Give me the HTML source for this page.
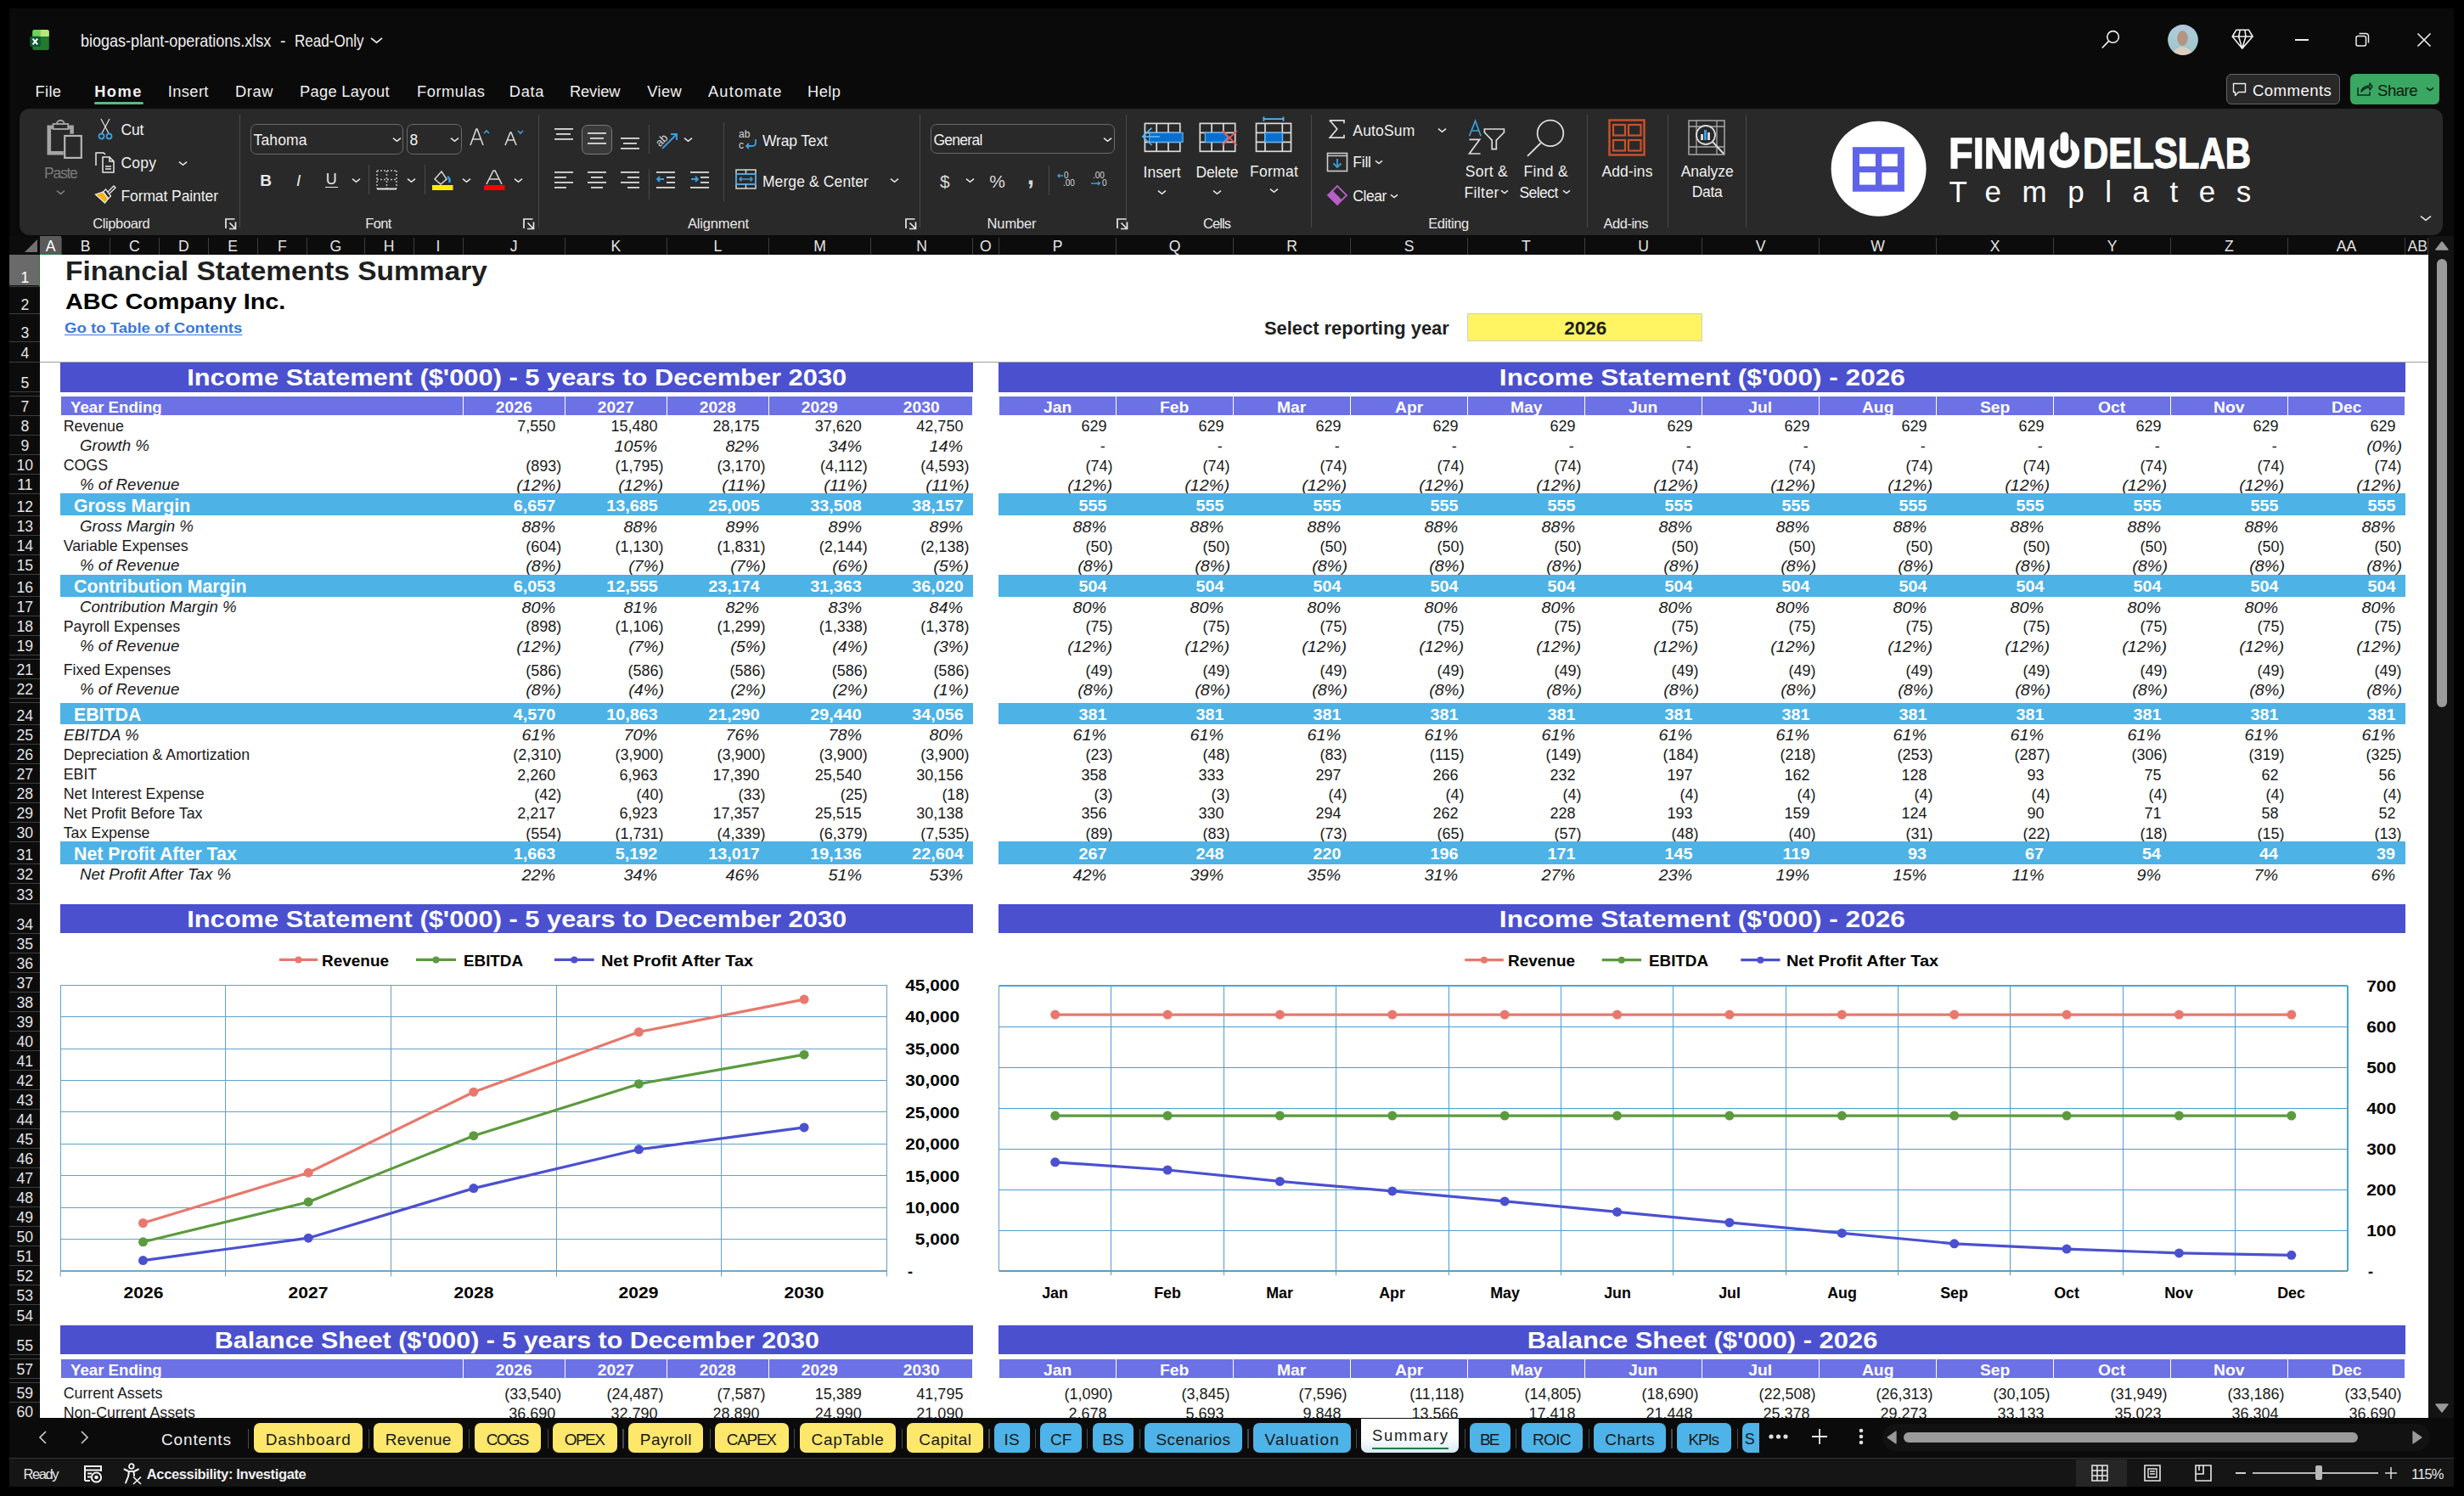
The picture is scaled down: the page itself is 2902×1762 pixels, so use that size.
<!DOCTYPE html><html><head><meta charset="utf-8"><style>html,body{margin:0;padding:0;background:#000;width:2902px;height:1762px;overflow:hidden}body{position:relative;font-family:"Liberation Sans",sans-serif}div,span,svg{position:absolute}.t{white-space:pre}</style></head><body>
<div style="left:11.00px;top:10.00px;width:2879.00px;height:1741.00px;background:#0a0a0a;"></div>
<svg style="position:absolute;left:34px;top:34px;overflow:visible" width="25" height="25" viewBox="0 0 25 25"><defs><clipPath id="xl"><rect x="4.25" y="0.9" width="19.55" height="24" rx="2.5"/></clipPath></defs><g clip-path="url(#xl)"><rect x="0" y="0" width="25" height="25" fill="#237a2e"/><rect x="0" y="0" width="13.3" height="9" fill="#6ed35a"/><rect x="13.3" y="0" width="12" height="9" fill="#b8e878"/></g><rect x="1.2" y="8.8" width="12.7" height="12.3" rx="2.2" fill="#0c5a30"/><path d="M4.6 11.6l5.6 6.8M10.2 11.6l-5.6 6.8" stroke="#fff" stroke-width="2.1"/></svg>
<span class="t" style="left:95.40px;top:39.04px;font-size:19.8px;line-height:19.8px;color:#f0f0f0;transform:scaleX(0.9110);transform-origin:left center;">biogas-plant-operations.xlsx</span>
<span class="t" style="left:330.00px;top:39.29px;font-size:19.5px;line-height:19.5px;color:#f0f0f0;">-</span>
<span class="t" style="left:347.40px;top:39.04px;font-size:19.8px;line-height:19.8px;color:#f0f0f0;transform:scaleX(0.8622);transform-origin:left center;">Read-Only</span>
<svg style="position:absolute;left:435.2px;top:38.5px;overflow:visible" width="17.0" height="17.0" viewBox="0 0 17.0 17.0"><polyline points="2,5.9 8.5,11.1 15.0,5.9" fill="none" stroke="#f0f0f0" stroke-width="1.8"/></svg>
<svg style="position:absolute;left:2473px;top:34px;overflow:visible" width="24" height="24" viewBox="0 0 24 24"><circle cx="15.6" cy="9.4" r="6.8" fill="none" stroke="#eee" stroke-width="1.6"/><path d="M10.6 14.4L2.8 22.5" stroke="#eee" stroke-width="1.7"/></svg>
<svg style="position:absolute;left:2553px;top:29px;overflow:visible" width="36" height="36" viewBox="0 0 36 36"><defs><clipPath id="av"><circle cx="18" cy="18" r="17.9"/></clipPath><linearGradient id="avg" x1="0" y1="0" x2="0" y2="1"><stop offset="0" stop-color="#b5c6e0"/><stop offset="0.3" stop-color="#a9cbd6"/><stop offset="1" stop-color="#9cc5c8"/></linearGradient></defs><g clip-path="url(#av)"><rect width="36" height="36" fill="url(#avg)"/><ellipse cx="17.5" cy="16" rx="6.3" ry="9" fill="#b39584"/><path d="M5 37 Q9 26 17 26 Q26 26 31 37Z" fill="#d9cfc3"/></g></svg>
<svg style="position:absolute;left:2628px;top:34px;overflow:visible" width="27" height="25" viewBox="0 0 27 25"><path d="M5.9 1.2h14.5l4.7 7.8L12.7 23.1 1.2 9z M1.2 9h23.9 M10.3 1.2L8.6 9l4.1 14.1 M15.9 1.2L17 9l-4.3 14.1" fill="none" stroke="#f0f0f0" stroke-width="1.6" stroke-linejoin="round"/></svg>
<div style="left:2702.70px;top:46.00px;width:16.30px;height:1.60px;background:#eee;"></div>
<svg style="position:absolute;left:2774px;top:38px;overflow:visible" width="18" height="18" viewBox="0 0 18 18"><rect x="1" y="4.5" width="11.5" height="11.5" rx="2" fill="none" stroke="#eee" stroke-width="1.5"/><path d="M4.5 1.5h8a3 3 0 0 1 3 3v8" fill="none" stroke="#eee" stroke-width="1.5"/></svg>
<svg style="position:absolute;left:2846px;top:38px;overflow:visible" width="18" height="18" viewBox="0 0 18 18"><path d="M1.5 1.5l15 15M16.5 1.5l-15 15" stroke="#eee" stroke-width="1.6"/></svg>
<div style="left:2621.60px;top:87.00px;width:134.00px;height:36.00px;background:#292929;border:1.3px solid #666;border-radius:6px;box-sizing:border-box;"></div>
<svg style="position:absolute;left:2629px;top:97px;overflow:visible" width="17" height="17" viewBox="0 0 17 17"><path d="M1.5 1.5h14v10h-8l-4 4v-4h-2z" fill="none" stroke="#eee" stroke-width="1.4" stroke-linejoin="round"/></svg>
<span class="t" style="left:2653.00px;top:97.96px;font-size:18.6px;line-height:18.6px;color:#f8f8f8;letter-spacing:0.425px;">Comments</span>
<div style="left:2768.00px;top:87.00px;width:104.70px;height:36.00px;background:#3aa862;border-radius:6px;"></div>
<svg style="position:absolute;left:2775px;top:95px;overflow:visible" width="20" height="19" viewBox="0 0 20 19"><path d="M2 8v9h14v-4" fill="none" stroke="#102a18" stroke-width="1.5"/><path d="M6 13c1-5 5-7 10-7V3l3 4-3 4V8c-4 0-7 1-10 5z" fill="none" stroke="#102a18" stroke-width="1.4" stroke-linejoin="round"/></svg>
<span class="t" style="left:2800.00px;top:97.96px;font-size:18.6px;line-height:18.6px;color:#0a1a0e;letter-spacing:-0.508px;">Share</span>
<svg style="position:absolute;left:2856px;top:99px;overflow:visible" width="12" height="12" viewBox="0 0 12 12"><polyline points="2,4.4 6,7.6 10,4.4" fill="none" stroke="#0d1f12" stroke-width="1.6"/></svg>
<span class="t" style="left:41.60px;top:99.11px;font-size:18.3px;line-height:18.3px;color:#f0f0f0;letter-spacing:0.304px;">File</span>
<span class="t" style="left:111.20px;top:99.11px;font-size:18.3px;line-height:18.3px;color:#f0f0f0;font-weight:700;letter-spacing:1.452px;">Home</span>
<span class="t" style="left:197.80px;top:99.11px;font-size:18.3px;line-height:18.3px;color:#f0f0f0;letter-spacing:0.386px;">Insert</span>
<span class="t" style="left:277.00px;top:99.11px;font-size:18.3px;line-height:18.3px;color:#f0f0f0;letter-spacing:0.632px;">Draw</span>
<span class="t" style="left:353.00px;top:99.11px;font-size:18.3px;line-height:18.3px;color:#f0f0f0;letter-spacing:0.283px;">Page Layout</span>
<span class="t" style="left:491.00px;top:99.11px;font-size:18.3px;line-height:18.3px;color:#f0f0f0;letter-spacing:0.533px;">Formulas</span>
<span class="t" style="left:599.80px;top:99.11px;font-size:18.3px;line-height:18.3px;color:#f0f0f0;letter-spacing:0.648px;">Data</span>
<span class="t" style="left:670.90px;top:99.11px;font-size:18.3px;line-height:18.3px;color:#f0f0f0;letter-spacing:-0.081px;">Review</span>
<span class="t" style="left:762.20px;top:99.11px;font-size:18.3px;line-height:18.3px;color:#f0f0f0;letter-spacing:0.422px;">View</span>
<span class="t" style="left:834.00px;top:99.11px;font-size:18.3px;line-height:18.3px;color:#f0f0f0;letter-spacing:1.167px;">Automate</span>
<span class="t" style="left:951.00px;top:99.11px;font-size:18.3px;line-height:18.3px;color:#f0f0f0;letter-spacing:0.454px;">Help</span>
<div style="left:111.00px;top:119.70px;width:57.80px;height:3.10px;background:#5eb87a;border-radius:2px;"></div>
<div style="left:23.00px;top:128.00px;width:2854.00px;height:149.00px;background:#292929;border-radius:12px;"></div>
<div style="left:282.20px;top:135.00px;width:1.00px;height:133.00px;background:#4a4a4a;"></div>
<div style="left:633.60px;top:135.00px;width:1.00px;height:133.00px;background:#4a4a4a;"></div>
<div style="left:1083.20px;top:135.00px;width:1.00px;height:133.00px;background:#4a4a4a;"></div>
<div style="left:1326.00px;top:135.00px;width:1.00px;height:133.00px;background:#4a4a4a;"></div>
<div style="left:1543.80px;top:135.00px;width:1.00px;height:133.00px;background:#4a4a4a;"></div>
<div style="left:1868.50px;top:135.00px;width:1.00px;height:133.00px;background:#4a4a4a;"></div>
<div style="left:1963.50px;top:135.00px;width:1.00px;height:133.00px;background:#4a4a4a;"></div>
<div style="left:2056.30px;top:135.00px;width:1.00px;height:133.00px;background:#4a4a4a;"></div>
<svg style="position:absolute;left:50px;top:138px;overflow:visible" width="50" height="50" viewBox="0 0 50 50"><path d="M12 11.7H7.8V42.3H24.8" fill="none" stroke="#a4a4a4" stroke-width="4.6"/><path d="M30.5 11.7H34.6V19.8" fill="none" stroke="#a4a4a4" stroke-width="4.6"/><rect x="12.6" y="8" width="17.6" height="6" fill="none" stroke="#a4a4a4" stroke-width="1.9"/><path d="M17 8a4.2 4.2 0 0 1 8.6 0" fill="none" stroke="#a4a4a4" stroke-width="1.9"/><rect x="26.2" y="22" width="19.6" height="25.9" fill="none" stroke="#b4b4b4" stroke-width="2.2"/></svg>
<span class="t" style="left:52.00px;top:195.99px;font-size:17.5px;line-height:17.5px;color:#7a7a7a;letter-spacing:-1.237px;">Paste</span>
<svg style="position:absolute;left:65.0px;top:219.5px;overflow:visible" width="13.0" height="13.0" viewBox="0 0 13.0 13.0"><polyline points="2,4.7 6.5,8.3 11.0,4.7" fill="none" stroke="#7a7a7a" stroke-width="1.7"/></svg>
<svg style="position:absolute;left:114px;top:139px;overflow:visible" width="20" height="26" viewBox="0 0 20 26"><path d="M5 1l9 17M15 1L6 18" stroke="#e8e8e8" stroke-width="1.2"/><circle cx="5.5" cy="21.5" r="3" fill="none" stroke="#3c9ee0" stroke-width="1.8"/><circle cx="14.5" cy="21.5" r="3" fill="none" stroke="#3c9ee0" stroke-width="1.8"/></svg>
<span class="t" style="left:142.40px;top:144.79px;font-size:17.5px;line-height:17.5px;color:#f0f0f0;letter-spacing:-0.116px;">Cut</span>
<svg style="position:absolute;left:111px;top:178px;overflow:visible" width="26" height="26" viewBox="0 0 26 26"><path d="M2 17V2h9l2 2M14 6l0 0" fill="none" stroke="#e8e8e8" stroke-width="1.5"/><path d="M10 7h8l5 5v13H10z M18 7v5h5 M13 18h7M13 21h7" fill="none" stroke="#e8e8e8" stroke-width="1.5"/></svg>
<span class="t" style="left:142.40px;top:183.99px;font-size:17.5px;line-height:17.5px;color:#f0f0f0;letter-spacing:0.216px;">Copy</span>
<svg style="position:absolute;left:208.5px;top:185.5px;overflow:visible" width="13.0" height="13.0" viewBox="0 0 13.0 13.0"><polyline points="2,4.7 6.5,8.3 11.0,4.7" fill="none" stroke="#e8e8e8" stroke-width="1.6"/></svg>
<svg style="position:absolute;left:111px;top:217px;overflow:visible" width="26" height="26" viewBox="0 0 26 26"><path d="M1.5 12l11 10 4-5-6-8z" fill="#f4b400" stroke="#e8e8e8" stroke-width="1.3"/><path d="M10.5 9l6 8 3-3-6-8z" fill="none" stroke="#e8e8e8" stroke-width="1.3"/><path d="M16 9l7-7 2 2-7 7" fill="none" stroke="#e8e8e8" stroke-width="1.4"/></svg>
<span class="t" style="left:142.40px;top:222.69px;font-size:17.5px;line-height:17.5px;color:#f0f0f0;letter-spacing:-0.087px;">Format Painter</span>
<span class="t" style="left:109.20px;top:255.03px;font-size:16.5px;line-height:16.5px;color:#e8e8e8;letter-spacing:-0.378px;">Clipboard</span>
<svg style="position:absolute;left:264.5px;top:257px;overflow:visible" width="14" height="14" viewBox="0 0 14 14"><path d="M1 12V1h10.5M12.5 4.5V12.5H5M5.5 5.5l6 6" fill="none" stroke="#e8e8e8" stroke-width="1.7"/></svg>
<div style="left:295.30px;top:146.20px;width:180.20px;height:35.50px;background:#292929;border:1.3px solid #6a6a6a;border-radius:7px;box-sizing:border-box;"></div>
<span class="t" style="left:298.50px;top:157.19px;font-size:17.5px;line-height:17.5px;color:#f0f0f0;letter-spacing:0.148px;">Tahoma</span>
<svg style="position:absolute;left:460.5px;top:157.5px;overflow:visible" width="13.0" height="13.0" viewBox="0 0 13.0 13.0"><polyline points="2,4.7 6.5,8.3 11.0,4.7" fill="none" stroke="#e8e8e8" stroke-width="1.6"/></svg>
<div style="left:479.40px;top:146.20px;width:64.30px;height:35.50px;background:#292929;border:1.3px solid #6a6a6a;border-radius:7px;box-sizing:border-box;"></div>
<span class="t" style="left:482.40px;top:157.19px;font-size:17.5px;line-height:17.5px;color:#f0f0f0;">8</span>
<svg style="position:absolute;left:528.5px;top:157.5px;overflow:visible" width="13.0" height="13.0" viewBox="0 0 13.0 13.0"><polyline points="2,4.7 6.5,8.3 11.0,4.7" fill="none" stroke="#e8e8e8" stroke-width="1.6"/></svg>
<svg style="position:absolute;left:553px;top:150px;overflow:visible" width="26" height="22" viewBox="0 0 26 22"><path d="M1 21L8 2h1l7 19M4 14h10" fill="none" stroke="#d8d8d8" stroke-width="1.6"/><path d="M17 7l3-3 3 3" fill="none" stroke="#3c9ee0" stroke-width="1.6"/></svg>
<svg style="position:absolute;left:594px;top:152px;overflow:visible" width="24" height="20" viewBox="0 0 24 20"><path d="M1 19L7 4h1l6 15M3.5 13h8" fill="none" stroke="#d8d8d8" stroke-width="1.6"/><path d="M16 2l3 3 3-3" fill="none" stroke="#3c9ee0" stroke-width="1.6"/></svg>
<span class="t" style="left:306.14px;top:202.92px;font-size:19px;line-height:19px;color:#e8e8e8;font-weight:700;">B</span>
<span class="t" style="left:348.96px;top:202.92px;font-size:19px;line-height:19px;color:#e8e8e8;font-style:italic;font-family:"Liberation Serif";">I</span>
<span class="t" style="left:383.80px;top:201.76px;font-size:18px;line-height:18px;color:#e8e8e8;">U</span>
<div style="left:383.00px;top:219.50px;width:14.50px;height:1.50px;background:#e8e8e8;"></div>
<svg style="position:absolute;left:413.0px;top:205.5px;overflow:visible" width="13.0" height="13.0" viewBox="0 0 13.0 13.0"><polyline points="2,4.7 6.5,8.3 11.0,4.7" fill="none" stroke="#e8e8e8" stroke-width="1.6"/></svg>
<div style="left:434.40px;top:193.70px;width:1.00px;height:35.80px;background:#4a4a4a;"></div>
<svg style="position:absolute;left:443px;top:200px;overflow:visible" width="25" height="24" viewBox="0 0 25 24"><path d="M1 1h23M1 1v21M24 1v21M12.5 1v21M1 11.5h23" fill="none" stroke="#bdbdbd" stroke-width="1.5" stroke-dasharray="2 2"/><path d="M1 22.5h23" stroke="#e8e8e8" stroke-width="2"/></svg>
<svg style="position:absolute;left:478.1px;top:205.5px;overflow:visible" width="13.0" height="13.0" viewBox="0 0 13.0 13.0"><polyline points="2,4.7 6.5,8.3 11.0,4.7" fill="none" stroke="#e8e8e8" stroke-width="1.6"/></svg>
<div style="left:499.60px;top:193.70px;width:1.00px;height:35.80px;background:#4a4a4a;"></div>
<svg style="position:absolute;left:508px;top:199px;overflow:visible" width="27" height="27" viewBox="0 0 27 27"><path d="M4 12l8-9 6 9-7 6z" fill="none" stroke="#d8d8d8" stroke-width="1.5"/><path d="M19 9q4 3 2 7" fill="none" stroke="#3c9ee0" stroke-width="2.5"/><rect x="1" y="19" width="24.5" height="6" fill="#ffec00"/></svg>
<svg style="position:absolute;left:543.1px;top:205.5px;overflow:visible" width="13.0" height="13.0" viewBox="0 0 13.0 13.0"><polyline points="2,4.7 6.5,8.3 11.0,4.7" fill="none" stroke="#e8e8e8" stroke-width="1.6"/></svg>
<svg style="position:absolute;left:570px;top:199px;overflow:visible" width="25" height="27" viewBox="0 0 25 27"><path d="M3 18L11 2h2l8 16M6 12h12" fill="none" stroke="#d8d8d8" stroke-width="1.6"/><rect x="0" y="19" width="24.5" height="6" fill="#ff0000"/></svg>
<svg style="position:absolute;left:603.5px;top:205.5px;overflow:visible" width="13.0" height="13.0" viewBox="0 0 13.0 13.0"><polyline points="2,4.7 6.5,8.3 11.0,4.7" fill="none" stroke="#e8e8e8" stroke-width="1.6"/></svg>
<span class="t" style="left:430.30px;top:255.03px;font-size:16.5px;line-height:16.5px;color:#e8e8e8;letter-spacing:-0.672px;">Font</span>
<svg style="position:absolute;left:616px;top:257px;overflow:visible" width="14" height="14" viewBox="0 0 14 14"><path d="M1 12V1h10.5M12.5 4.5V12.5H5M5.5 5.5l6 6" fill="none" stroke="#e8e8e8" stroke-width="1.7"/></svg>
<svg style="position:absolute;left:653px;top:150px;overflow:visible" width="24" height="24" viewBox="0 0 24 24"><rect x="0" y="1" width="22" height="1.8" fill="#dadada"/><rect x="2" y="7" width="17" height="1.8" fill="#dadada"/><rect x="0" y="13" width="22" height="1.8" fill="#dadada"/></svg>
<div style="left:685.40px;top:146.50px;width:35.60px;height:35.10px;background:#3a3a3a;border:1.3px solid #7a7a7a;border-radius:7px;box-sizing:border-box;"></div>
<svg style="position:absolute;left:692px;top:155px;overflow:visible" width="24" height="24" viewBox="0 0 24 24"><rect x="0" y="1" width="22" height="1.8" fill="#dadada"/><rect x="3" y="7" width="16" height="1.8" fill="#dadada"/><rect x="0" y="13" width="22" height="1.8" fill="#dadada"/></svg>
<svg style="position:absolute;left:731px;top:161px;overflow:visible" width="24" height="24" viewBox="0 0 24 24"><rect x="0" y="1" width="22" height="1.8" fill="#dadada"/><rect x="3" y="7" width="16" height="1.8" fill="#dadada"/><rect x="0" y="13" width="22" height="1.8" fill="#dadada"/></svg>
<div style="left:763.50px;top:146.50px;width:1.00px;height:34.50px;background:#4a4a4a;"></div>
<svg style="position:absolute;left:772px;top:151px;overflow:visible" width="28" height="28" viewBox="0 0 28 28"><text x="0" y="18" font-family="Liberation Sans" font-size="13" fill="#d8d8d8" transform="rotate(-45 8 14)">ab</text><path d="M8 24L25 7M18 7h7v7" fill="none" stroke="#3c9ee0" stroke-width="1.8"/></svg>
<svg style="position:absolute;left:803.5px;top:157.5px;overflow:visible" width="13.0" height="13.0" viewBox="0 0 13.0 13.0"><polyline points="2,4.7 6.5,8.3 11.0,4.7" fill="none" stroke="#e8e8e8" stroke-width="1.6"/></svg>
<svg style="position:absolute;left:653px;top:201px;overflow:visible" width="24" height="24" viewBox="0 0 24 24"><rect x="0" y="1" width="22" height="1.8" fill="#dadada"/><rect x="0" y="7" width="14" height="1.8" fill="#dadada"/><rect x="0" y="13" width="22" height="1.8" fill="#dadada"/><rect x="0" y="19" width="14" height="1.8" fill="#dadada"/></svg>
<svg style="position:absolute;left:692px;top:201px;overflow:visible" width="24" height="24" viewBox="0 0 24 24"><rect x="0" y="1" width="22" height="1.8" fill="#dadada"/><rect x="4" y="7" width="14" height="1.8" fill="#dadada"/><rect x="0" y="13" width="22" height="1.8" fill="#dadada"/><rect x="4" y="19" width="14" height="1.8" fill="#dadada"/></svg>
<svg style="position:absolute;left:731px;top:201px;overflow:visible" width="24" height="24" viewBox="0 0 24 24"><rect x="0" y="1" width="22" height="1.8" fill="#dadada"/><rect x="8" y="7" width="14" height="1.8" fill="#dadada"/><rect x="0" y="13" width="22" height="1.8" fill="#dadada"/><rect x="8" y="19" width="14" height="1.8" fill="#dadada"/></svg>
<div style="left:763.50px;top:199.00px;width:1.00px;height:36.00px;background:#4a4a4a;"></div>
<svg style="position:absolute;left:773px;top:201px;overflow:visible" width="24" height="24" viewBox="0 0 24 24"><rect x="0" y="1" width="22" height="1.8" fill="#dadada"/><rect x="12" y="7" width="10" height="1.8" fill="#dadada"/><rect x="12" y="13" width="10" height="1.8" fill="#dadada"/><rect x="0" y="19" width="22" height="1.8" fill="#dadada"/><path d="M9 10H1M4 7l-3 3 3 3" fill="none" stroke="#3c9ee0" stroke-width="1.8"/></svg>
<svg style="position:absolute;left:813px;top:201px;overflow:visible" width="24" height="24" viewBox="0 0 24 24"><rect x="0" y="1" width="22" height="1.8" fill="#dadada"/><rect x="12" y="7" width="10" height="1.8" fill="#dadada"/><rect x="12" y="13" width="10" height="1.8" fill="#dadada"/><rect x="0" y="19" width="22" height="1.8" fill="#dadada"/><path d="M1 10h8M6 7l3 3-3 3" fill="none" stroke="#3c9ee0" stroke-width="1.8"/></svg>
<div style="left:851.60px;top:143.70px;width:1.00px;height:93.30px;background:#4a4a4a;"></div>
<svg style="position:absolute;left:870px;top:151px;overflow:visible" width="24" height="26" viewBox="0 0 24 26"><text x="0" y="11" font-family="Liberation Sans" font-size="12" fill="#d8d8d8">ab</text><text x="0" y="24" font-family="Liberation Sans" font-size="12" fill="#d8d8d8">c</text><path d="M20 13v4q0 4-4 4H9M12 18l-3 3 3 3" fill="none" stroke="#3c9ee0" stroke-width="1.8"/></svg>
<span class="t" style="left:897.90px;top:158.19px;font-size:17.5px;line-height:17.5px;color:#f0f0f0;letter-spacing:-0.142px;">Wrap Text</span>
<svg style="position:absolute;left:866px;top:199px;overflow:visible" width="25" height="24" viewBox="0 0 25 24"><rect x="1" y="1" width="23" height="22" fill="none" stroke="#d8d8d8" stroke-width="1.5"/><path d="M1 6h23M1 18h23M12.5 1v5M12.5 18v5" stroke="#d8d8d8" stroke-width="1.5"/><rect x="1" y="6" width="23" height="12" fill="none" stroke="#3c9ee0" stroke-width="1.5"/><path d="M5 12h15M7.5 9.5L5 12l2.5 2.5M17.5 9.5L20 12l-2.5 2.5" fill="none" stroke="#3c9ee0" stroke-width="1.5"/></svg>
<span class="t" style="left:897.90px;top:206.19px;font-size:17.5px;line-height:17.5px;color:#f0f0f0;letter-spacing:0.113px;">Merge &amp; Center</span>
<svg style="position:absolute;left:1047.2px;top:205.5px;overflow:visible" width="13.0" height="13.0" viewBox="0 0 13.0 13.0"><polyline points="2,4.7 6.5,8.3 11.0,4.7" fill="none" stroke="#e8e8e8" stroke-width="1.6"/></svg>
<span class="t" style="left:810.00px;top:255.03px;font-size:16.5px;line-height:16.5px;color:#e8e8e8;letter-spacing:-0.172px;">Alignment</span>
<svg style="position:absolute;left:1066px;top:257px;overflow:visible" width="14" height="14" viewBox="0 0 14 14"><path d="M1 12V1h10.5M12.5 4.5V12.5H5M5.5 5.5l6 6" fill="none" stroke="#e8e8e8" stroke-width="1.7"/></svg>
<div style="left:1096.20px;top:146.00px;width:217.10px;height:35.40px;background:#292929;border:1.3px solid #6a6a6a;border-radius:7px;box-sizing:border-box;"></div>
<span class="t" style="left:1099.40px;top:157.19px;font-size:17.5px;line-height:17.5px;color:#f0f0f0;letter-spacing:-0.710px;">General</span>
<svg style="position:absolute;left:1297.9px;top:157.5px;overflow:visible" width="13.0" height="13.0" viewBox="0 0 13.0 13.0"><polyline points="2,4.7 6.5,8.3 11.0,4.7" fill="none" stroke="#e8e8e8" stroke-width="1.6"/></svg>
<span class="t" style="left:1106.96px;top:203.22px;font-size:21px;line-height:21px;color:#d8d8d8;">$</span>
<svg style="position:absolute;left:1135.5px;top:205.5px;overflow:visible" width="13.0" height="13.0" viewBox="0 0 13.0 13.0"><polyline points="2,4.7 6.5,8.3 11.0,4.7" fill="none" stroke="#e8e8e8" stroke-width="1.6"/></svg>
<span class="t" style="left:1165.16px;top:203.22px;font-size:21px;line-height:21px;color:#d8d8d8;">%</span>
<span class="t" style="left:1209.73px;top:191.60px;font-size:30px;line-height:30px;color:#d8d8d8;font-weight:700;">,</span>
<div style="left:1235.40px;top:195.00px;width:1.00px;height:35.00px;background:#4a4a4a;"></div>
<svg style="position:absolute;left:1245px;top:203px;overflow:visible" width="24" height="16" viewBox="0 0 24 16"><text x="8" y="7" font-family="Liberation Sans" font-size="10" fill="#d8d8d8">0</text><text x="7" y="16" font-family="Liberation Sans" font-size="10" fill="#d8d8d8">.00</text><path d="M1 4h6M3 2l-2 2 2 2" fill="none" stroke="#3c9ee0" stroke-width="1.4"/></svg>
<svg style="position:absolute;left:1284px;top:203px;overflow:visible" width="24" height="16" viewBox="0 0 24 16"><text x="3" y="7" font-family="Liberation Sans" font-size="10" fill="#d8d8d8">.00</text><text x="14" y="16" font-family="Liberation Sans" font-size="10" fill="#d8d8d8">0</text><path d="M1 13h11M9 11l2 2-2 2" fill="none" stroke="#3c9ee0" stroke-width="1.4"/></svg>
<span class="t" style="left:1162.60px;top:255.03px;font-size:16.5px;line-height:16.5px;color:#e8e8e8;letter-spacing:-0.137px;">Number</span>
<svg style="position:absolute;left:1314.5px;top:257px;overflow:visible" width="14" height="14" viewBox="0 0 14 14"><path d="M1 12V1h10.5M12.5 4.5V12.5H5M5.5 5.5l6 6" fill="none" stroke="#e8e8e8" stroke-width="1.7"/></svg>
<svg style="position:absolute;left:1345px;top:138px;overflow:visible" width="52" height="44" viewBox="0 0 52 44"><rect x="3.4" y="7.4" width="41.4" height="32.9" fill="none" stroke="#dcdcdc" stroke-width="1.7"/><path d="M17.2 7.4v33M31 7.4v33M3.4 18.4h41.4M3.4 29.3h41.4" fill="none" stroke="#dcdcdc" stroke-width="1.7"/><rect x="8.7" y="18.4" width="39.3" height="10.9" fill="#0a6ed1" stroke="#58b4f0" stroke-width="1.3"/><path d="M11.5 12.7L0.8 22.8 11.5 33M0.8 22.8h20" fill="none" stroke="#58b4f0" stroke-width="1.7"/></svg>
<span class="t" style="left:1346.50px;top:195.19px;font-size:17.5px;line-height:17.5px;color:#f0f0f0;letter-spacing:0.047px;">Insert</span>
<svg style="position:absolute;left:1362.0px;top:220.0px;overflow:visible" width="13.0" height="13.0" viewBox="0 0 13.0 13.0"><polyline points="2,4.7 6.5,8.3 11.0,4.7" fill="none" stroke="#e8e8e8" stroke-width="1.6"/></svg>
<svg style="position:absolute;left:1410px;top:138px;overflow:visible" width="52" height="44" viewBox="0 0 52 44"><rect x="3.3" y="7.4" width="41.4" height="32.9" fill="none" stroke="#dcdcdc" stroke-width="1.7"/><path d="M17.1 7.4v33M30.9 7.4v33M3.3 18.4h41.4M3.3 29.3h41.4" fill="none" stroke="#dcdcdc" stroke-width="1.7"/><path d="M9.4 18.4h22l5 5.45-5 5.45h-22z" fill="#0a6ed1" stroke="#58b4f0" stroke-width="1.3"/><path d="M29.7 16l17 17M46.7 16l-17 17" stroke="#e35a5a" stroke-width="1.8"/></svg>
<span class="t" style="left:1408.40px;top:195.19px;font-size:17.5px;line-height:17.5px;color:#f0f0f0;letter-spacing:-0.117px;">Delete</span>
<svg style="position:absolute;left:1426.9px;top:220.0px;overflow:visible" width="13.0" height="13.0" viewBox="0 0 13.0 13.0"><polyline points="2,4.7 6.5,8.3 11.0,4.7" fill="none" stroke="#e8e8e8" stroke-width="1.6"/></svg>
<svg style="position:absolute;left:1476px;top:136px;overflow:visible" width="52" height="46" viewBox="0 0 52 46"><g transform="translate(0,2)"><rect x="3.5" y="7.4" width="41" height="32.9" fill="none" stroke="#dcdcdc" stroke-width="1.7"/><path d="M14 7.4v33M34.3 7.4v33M3.5 18.4h41M3.5 29.3h41" fill="none" stroke="#dcdcdc" stroke-width="1.7"/><rect x="14" y="18.4" width="20.3" height="10.9" fill="#0a6ed1" stroke="#58b4f0" stroke-width="1.3"/><path d="M12.4 2.1h23.1M12.4 -0.6v5.4M35.5 -0.6v5.4" stroke="#58b4f0" stroke-width="1.8"/></g></svg>
<span class="t" style="left:1471.90px;top:194.19px;font-size:17.5px;line-height:17.5px;color:#f0f0f0;letter-spacing:0.315px;">Format</span>
<svg style="position:absolute;left:1493.9px;top:217.9px;overflow:visible" width="13.0" height="13.0" viewBox="0 0 13.0 13.0"><polyline points="2,4.7 6.5,8.3 11.0,4.7" fill="none" stroke="#e8e8e8" stroke-width="1.6"/></svg>
<span class="t" style="left:1416.90px;top:255.03px;font-size:16.5px;line-height:16.5px;color:#e8e8e8;letter-spacing:-0.919px;">Cells</span>
<svg style="position:absolute;left:1564px;top:140px;overflow:visible" width="22" height="24" viewBox="0 0 22 24"><path d="M2.5 3.5V1.8h16.5v3.5M2.2 1.8l8.6 10.2-8.6 10.2h16.8v-3.5" fill="none" stroke="#dcdcdc" stroke-width="1.7" stroke-linejoin="miter"/></svg>
<span class="t" style="left:1593.30px;top:145.69px;font-size:17.5px;line-height:17.5px;color:#f0f0f0;letter-spacing:0.170px;">AutoSum</span>
<svg style="position:absolute;left:1692.4px;top:146.5px;overflow:visible" width="13.0" height="13.0" viewBox="0 0 13.0 13.0"><polyline points="2,4.7 6.5,8.3 11.0,4.7" fill="none" stroke="#e8e8e8" stroke-width="1.6"/></svg>
<svg style="position:absolute;left:1562px;top:179px;overflow:visible" width="26" height="24" viewBox="0 0 26 24"><rect x="1.5" y="1.5" width="23" height="21" fill="none" stroke="#d0d0d0" stroke-width="1.6"/><path d="M1.5 4.5h23" stroke="#d0d0d0" stroke-width="1.4"/><path d="M13 8v10M8.5 13.5l4.5 4.5 4.5-4.5" fill="none" stroke="#3c9ee0" stroke-width="1.8"/></svg>
<span class="t" style="left:1593.30px;top:183.19px;font-size:17.5px;line-height:17.5px;color:#f0f0f0;letter-spacing:-0.218px;">Fill</span>
<svg style="position:absolute;left:1617.8px;top:184.7px;overflow:visible" width="12" height="12" viewBox="0 0 12 12"><polyline points="2,4.4 6,7.6 10,4.4" fill="none" stroke="#e8e8e8" stroke-width="1.6"/></svg>
<svg style="position:absolute;left:1562px;top:217px;overflow:visible" width="26" height="26" viewBox="0 0 26 26"><path d="M2 13l11-11 11 11-11 11z" fill="none" stroke="#b65fc6" stroke-width="1.8"/><path d="M2 13l5.5-5.5 11 11L13 24z" fill="#b65fc6"/></svg>
<span class="t" style="left:1593.30px;top:222.69px;font-size:17.5px;line-height:17.5px;color:#f0f0f0;letter-spacing:-0.455px;">Clear</span>
<svg style="position:absolute;left:1636px;top:224.5px;overflow:visible" width="12" height="12" viewBox="0 0 12 12"><polyline points="2,4.4 6,7.6 10,4.4" fill="none" stroke="#e8e8e8" stroke-width="1.6"/></svg>
<svg style="position:absolute;left:1726px;top:141px;overflow:visible" width="50" height="45" viewBox="0 0 50 45"><path d="M4.5 19.3L11.6 1.4 18.1 19.3M7.3 13h8.5" fill="none" stroke="#3c9ee0" stroke-width="1.7"/><path d="M4.5 23.3h12.2L4.5 40h13.1" fill="none" stroke="#dcdcdc" stroke-width="1.7"/><path d="M22.4 11h23v4l-9.1 9.1v10.5h-5.1V24.1L22.4 15z" fill="none" stroke="#dcdcdc" stroke-width="1.7" stroke-linejoin="miter"/></svg>
<span class="t" style="left:1725.80px;top:194.19px;font-size:17.5px;line-height:17.5px;color:#f0f0f0;letter-spacing:0.274px;">Sort &amp;</span>
<span class="t" style="left:1724.40px;top:218.69px;font-size:17.5px;line-height:17.5px;color:#f0f0f0;letter-spacing:0.422px;">Filter</span>
<svg style="position:absolute;left:1766px;top:220px;overflow:visible" width="12" height="12" viewBox="0 0 12 12"><polyline points="2,4.4 6,7.6 10,4.4" fill="none" stroke="#e8e8e8" stroke-width="1.6"/></svg>
<svg style="position:absolute;left:1797px;top:141px;overflow:visible" width="46" height="45" viewBox="0 0 46 45"><circle cx="29" cy="15.9" r="15.3" fill="none" stroke="#dcdcdc" stroke-width="1.8"/><path d="M17.6 27.5L2 42.9" stroke="#dcdcdc" stroke-width="1.9"/></svg>
<span class="t" style="left:1794.60px;top:194.19px;font-size:17.5px;line-height:17.5px;color:#f0f0f0;letter-spacing:0.284px;">Find &amp;</span>
<span class="t" style="left:1789.40px;top:218.69px;font-size:17.5px;line-height:17.5px;color:#f0f0f0;letter-spacing:-0.528px;">Select</span>
<svg style="position:absolute;left:1839px;top:220px;overflow:visible" width="12" height="12" viewBox="0 0 12 12"><polyline points="2,4.4 6,7.6 10,4.4" fill="none" stroke="#e8e8e8" stroke-width="1.6"/></svg>
<span class="t" style="left:1682.20px;top:255.03px;font-size:16.5px;line-height:16.5px;color:#e8e8e8;letter-spacing:-0.409px;">Editing</span>
<svg style="position:absolute;left:1894px;top:140px;overflow:visible" width="45" height="44" viewBox="0 0 45 44"><rect x="1.5" y="1.5" width="41" height="41" fill="none" stroke="#c9532b" stroke-width="2.4"/><rect x="6" y="7" width="14" height="12.5" fill="none" stroke="#c9532b" stroke-width="2.2"/><rect x="24" y="7" width="14.5" height="12.5" fill="none" stroke="#c9532b" stroke-width="2.2"/><rect x="6" y="25" width="14" height="12.5" fill="none" stroke="#c9532b" stroke-width="2.2"/><rect x="24" y="25" width="14.5" height="12.5" fill="none" stroke="#c9532b" stroke-width="2.2"/></svg>
<span class="t" style="left:1886.40px;top:194.19px;font-size:17.5px;line-height:17.5px;color:#f0f0f0;letter-spacing:0.111px;">Add-ins</span>
<span class="t" style="left:1888.50px;top:255.03px;font-size:16.5px;line-height:16.5px;color:#e8e8e8;letter-spacing:-0.491px;">Add-ins</span>
<svg style="position:absolute;left:1988px;top:141px;overflow:visible" width="44" height="42" viewBox="0 0 44 42"><rect x="1" y="1" width="42" height="40" fill="none" stroke="#a8a8a8" stroke-width="1.5"/><path d="M1 8h42M1 32h42M10 1v40M34 1v40" stroke="#a8a8a8" stroke-width="1.3"/><circle cx="21" cy="18" r="11" fill="#292929" stroke="#d8d8d8" stroke-width="1.8"/><path d="M29 26l13 14" stroke="#d8d8d8" stroke-width="2"/><rect x="15" y="17" width="3" height="7" fill="#d8d8d8"/><rect x="19" y="12" width="3" height="12" fill="#3c9ee0"/><rect x="23" y="15" width="3" height="9" fill="#d8d8d8"/></svg>
<span class="t" style="left:1979.70px;top:194.19px;font-size:17.5px;line-height:17.5px;color:#f0f0f0;letter-spacing:-0.043px;">Analyze</span>
<span class="t" style="left:1992.70px;top:218.19px;font-size:17.5px;line-height:17.5px;color:#f0f0f0;letter-spacing:-0.322px;">Data</span>
<svg style="position:absolute;left:2156px;top:142px;overflow:visible" width="114" height="114" viewBox="0 0 114 114"><circle cx="56.6" cy="56.7" r="56" fill="#fff"/><rect x="25.9" y="31.2" width="61" height="52.5" fill="#5f63ea"/><rect x="34" y="39.3" width="18.9" height="14.6" fill="#fff"/><rect x="60.3" y="39.3" width="18.5" height="14.6" fill="#fff"/><rect x="34" y="61.1" width="18.9" height="14.5" fill="#fff"/><rect x="60.3" y="61.1" width="18.5" height="14.5" fill="#fff"/></svg>
<span class="t" style="left:2295.00px;top:156.48px;font-size:50px;line-height:50px;color:#fff;font-weight:700;transform:scaleX(0.9403);transform-origin:left center;-webkit-text-stroke:1.3px #fff;">FINM</span>
<svg style="position:absolute;left:2410px;top:150px;overflow:visible" width="44" height="50" viewBox="0 0 44 50"><circle cx="21.4" cy="30.3" r="13.3" fill="none" stroke="#fff" stroke-width="8.8"/><rect x="14.5" y="0" width="14" height="32" rx="5" fill="#292929"/><rect x="16.5" y="5.6" width="9.8" height="25.1" rx="4.9" fill="#fff"/></svg>
<span class="t" style="left:2453.30px;top:156.48px;font-size:50px;line-height:50px;color:#fff;font-weight:700;transform:scaleX(0.8386);transform-origin:left center;-webkit-text-stroke:1.3px #fff;">DELSLAB</span>
<span class="t" style="left:2295.40px;top:208.47px;font-size:35px;line-height:35px;color:#fff;letter-spacing:24.548px;">Templates</span>
<svg style="position:absolute;left:2849px;top:249px;overflow:visible" width="16" height="16" viewBox="0 0 16 16"><polyline points="2,5.6 8,10.4 14,5.6" fill="none" stroke="#e0e0e0" stroke-width="1.6"/></svg>
<div style="left:11.00px;top:278.00px;width:2849.00px;height:22.00px;background:#0c0c0c;"></div>
<div style="left:47.40px;top:278.00px;width:24.60px;height:21.00px;background:#5a5a5a;"></div>
<div style="left:47.40px;top:299.00px;width:24.60px;height:2.00px;background:#1f7a48;"></div>
<svg style="position:absolute;left:28px;top:282px;overflow:visible" width="17" height="15" viewBox="0 0 17 15"><path d="M16 0V15H1z" fill="#707070"/></svg>
<div style="left:71.50px;top:280.00px;width:1.00px;height:20.00px;background:#3e3e3e;"></div>
<span class="t" style="left:53.63px;top:282.10px;font-size:17.6px;line-height:17.6px;color:#fff;">A</span>
<div style="left:128.50px;top:280.00px;width:1.00px;height:20.00px;background:#3e3e3e;"></div>
<span class="t" style="left:94.63px;top:282.10px;font-size:17.6px;line-height:17.6px;color:#e4e4e4;">B</span>
<div style="left:187.00px;top:280.00px;width:1.00px;height:20.00px;background:#3e3e3e;"></div>
<span class="t" style="left:151.89px;top:282.10px;font-size:17.6px;line-height:17.6px;color:#e4e4e4;">C</span>
<div style="left:244.50px;top:280.00px;width:1.00px;height:20.00px;background:#3e3e3e;"></div>
<span class="t" style="left:209.89px;top:282.10px;font-size:17.6px;line-height:17.6px;color:#e4e4e4;">D</span>
<div style="left:302.50px;top:280.00px;width:1.00px;height:20.00px;background:#3e3e3e;"></div>
<span class="t" style="left:268.13px;top:282.10px;font-size:17.6px;line-height:17.6px;color:#e4e4e4;">E</span>
<div style="left:361.10px;top:280.00px;width:1.00px;height:20.00px;background:#3e3e3e;"></div>
<span class="t" style="left:326.92px;top:282.10px;font-size:17.6px;line-height:17.6px;color:#e4e4e4;">F</span>
<div style="left:428.50px;top:280.00px;width:1.00px;height:20.00px;background:#3e3e3e;"></div>
<span class="t" style="left:388.46px;top:282.10px;font-size:17.6px;line-height:17.6px;color:#e4e4e4;">G</span>
<div style="left:486.50px;top:280.00px;width:1.00px;height:20.00px;background:#3e3e3e;"></div>
<span class="t" style="left:451.64px;top:282.10px;font-size:17.6px;line-height:17.6px;color:#e4e4e4;">H</span>
<div style="left:544.50px;top:280.00px;width:1.00px;height:20.00px;background:#3e3e3e;"></div>
<span class="t" style="left:513.56px;top:282.10px;font-size:17.6px;line-height:17.6px;color:#e4e4e4;">I</span>
<div style="left:664.80px;top:280.00px;width:1.00px;height:20.00px;background:#3e3e3e;"></div>
<span class="t" style="left:600.75px;top:282.10px;font-size:17.6px;line-height:17.6px;color:#e4e4e4;">J</span>
<div style="left:785.00px;top:280.00px;width:1.00px;height:20.00px;background:#3e3e3e;"></div>
<span class="t" style="left:719.53px;top:282.10px;font-size:17.6px;line-height:17.6px;color:#e4e4e4;">K</span>
<div style="left:905.00px;top:280.00px;width:1.00px;height:20.00px;background:#3e3e3e;"></div>
<span class="t" style="left:840.61px;top:282.10px;font-size:17.6px;line-height:17.6px;color:#e4e4e4;">L</span>
<div style="left:1025.20px;top:280.00px;width:1.00px;height:20.00px;background:#3e3e3e;"></div>
<span class="t" style="left:958.27px;top:282.10px;font-size:17.6px;line-height:17.6px;color:#e4e4e4;">M</span>
<div style="left:1144.90px;top:280.00px;width:1.00px;height:20.00px;background:#3e3e3e;"></div>
<span class="t" style="left:1079.19px;top:282.10px;font-size:17.6px;line-height:17.6px;color:#e4e4e4;">N</span>
<div style="left:1176.00px;top:280.00px;width:1.00px;height:20.00px;background:#3e3e3e;"></div>
<span class="t" style="left:1154.11px;top:282.10px;font-size:17.6px;line-height:17.6px;color:#e4e4e4;">O</span>
<div style="left:1314.00px;top:280.00px;width:1.00px;height:20.00px;background:#3e3e3e;"></div>
<span class="t" style="left:1239.63px;top:282.10px;font-size:17.6px;line-height:17.6px;color:#e4e4e4;">P</span>
<div style="left:1452.00px;top:280.00px;width:1.00px;height:20.00px;background:#3e3e3e;"></div>
<span class="t" style="left:1376.66px;top:282.10px;font-size:17.6px;line-height:17.6px;color:#e4e4e4;">Q</span>
<div style="left:1590.00px;top:280.00px;width:1.00px;height:20.00px;background:#3e3e3e;"></div>
<span class="t" style="left:1515.14px;top:282.10px;font-size:17.6px;line-height:17.6px;color:#e4e4e4;">R</span>
<div style="left:1728.00px;top:280.00px;width:1.00px;height:20.00px;background:#3e3e3e;"></div>
<span class="t" style="left:1653.63px;top:282.10px;font-size:17.6px;line-height:17.6px;color:#e4e4e4;">S</span>
<div style="left:1866.00px;top:280.00px;width:1.00px;height:20.00px;background:#3e3e3e;"></div>
<span class="t" style="left:1792.12px;top:282.10px;font-size:17.6px;line-height:17.6px;color:#e4e4e4;">T</span>
<div style="left:2004.00px;top:280.00px;width:1.00px;height:20.00px;background:#3e3e3e;"></div>
<span class="t" style="left:1929.14px;top:282.10px;font-size:17.6px;line-height:17.6px;color:#e4e4e4;">U</span>
<div style="left:2142.00px;top:280.00px;width:1.00px;height:20.00px;background:#3e3e3e;"></div>
<span class="t" style="left:2067.63px;top:282.10px;font-size:17.6px;line-height:17.6px;color:#e4e4e4;">V</span>
<div style="left:2280.00px;top:280.00px;width:1.00px;height:20.00px;background:#3e3e3e;"></div>
<span class="t" style="left:2203.19px;top:282.10px;font-size:17.6px;line-height:17.6px;color:#e4e4e4;">W</span>
<div style="left:2418.00px;top:280.00px;width:1.00px;height:20.00px;background:#3e3e3e;"></div>
<span class="t" style="left:2343.63px;top:282.10px;font-size:17.6px;line-height:17.6px;color:#e4e4e4;">X</span>
<div style="left:2556.00px;top:280.00px;width:1.00px;height:20.00px;background:#3e3e3e;"></div>
<span class="t" style="left:2481.63px;top:282.10px;font-size:17.6px;line-height:17.6px;color:#e4e4e4;">Y</span>
<div style="left:2694.00px;top:280.00px;width:1.00px;height:20.00px;background:#3e3e3e;"></div>
<span class="t" style="left:2620.12px;top:282.10px;font-size:17.6px;line-height:17.6px;color:#e4e4e4;">Z</span>
<div style="left:2832.00px;top:280.00px;width:1.00px;height:20.00px;background:#3e3e3e;"></div>
<span class="t" style="left:2751.76px;top:282.10px;font-size:17.6px;line-height:17.6px;color:#e4e4e4;">AA</span>
<div style="left:2859.00px;top:280.00px;width:1.00px;height:20.00px;background:#3e3e3e;"></div>
<span class="t" style="left:2835.50px;top:282.10px;font-size:17.6px;line-height:17.6px;color:#dcdcdc;clip-path:inset(0 0 0 0);">AB</span>
<div style="left:11.00px;top:300.00px;width:36.00px;height:1370.00px;background:#0c0c0c;"></div>
<div style="left:11.00px;top:300.00px;width:35.40px;height:36.30px;background:#6a6a6a;"></div>
<div style="left:46.40px;top:300.00px;width:1.60px;height:37.00px;background:#1f7a48;"></div>
<div style="left:11.00px;top:336.50px;width:36.00px;height:1.00px;background:#3e3e3e;"></div>
<span class="t" style="left:24.41px;top:318.60px;font-size:17.6px;line-height:17.6px;color:#fff;">1</span>
<div style="left:11.00px;top:369.10px;width:36.00px;height:1.00px;background:#3e3e3e;"></div>
<span class="t" style="left:24.41px;top:351.20px;font-size:17.6px;line-height:17.6px;color:#e4e4e4;">2</span>
<div style="left:11.00px;top:401.90px;width:36.00px;height:1.00px;background:#3e3e3e;"></div>
<span class="t" style="left:24.41px;top:384.00px;font-size:17.6px;line-height:17.6px;color:#e4e4e4;">3</span>
<div style="left:11.00px;top:425.80px;width:36.00px;height:1.00px;background:#3e3e3e;"></div>
<span class="t" style="left:24.41px;top:407.90px;font-size:17.6px;line-height:17.6px;color:#e4e4e4;">4</span>
<div style="left:11.00px;top:461.00px;width:36.00px;height:1.00px;background:#3e3e3e;"></div>
<span class="t" style="left:24.41px;top:443.10px;font-size:17.6px;line-height:17.6px;color:#e4e4e4;">5</span>
<div style="left:11.00px;top:465.50px;width:36.00px;height:1.00px;background:#3e3e3e;"></div>
<div style="left:11.00px;top:488.50px;width:36.00px;height:1.00px;background:#3e3e3e;"></div>
<span class="t" style="left:24.41px;top:470.60px;font-size:17.6px;line-height:17.6px;color:#e4e4e4;">7</span>
<div style="left:11.00px;top:511.50px;width:36.00px;height:1.00px;background:#3e3e3e;"></div>
<span class="t" style="left:24.41px;top:493.60px;font-size:17.6px;line-height:17.6px;color:#e4e4e4;">8</span>
<div style="left:11.00px;top:534.80px;width:36.00px;height:1.00px;background:#3e3e3e;"></div>
<span class="t" style="left:24.41px;top:516.90px;font-size:17.6px;line-height:17.6px;color:#e4e4e4;">9</span>
<div style="left:11.00px;top:557.90px;width:36.00px;height:1.00px;background:#3e3e3e;"></div>
<span class="t" style="left:19.51px;top:540.00px;font-size:17.6px;line-height:17.6px;color:#e4e4e4;">10</span>
<div style="left:11.00px;top:580.90px;width:36.00px;height:1.00px;background:#3e3e3e;"></div>
<span class="t" style="left:20.16px;top:563.00px;font-size:17.6px;line-height:17.6px;color:#e4e4e4;">11</span>
<div style="left:11.00px;top:607.00px;width:36.00px;height:1.00px;background:#3e3e3e;"></div>
<span class="t" style="left:19.51px;top:589.10px;font-size:17.6px;line-height:17.6px;color:#e4e4e4;">12</span>
<div style="left:11.00px;top:630.00px;width:36.00px;height:1.00px;background:#3e3e3e;"></div>
<span class="t" style="left:19.51px;top:612.10px;font-size:17.6px;line-height:17.6px;color:#e4e4e4;">13</span>
<div style="left:11.00px;top:653.10px;width:36.00px;height:1.00px;background:#3e3e3e;"></div>
<span class="t" style="left:19.51px;top:635.20px;font-size:17.6px;line-height:17.6px;color:#e4e4e4;">14</span>
<div style="left:11.00px;top:676.20px;width:36.00px;height:1.00px;background:#3e3e3e;"></div>
<span class="t" style="left:19.51px;top:658.30px;font-size:17.6px;line-height:17.6px;color:#e4e4e4;">15</span>
<div style="left:11.00px;top:702.20px;width:36.00px;height:1.00px;background:#3e3e3e;"></div>
<span class="t" style="left:19.51px;top:684.30px;font-size:17.6px;line-height:17.6px;color:#e4e4e4;">16</span>
<div style="left:11.00px;top:724.80px;width:36.00px;height:1.00px;background:#3e3e3e;"></div>
<span class="t" style="left:19.51px;top:706.90px;font-size:17.6px;line-height:17.6px;color:#e4e4e4;">17</span>
<div style="left:11.00px;top:747.50px;width:36.00px;height:1.00px;background:#3e3e3e;"></div>
<span class="t" style="left:19.51px;top:729.60px;font-size:17.6px;line-height:17.6px;color:#e4e4e4;">18</span>
<div style="left:11.00px;top:770.90px;width:36.00px;height:1.00px;background:#3e3e3e;"></div>
<span class="t" style="left:19.51px;top:753.00px;font-size:17.6px;line-height:17.6px;color:#e4e4e4;">19</span>
<div style="left:11.00px;top:775.50px;width:36.00px;height:1.00px;background:#3e3e3e;"></div>
<div style="left:11.00px;top:799.00px;width:36.00px;height:1.00px;background:#3e3e3e;"></div>
<span class="t" style="left:19.51px;top:781.10px;font-size:17.6px;line-height:17.6px;color:#e4e4e4;">21</span>
<div style="left:11.00px;top:821.70px;width:36.00px;height:1.00px;background:#3e3e3e;"></div>
<span class="t" style="left:19.51px;top:803.80px;font-size:17.6px;line-height:17.6px;color:#e4e4e4;">22</span>
<div style="left:11.00px;top:827.00px;width:36.00px;height:1.00px;background:#3e3e3e;"></div>
<div style="left:11.00px;top:852.80px;width:36.00px;height:1.00px;background:#3e3e3e;"></div>
<span class="t" style="left:19.51px;top:834.90px;font-size:17.6px;line-height:17.6px;color:#e4e4e4;">24</span>
<div style="left:11.00px;top:875.50px;width:36.00px;height:1.00px;background:#3e3e3e;"></div>
<span class="t" style="left:19.51px;top:857.60px;font-size:17.6px;line-height:17.6px;color:#e4e4e4;">25</span>
<div style="left:11.00px;top:898.50px;width:36.00px;height:1.00px;background:#3e3e3e;"></div>
<span class="t" style="left:19.51px;top:880.60px;font-size:17.6px;line-height:17.6px;color:#e4e4e4;">26</span>
<div style="left:11.00px;top:921.80px;width:36.00px;height:1.00px;background:#3e3e3e;"></div>
<span class="t" style="left:19.51px;top:903.90px;font-size:17.6px;line-height:17.6px;color:#e4e4e4;">27</span>
<div style="left:11.00px;top:944.80px;width:36.00px;height:1.00px;background:#3e3e3e;"></div>
<span class="t" style="left:19.51px;top:926.90px;font-size:17.6px;line-height:17.6px;color:#e4e4e4;">28</span>
<div style="left:11.00px;top:967.50px;width:36.00px;height:1.00px;background:#3e3e3e;"></div>
<span class="t" style="left:19.51px;top:949.60px;font-size:17.6px;line-height:17.6px;color:#e4e4e4;">29</span>
<div style="left:11.00px;top:990.90px;width:36.00px;height:1.00px;background:#3e3e3e;"></div>
<span class="t" style="left:19.51px;top:973.00px;font-size:17.6px;line-height:17.6px;color:#e4e4e4;">30</span>
<div style="left:11.00px;top:1017.10px;width:36.00px;height:1.00px;background:#3e3e3e;"></div>
<span class="t" style="left:19.51px;top:999.20px;font-size:17.6px;line-height:17.6px;color:#e4e4e4;">31</span>
<div style="left:11.00px;top:1040.00px;width:36.00px;height:1.00px;background:#3e3e3e;"></div>
<span class="t" style="left:19.51px;top:1022.10px;font-size:17.6px;line-height:17.6px;color:#e4e4e4;">32</span>
<div style="left:11.00px;top:1063.90px;width:36.00px;height:1.00px;background:#3e3e3e;"></div>
<span class="t" style="left:19.51px;top:1046.00px;font-size:17.6px;line-height:17.6px;color:#e4e4e4;">33</span>
<div style="left:11.00px;top:1099.00px;width:36.00px;height:1.00px;background:#3e3e3e;"></div>
<span class="t" style="left:19.51px;top:1081.10px;font-size:17.6px;line-height:17.6px;color:#e4e4e4;">34</span>
<div style="left:11.00px;top:1121.50px;width:36.00px;height:1.00px;background:#3e3e3e;"></div>
<span class="t" style="left:19.51px;top:1103.60px;font-size:17.6px;line-height:17.6px;color:#e4e4e4;">35</span>
<div style="left:11.00px;top:1144.90px;width:36.00px;height:1.00px;background:#3e3e3e;"></div>
<span class="t" style="left:19.51px;top:1127.00px;font-size:17.6px;line-height:17.6px;color:#e4e4e4;">36</span>
<div style="left:11.00px;top:1167.50px;width:36.00px;height:1.00px;background:#3e3e3e;"></div>
<span class="t" style="left:19.51px;top:1149.60px;font-size:17.6px;line-height:17.6px;color:#e4e4e4;">37</span>
<div style="left:11.00px;top:1191.00px;width:36.00px;height:1.00px;background:#3e3e3e;"></div>
<span class="t" style="left:19.51px;top:1173.10px;font-size:17.6px;line-height:17.6px;color:#e4e4e4;">38</span>
<div style="left:11.00px;top:1213.50px;width:36.00px;height:1.00px;background:#3e3e3e;"></div>
<span class="t" style="left:19.51px;top:1195.60px;font-size:17.6px;line-height:17.6px;color:#e4e4e4;">39</span>
<div style="left:11.00px;top:1236.50px;width:36.00px;height:1.00px;background:#3e3e3e;"></div>
<span class="t" style="left:19.51px;top:1218.60px;font-size:17.6px;line-height:17.6px;color:#e4e4e4;">40</span>
<div style="left:11.00px;top:1259.50px;width:36.00px;height:1.00px;background:#3e3e3e;"></div>
<span class="t" style="left:19.51px;top:1241.60px;font-size:17.6px;line-height:17.6px;color:#e4e4e4;">41</span>
<div style="left:11.00px;top:1282.70px;width:36.00px;height:1.00px;background:#3e3e3e;"></div>
<span class="t" style="left:19.51px;top:1264.80px;font-size:17.6px;line-height:17.6px;color:#e4e4e4;">42</span>
<div style="left:11.00px;top:1305.70px;width:36.00px;height:1.00px;background:#3e3e3e;"></div>
<span class="t" style="left:19.51px;top:1287.80px;font-size:17.6px;line-height:17.6px;color:#e4e4e4;">43</span>
<div style="left:11.00px;top:1328.50px;width:36.00px;height:1.00px;background:#3e3e3e;"></div>
<span class="t" style="left:19.51px;top:1310.60px;font-size:17.6px;line-height:17.6px;color:#e4e4e4;">44</span>
<div style="left:11.00px;top:1351.80px;width:36.00px;height:1.00px;background:#3e3e3e;"></div>
<span class="t" style="left:19.51px;top:1333.90px;font-size:17.6px;line-height:17.6px;color:#e4e4e4;">45</span>
<div style="left:11.00px;top:1374.70px;width:36.00px;height:1.00px;background:#3e3e3e;"></div>
<span class="t" style="left:19.51px;top:1356.80px;font-size:17.6px;line-height:17.6px;color:#e4e4e4;">46</span>
<div style="left:11.00px;top:1397.60px;width:36.00px;height:1.00px;background:#3e3e3e;"></div>
<span class="t" style="left:19.51px;top:1379.70px;font-size:17.6px;line-height:17.6px;color:#e4e4e4;">47</span>
<div style="left:11.00px;top:1420.80px;width:36.00px;height:1.00px;background:#3e3e3e;"></div>
<span class="t" style="left:19.51px;top:1402.90px;font-size:17.6px;line-height:17.6px;color:#e4e4e4;">48</span>
<div style="left:11.00px;top:1443.80px;width:36.00px;height:1.00px;background:#3e3e3e;"></div>
<span class="t" style="left:19.51px;top:1425.90px;font-size:17.6px;line-height:17.6px;color:#e4e4e4;">49</span>
<div style="left:11.00px;top:1466.70px;width:36.00px;height:1.00px;background:#3e3e3e;"></div>
<span class="t" style="left:19.51px;top:1448.80px;font-size:17.6px;line-height:17.6px;color:#e4e4e4;">50</span>
<div style="left:11.00px;top:1489.90px;width:36.00px;height:1.00px;background:#3e3e3e;"></div>
<span class="t" style="left:19.51px;top:1472.00px;font-size:17.6px;line-height:17.6px;color:#e4e4e4;">51</span>
<div style="left:11.00px;top:1512.80px;width:36.00px;height:1.00px;background:#3e3e3e;"></div>
<span class="t" style="left:19.51px;top:1494.90px;font-size:17.6px;line-height:17.6px;color:#e4e4e4;">52</span>
<div style="left:11.00px;top:1536.20px;width:36.00px;height:1.00px;background:#3e3e3e;"></div>
<span class="t" style="left:19.51px;top:1518.30px;font-size:17.6px;line-height:17.6px;color:#e4e4e4;">53</span>
<div style="left:11.00px;top:1560.10px;width:36.00px;height:1.00px;background:#3e3e3e;"></div>
<span class="t" style="left:19.51px;top:1542.20px;font-size:17.6px;line-height:17.6px;color:#e4e4e4;">54</span>
<div style="left:11.00px;top:1594.70px;width:36.00px;height:1.00px;background:#3e3e3e;"></div>
<span class="t" style="left:19.51px;top:1576.80px;font-size:17.6px;line-height:17.6px;color:#e4e4e4;">55</span>
<div style="left:11.00px;top:1599.50px;width:36.00px;height:1.00px;background:#3e3e3e;"></div>
<div style="left:11.00px;top:1622.80px;width:36.00px;height:1.00px;background:#3e3e3e;"></div>
<span class="t" style="left:19.51px;top:1604.90px;font-size:17.6px;line-height:17.6px;color:#e4e4e4;">57</span>
<div style="left:11.00px;top:1627.90px;width:36.00px;height:1.00px;background:#3e3e3e;"></div>
<div style="left:11.00px;top:1650.90px;width:36.00px;height:1.00px;background:#3e3e3e;"></div>
<span class="t" style="left:19.51px;top:1633.00px;font-size:17.6px;line-height:17.6px;color:#e4e4e4;">59</span>
<div style="left:11.00px;top:1674.00px;width:36.00px;height:1.00px;background:#3e3e3e;"></div>
<span class="t" style="left:19.51px;top:1655.10px;font-size:17.6px;line-height:17.6px;color:#e4e4e4;">60</span>
<div style="left:11.00px;top:1670.00px;width:36.00px;height:2.00px;background:#0a0a0a;"></div>
<div style="left:2860.00px;top:278.00px;width:30.00px;height:1392.00px;background:#131313;"></div>
<svg style="position:absolute;left:2868px;top:283px;overflow:visible" width="16" height="12" viewBox="0 0 16 12"><path d="M1 11L8 2l7 9z" fill="#9a9a9a" stroke="#9a9a9a" stroke-width="1.5" stroke-linejoin="round"/></svg>
<div style="left:2870.00px;top:305.00px;width:12.00px;height:528.00px;background:#9b9b9b;border-radius:6px;"></div>
<svg style="position:absolute;left:2868px;top:1653px;overflow:visible" width="16" height="12" viewBox="0 0 16 12"><path d="M1 1L8 10l7-9z" fill="#9a9a9a" stroke="#9a9a9a" stroke-width="1.5" stroke-linejoin="round"/></svg>
<div style="left:11.00px;top:1670.00px;width:2879.00px;height:47.50px;background:#0b0b0b;"></div>
<svg style="position:absolute;left:45px;top:1685px;overflow:visible" width="12" height="16" viewBox="0 0 12 16"><polyline points="9,1 2,8 9,15" fill="none" stroke="#cfcfcf" stroke-width="1.6"/></svg>
<svg style="position:absolute;left:94px;top:1685px;overflow:visible" width="12" height="16" viewBox="0 0 12 16"><polyline points="2,1 9,8 2,15" fill="none" stroke="#cfcfcf" stroke-width="1.6"/></svg>
<span class="t" style="left:190.00px;top:1686.42px;font-size:19px;line-height:19px;color:#f0f0f0;letter-spacing:0.850px;">Contents</span>
<div style="left:292.00px;top:1683.00px;width:1.30px;height:23.00px;background:#4a4a4a;"></div>
<div style="left:433.50px;top:1683.00px;width:1.30px;height:23.00px;background:#4a4a4a;"></div>
<div style="left:552.00px;top:1683.00px;width:1.30px;height:23.00px;background:#4a4a4a;"></div>
<div style="left:644.60px;top:1683.00px;width:1.30px;height:23.00px;background:#4a4a4a;"></div>
<div style="left:733.40px;top:1683.00px;width:1.30px;height:23.00px;background:#4a4a4a;"></div>
<div style="left:835.60px;top:1683.00px;width:1.30px;height:23.00px;background:#4a4a4a;"></div>
<div style="left:935.00px;top:1683.00px;width:1.30px;height:23.00px;background:#4a4a4a;"></div>
<div style="left:1061.80px;top:1683.00px;width:1.30px;height:23.00px;background:#4a4a4a;"></div>
<div style="left:1164.40px;top:1683.00px;width:1.30px;height:23.00px;background:#4a4a4a;"></div>
<div style="left:1219.00px;top:1683.00px;width:1.30px;height:23.00px;background:#4a4a4a;"></div>
<div style="left:1280.00px;top:1683.00px;width:1.30px;height:23.00px;background:#4a4a4a;"></div>
<div style="left:1341.50px;top:1683.00px;width:1.30px;height:23.00px;background:#4a4a4a;"></div>
<div style="left:1469.40px;top:1683.00px;width:1.30px;height:23.00px;background:#4a4a4a;"></div>
<div style="left:1597.00px;top:1683.00px;width:1.30px;height:23.00px;background:#4a4a4a;"></div>
<div style="left:1724.80px;top:1683.00px;width:1.30px;height:23.00px;background:#4a4a4a;"></div>
<div style="left:1785.00px;top:1683.00px;width:1.30px;height:23.00px;background:#4a4a4a;"></div>
<div style="left:1870.60px;top:1683.00px;width:1.30px;height:23.00px;background:#4a4a4a;"></div>
<div style="left:1968.40px;top:1683.00px;width:1.30px;height:23.00px;background:#4a4a4a;"></div>
<div style="left:2045.50px;top:1683.00px;width:1.30px;height:23.00px;background:#4a4a4a;"></div>
<div style="left:298.80px;top:1676.40px;width:127.80px;height:34.60px;background:#fde86c;border-radius:7px;"></div>
<span class="t" style="left:312.65px;top:1686.42px;font-size:19px;line-height:19px;color:#1a1a1a;letter-spacing:0.894px;">Dashboard</span>
<div style="left:440.00px;top:1676.40px;width:105.30px;height:34.60px;background:#fde86c;border-radius:7px;"></div>
<span class="t" style="left:453.85px;top:1686.42px;font-size:19px;line-height:19px;color:#1a1a1a;letter-spacing:0.257px;">Revenue</span>
<div style="left:558.80px;top:1676.40px;width:78.50px;height:34.60px;background:#fde86c;border-radius:7px;"></div>
<span class="t" style="left:572.65px;top:1686.42px;font-size:19px;line-height:19px;color:#1a1a1a;letter-spacing:-1.717px;">COGS</span>
<div style="left:650.80px;top:1676.40px;width:76.00px;height:34.60px;background:#fde86c;border-radius:7px;"></div>
<span class="t" style="left:664.65px;top:1686.42px;font-size:19px;line-height:19px;color:#1a1a1a;letter-spacing:-1.499px;">OPEX</span>
<div style="left:740.00px;top:1676.40px;width:88.30px;height:34.60px;background:#fde86c;border-radius:7px;"></div>
<span class="t" style="left:753.85px;top:1686.42px;font-size:19px;line-height:19px;color:#1a1a1a;letter-spacing:0.421px;">Payroll</span>
<div style="left:842.00px;top:1676.40px;width:86.80px;height:34.60px;background:#fde86c;border-radius:7px;"></div>
<span class="t" style="left:855.85px;top:1686.42px;font-size:19px;line-height:19px;color:#1a1a1a;letter-spacing:-1.328px;">CAPEX</span>
<div style="left:941.60px;top:1676.40px;width:113.20px;height:34.60px;background:#fde86c;border-radius:7px;"></div>
<span class="t" style="left:955.45px;top:1686.42px;font-size:19px;line-height:19px;color:#1a1a1a;letter-spacing:0.746px;">CapTable</span>
<div style="left:1068.40px;top:1676.40px;width:89.40px;height:34.60px;background:#fde86c;border-radius:7px;"></div>
<span class="t" style="left:1082.25px;top:1686.42px;font-size:19px;line-height:19px;color:#1a1a1a;letter-spacing:0.426px;">Capital</span>
<div style="left:1170.60px;top:1676.40px;width:42.00px;height:34.60px;background:#4db3e8;border-radius:7px;"></div>
<span class="t" style="left:1182.62px;top:1686.42px;font-size:19px;line-height:19px;color:#1a1a1a;">IS</span>
<div style="left:1225.40px;top:1676.40px;width:48.60px;height:34.60px;background:#4db3e8;border-radius:7px;"></div>
<span class="t" style="left:1237.04px;top:1686.42px;font-size:19px;line-height:19px;color:#1a1a1a;">CF</span>
<div style="left:1286.80px;top:1676.40px;width:48.20px;height:34.60px;background:#4db3e8;border-radius:7px;"></div>
<span class="t" style="left:1298.23px;top:1686.42px;font-size:19px;line-height:19px;color:#1a1a1a;">BS</span>
<div style="left:1347.70px;top:1676.40px;width:115.10px;height:34.60px;background:#4db3e8;border-radius:7px;"></div>
<span class="t" style="left:1361.55px;top:1686.42px;font-size:19px;line-height:19px;color:#1a1a1a;letter-spacing:0.364px;">Scenarios</span>
<div style="left:1475.60px;top:1676.40px;width:115.00px;height:34.60px;background:#4db3e8;border-radius:7px;"></div>
<span class="t" style="left:1489.45px;top:1686.42px;font-size:19px;line-height:19px;color:#1a1a1a;letter-spacing:1.185px;">Valuation</span>
<div style="left:1603.4px;top:1671px;width:115px;height:40px;background:linear-gradient(#ffffff 55%,#d7eaf6);border-radius:0 0 7px 7px;"></div>
<span class="t" style="left:1616.00px;top:1682.34px;font-size:18.5px;line-height:18.5px;color:#1a1a1a;letter-spacing:1.642px;">Summary</span>
<div style="left:1616.00px;top:1704.50px;width:89.70px;height:2.50px;background:#1f7a48;"></div>
<div style="left:1731.00px;top:1676.40px;width:47.50px;height:34.60px;background:#4db3e8;border-radius:7px;"></div>
<span class="t" style="left:1743.00px;top:1686.42px;font-size:19px;line-height:19px;color:#1a1a1a;letter-spacing:-1.846px;">BE</span>
<div style="left:1792.00px;top:1676.40px;width:71.60px;height:34.60px;background:#4db3e8;border-radius:7px;"></div>
<span class="t" style="left:1805.00px;top:1686.42px;font-size:19px;line-height:19px;color:#1a1a1a;letter-spacing:-0.633px;">ROIC</span>
<div style="left:1877.00px;top:1676.40px;width:84.90px;height:34.60px;background:#4db3e8;border-radius:7px;"></div>
<span class="t" style="left:1890.25px;top:1686.42px;font-size:19px;line-height:19px;color:#1a1a1a;letter-spacing:0.488px;">Charts</span>
<div style="left:1974.60px;top:1676.40px;width:64.40px;height:34.60px;background:#4db3e8;border-radius:7px;"></div>
<span class="t" style="left:1988.55px;top:1686.42px;font-size:19px;line-height:19px;color:#1a1a1a;letter-spacing:-1.208px;">KPIs</span>
<div style="left:2051.7px;top:1676.4px;width:20.1px;height:34.6px;background:#4db3e8;border-radius:7px 0 0 7px;overflow:hidden"><span class="t" style="left:3px;top:1.5px;font-size:18px;line-height:34px;color:#1a1a1a">S</span></div>
<svg style="position:absolute;left:2082px;top:1688px;overflow:visible" width="26" height="8" viewBox="0 0 26 8"><circle cx="4" cy="4" r="2.6" fill="#e0e0e0"/><circle cx="12.5" cy="4" r="2.6" fill="#e0e0e0"/><circle cx="21" cy="4" r="2.6" fill="#e0e0e0"/></svg>
<svg style="position:absolute;left:2133px;top:1682px;overflow:visible" width="20" height="20" viewBox="0 0 20 20"><path d="M10 1v18M1 10h18" stroke="#e8e8e8" stroke-width="1.8"/></svg>
<svg style="position:absolute;left:2188px;top:1681px;overflow:visible" width="8" height="22" viewBox="0 0 8 22"><circle cx="4" cy="4" r="2.3" fill="#e0e0e0"/><circle cx="4" cy="11" r="2.3" fill="#e0e0e0"/><circle cx="4" cy="18" r="2.3" fill="#e0e0e0"/></svg>
<div style="left:2216.80px;top:1677.00px;width:645.20px;height:32.00px;background:#121212;border-radius:16px;"></div>
<svg style="position:absolute;left:2221px;top:1685px;overflow:visible" width="14" height="16" viewBox="0 0 14 16"><path d="M12 1L2 8l10 7z" fill="#9a9a9a" stroke="#9a9a9a" stroke-width="1.3" stroke-linejoin="round"/></svg>
<div style="left:2242.00px;top:1687.30px;width:534.60px;height:11.40px;background:#9b9b9b;border-radius:6px;"></div>
<svg style="position:absolute;left:2840px;top:1685px;overflow:visible" width="14" height="16" viewBox="0 0 14 16"><path d="M2 1l10 7-10 7z" fill="#9a9a9a" stroke="#9a9a9a" stroke-width="1.3" stroke-linejoin="round"/></svg>
<div style="left:11.00px;top:1717.50px;width:2879.00px;height:33.50px;background:#151515;"></div>
<div style="left:11.00px;top:1717.00px;width:2879.00px;height:1.30px;background:#343434;"></div>
<span class="t" style="left:27.40px;top:1727.83px;font-size:16.5px;line-height:16.5px;color:#e8e8e8;letter-spacing:-1.424px;">Ready</span>
<svg style="position:absolute;left:98px;top:1725px;overflow:visible" width="24" height="22" viewBox="0 0 24 22"><path d="M2 19V2h19v6" fill="none" stroke="#f4f4f4" stroke-width="2"/><path d="M2 19h6M1 6.5h20M5 10.5h5M5 14.5h4" stroke="#f4f4f4" stroke-width="2"/><circle cx="15.5" cy="15" r="5.6" fill="#151515" stroke="#f4f4f4" stroke-width="2"/><circle cx="15.5" cy="15" r="2.3" fill="#f4f4f4"/></svg>
<svg style="position:absolute;left:145px;top:1723px;overflow:visible" width="24" height="26" viewBox="0 0 24 26"><circle cx="9.8" cy="4" r="2.8" fill="none" stroke="#f4f4f4" stroke-width="1.8"/><path d="M1.5 7.5l5 2.5h6.5l5-2.5M7 10l-1 6-3 7.5M12.5 10l0.5 5" fill="none" stroke="#f4f4f4" stroke-width="2" stroke-linecap="round" stroke-linejoin="round"/><path d="M12 16.5l9 8.5M21 16.5l-9 8.5" stroke="#f4f4f4" stroke-width="1.7"/></svg>
<span class="t" style="left:172.80px;top:1727.83px;font-size:16.5px;line-height:16.5px;color:#f0f0f0;font-weight:700;letter-spacing:-0.367px;">Accessibility: Investigate</span>
<div style="left:2445.00px;top:1719.00px;width:60.00px;height:32.00px;background:#262626;"></div>
<svg style="position:absolute;left:2462px;top:1724px;overflow:visible" width="22" height="22" viewBox="0 0 22 22"><path d="M2 2h18v18H2zM2 8h18M2 14h18M8 2v18M14 2v18" fill="none" stroke="#e8e8e8" stroke-width="1.5"/></svg>
<svg style="position:absolute;left:2524px;top:1724px;overflow:visible" width="22" height="22" viewBox="0 0 22 22"><path d="M2 2h18v18H2z" fill="none" stroke="#e8e8e8" stroke-width="1.6"/><path d="M6 6h10v10H6zM8 9h6M8 12h6" fill="none" stroke="#e8e8e8" stroke-width="1.4"/></svg>
<svg style="position:absolute;left:2584px;top:1724px;overflow:visible" width="22" height="22" viewBox="0 0 22 22"><path d="M2 2h18v18H2zM2 12h9V2M6 2v6" fill="none" stroke="#e8e8e8" stroke-width="1.6"/></svg>
<div style="left:2633.00px;top:1734.00px;width:12.00px;height:1.50px;background:#cfcfcf;"></div>
<div style="left:2653.00px;top:1734.00px;width:148.00px;height:1.50px;background:#b8b8b8;"></div>
<div style="left:2727.00px;top:1726.00px;width:8.00px;height:17.00px;background:#b8b8b8;border-radius:2px;"></div>
<svg style="position:absolute;left:2808px;top:1727px;overflow:visible" width="16" height="16" viewBox="0 0 16 16"><path d="M8 1v14M1 8h14" stroke="#dcdcdc" stroke-width="1.5"/></svg>
<span class="t" style="left:2840.00px;top:1727.83px;font-size:16.5px;line-height:16.5px;color:#e8e8e8;letter-spacing:-0.825px;">115%</span>
<div style="left:0;top:0;width:2860px;height:1670px;overflow:hidden">
<div style="left:47.00px;top:300.00px;width:2813.00px;height:1370.00px;background:#fff;"></div>
<span class="t" style="left:77.40px;top:305.41px;font-size:30.7px;line-height:30.7px;color:#1f1f1f;font-weight:700;transform:scaleX(1.0910);transform-origin:left center;">Financial Statements Summary</span>
<span class="t" style="left:77.40px;top:342.91px;font-size:25.5px;line-height:25.5px;color:#000;font-weight:700;transform:scaleX(1.1297);transform-origin:left center;">ABC Company Inc.</span>
<span class="t" style="left:75.50px;top:378.11px;font-size:17px;line-height:17px;color:#3a78d8;font-weight:700;transform:scaleX(1.0941);transform-origin:left center;text-decoration:underline;text-underline-offset:2px;">Go to Table of Contents</span>
<span class="t" style="left:1489.00px;top:375.55px;font-size:21.8px;line-height:21.8px;color:#1f1f1f;font-weight:700;transform:scaleX(1.0043);transform-origin:left center;">Select reporting year</span>
<div style="left:1728.00px;top:369.30px;width:276.50px;height:33.20px;background:#fff462;border:1px solid #cfcfcf;box-sizing:border-box;"></div>
<span class="t" style="left:1842.75px;top:375.55px;font-size:21.8px;line-height:21.8px;color:#1f1f1f;font-weight:700;transform:scaleX(1.0310);transform-origin:center center;">2026</span>
<div style="left:47.00px;top:426.00px;width:2813.00px;height:1.00px;background:#a0a0a0;"></div>
<div style="left:71.00px;top:427.00px;width:1075.00px;height:34.50px;background:#4b50cf;"></div>
<div style="left:1176.00px;top:427.00px;width:1657.00px;height:34.50px;background:#4b50cf;"></div>
<span class="t" style="left:256.28px;top:430.90px;font-size:28px;line-height:28px;color:#fff;font-weight:700;transform:scaleX(1.1015);transform-origin:center center;">Income Statement ($'000) - 5 years to December 2030</span>
<span class="t" style="left:1792.74px;top:430.90px;font-size:28px;line-height:28px;color:#fff;font-weight:700;transform:scaleX(1.1281);transform-origin:center center;">Income Statement ($'000) - 2026</span>
<div style="left:72.00px;top:467.00px;width:473.00px;height:22.00px;background:#6c71e5;"></div>
<span class="t" style="left:83.40px;top:470.59px;font-size:18.2px;line-height:18.2px;color:#fff;font-weight:700;transform:scaleX(1.0249);transform-origin:left center;">Year Ending</span>
<div style="left:545.60px;top:467.00px;width:119.70px;height:22.00px;background:#6c71e5;"></div>
<span class="t" style="left:584.91px;top:470.59px;font-size:18.2px;line-height:18.2px;color:#fff;font-weight:700;transform:scaleX(1.0571);transform-origin:center center;">2026</span>
<div style="left:665.90px;top:467.00px;width:119.60px;height:22.00px;background:#6c71e5;"></div>
<span class="t" style="left:705.16px;top:470.59px;font-size:18.2px;line-height:18.2px;color:#fff;font-weight:700;transform:scaleX(1.0571);transform-origin:center center;">2027</span>
<div style="left:786.10px;top:467.00px;width:119.40px;height:22.00px;background:#6c71e5;"></div>
<span class="t" style="left:825.26px;top:470.59px;font-size:18.2px;line-height:18.2px;color:#fff;font-weight:700;transform:scaleX(1.0571);transform-origin:center center;">2028</span>
<div style="left:906.10px;top:467.00px;width:119.60px;height:22.00px;background:#6c71e5;"></div>
<span class="t" style="left:945.36px;top:470.59px;font-size:18.2px;line-height:18.2px;color:#fff;font-weight:700;transform:scaleX(1.0571);transform-origin:center center;">2029</span>
<div style="left:1026.30px;top:467.00px;width:119.10px;height:22.00px;background:#6c71e5;"></div>
<span class="t" style="left:1065.31px;top:470.59px;font-size:18.2px;line-height:18.2px;color:#fff;font-weight:700;transform:scaleX(1.0571);transform-origin:center center;">2030</span>
<div style="left:1177.10px;top:467.00px;width:137.40px;height:22.00px;background:#6c71e5;"></div>
<span class="t" style="left:1229.82px;top:470.59px;font-size:18.2px;line-height:18.2px;color:#fff;font-weight:700;transform:scaleX(1.0600);transform-origin:center center;">Jan</span>
<div style="left:1315.10px;top:467.00px;width:137.40px;height:22.00px;background:#6c71e5;"></div>
<span class="t" style="left:1367.32px;top:470.59px;font-size:18.2px;line-height:18.2px;color:#fff;font-weight:700;transform:scaleX(1.0600);transform-origin:center center;">Feb</span>
<div style="left:1453.10px;top:467.00px;width:137.40px;height:22.00px;background:#6c71e5;"></div>
<span class="t" style="left:1505.32px;top:470.59px;font-size:18.2px;line-height:18.2px;color:#fff;font-weight:700;transform:scaleX(1.0600);transform-origin:center center;">Mar</span>
<div style="left:1591.10px;top:467.00px;width:137.40px;height:22.00px;background:#6c71e5;"></div>
<span class="t" style="left:1643.83px;top:470.59px;font-size:18.2px;line-height:18.2px;color:#fff;font-weight:700;transform:scaleX(1.0600);transform-origin:center center;">Apr</span>
<div style="left:1729.10px;top:467.00px;width:137.40px;height:22.00px;background:#6c71e5;"></div>
<span class="t" style="left:1779.80px;top:470.59px;font-size:18.2px;line-height:18.2px;color:#fff;font-weight:700;transform:scaleX(1.0600);transform-origin:center center;">May</span>
<div style="left:1867.10px;top:467.00px;width:137.40px;height:22.00px;background:#6c71e5;"></div>
<span class="t" style="left:1919.32px;top:470.59px;font-size:18.2px;line-height:18.2px;color:#fff;font-weight:700;transform:scaleX(1.0600);transform-origin:center center;">Jun</span>
<div style="left:2005.10px;top:467.00px;width:137.40px;height:22.00px;background:#6c71e5;"></div>
<span class="t" style="left:2060.35px;top:470.59px;font-size:18.2px;line-height:18.2px;color:#fff;font-weight:700;transform:scaleX(1.0600);transform-origin:center center;">Jul</span>
<div style="left:2143.10px;top:467.00px;width:137.40px;height:22.00px;background:#6c71e5;"></div>
<span class="t" style="left:2193.81px;top:470.59px;font-size:18.2px;line-height:18.2px;color:#fff;font-weight:700;transform:scaleX(1.0600);transform-origin:center center;">Aug</span>
<div style="left:2281.10px;top:467.00px;width:137.40px;height:22.00px;background:#6c71e5;"></div>
<span class="t" style="left:2332.81px;top:470.59px;font-size:18.2px;line-height:18.2px;color:#fff;font-weight:700;transform:scaleX(1.0600);transform-origin:center center;">Sep</span>
<div style="left:2419.10px;top:467.00px;width:137.40px;height:22.00px;background:#6c71e5;"></div>
<span class="t" style="left:2472.33px;top:470.59px;font-size:18.2px;line-height:18.2px;color:#fff;font-weight:700;transform:scaleX(1.0600);transform-origin:center center;">Oct</span>
<div style="left:2557.10px;top:467.00px;width:137.40px;height:22.00px;background:#6c71e5;"></div>
<span class="t" style="left:2608.31px;top:470.59px;font-size:18.2px;line-height:18.2px;color:#fff;font-weight:700;transform:scaleX(1.0600);transform-origin:center center;">Nov</span>
<div style="left:2695.10px;top:467.00px;width:137.40px;height:22.00px;background:#6c71e5;"></div>
<span class="t" style="left:2746.81px;top:470.59px;font-size:18.2px;line-height:18.2px;color:#fff;font-weight:700;transform:scaleX(1.0600);transform-origin:center center;">Dec</span>
<span class="t" style="left:74.70px;top:493.63px;font-size:17.8px;line-height:17.8px;color:#1a1a1a;">Revenue</span>
<span class="t" style="left:609.26px;top:493.46px;font-size:18px;line-height:18px;color:#1a1a1a;">7,550</span>
<span class="t" style="left:719.45px;top:493.46px;font-size:18px;line-height:18px;color:#1a1a1a;">15,480</span>
<span class="t" style="left:839.45px;top:493.46px;font-size:18px;line-height:18px;color:#1a1a1a;">28,175</span>
<span class="t" style="left:959.65px;top:493.46px;font-size:18px;line-height:18px;color:#1a1a1a;">37,620</span>
<span class="t" style="left:1079.35px;top:493.46px;font-size:18px;line-height:18px;color:#1a1a1a;">42,750</span>
<span class="t" style="left:1273.47px;top:493.46px;font-size:18px;line-height:18px;color:#1a1a1a;">629</span>
<span class="t" style="left:1411.47px;top:493.46px;font-size:18px;line-height:18px;color:#1a1a1a;">629</span>
<span class="t" style="left:1549.47px;top:493.46px;font-size:18px;line-height:18px;color:#1a1a1a;">629</span>
<span class="t" style="left:1687.47px;top:493.46px;font-size:18px;line-height:18px;color:#1a1a1a;">629</span>
<span class="t" style="left:1825.47px;top:493.46px;font-size:18px;line-height:18px;color:#1a1a1a;">629</span>
<span class="t" style="left:1963.47px;top:493.46px;font-size:18px;line-height:18px;color:#1a1a1a;">629</span>
<span class="t" style="left:2101.47px;top:493.46px;font-size:18px;line-height:18px;color:#1a1a1a;">629</span>
<span class="t" style="left:2239.47px;top:493.46px;font-size:18px;line-height:18px;color:#1a1a1a;">629</span>
<span class="t" style="left:2377.47px;top:493.46px;font-size:18px;line-height:18px;color:#1a1a1a;">629</span>
<span class="t" style="left:2515.47px;top:493.46px;font-size:18px;line-height:18px;color:#1a1a1a;">629</span>
<span class="t" style="left:2653.47px;top:493.46px;font-size:18px;line-height:18px;color:#1a1a1a;">629</span>
<span class="t" style="left:2791.47px;top:493.46px;font-size:18px;line-height:18px;color:#1a1a1a;">629</span>
<span class="t" style="left:93.50px;top:516.93px;font-size:17.8px;line-height:17.8px;color:#1a1a1a;font-style:italic;transform:scaleX(1.0500);transform-origin:left center;">Growth %</span>
<span class="t" style="left:728.46px;top:516.76px;font-size:18px;line-height:18px;color:#1a1a1a;font-style:italic;width:46.04px;transform:scaleX(1.1000);transform-origin:right center;">105%</span>
<span class="t" style="left:858.47px;top:516.76px;font-size:18px;line-height:18px;color:#1a1a1a;font-style:italic;width:36.03px;transform:scaleX(1.1000);transform-origin:right center;">82%</span>
<span class="t" style="left:978.67px;top:516.76px;font-size:18px;line-height:18px;color:#1a1a1a;font-style:italic;width:36.03px;transform:scaleX(1.1000);transform-origin:right center;">34%</span>
<span class="t" style="left:1098.37px;top:516.76px;font-size:18px;line-height:18px;color:#1a1a1a;font-style:italic;width:36.03px;transform:scaleX(1.1000);transform-origin:right center;">14%</span>
<span class="t" style="left:1295.51px;top:516.76px;font-size:18px;line-height:18px;color:#1a1a1a;font-style:italic;">-</span>
<span class="t" style="left:1433.51px;top:516.76px;font-size:18px;line-height:18px;color:#1a1a1a;font-style:italic;">-</span>
<span class="t" style="left:1571.51px;top:516.76px;font-size:18px;line-height:18px;color:#1a1a1a;font-style:italic;">-</span>
<span class="t" style="left:1709.51px;top:516.76px;font-size:18px;line-height:18px;color:#1a1a1a;font-style:italic;">-</span>
<span class="t" style="left:1847.51px;top:516.76px;font-size:18px;line-height:18px;color:#1a1a1a;font-style:italic;">-</span>
<span class="t" style="left:1985.51px;top:516.76px;font-size:18px;line-height:18px;color:#1a1a1a;font-style:italic;">-</span>
<span class="t" style="left:2123.51px;top:516.76px;font-size:18px;line-height:18px;color:#1a1a1a;font-style:italic;">-</span>
<span class="t" style="left:2261.51px;top:516.76px;font-size:18px;line-height:18px;color:#1a1a1a;font-style:italic;">-</span>
<span class="t" style="left:2399.51px;top:516.76px;font-size:18px;line-height:18px;color:#1a1a1a;font-style:italic;">-</span>
<span class="t" style="left:2537.51px;top:516.76px;font-size:18px;line-height:18px;color:#1a1a1a;font-style:italic;">-</span>
<span class="t" style="left:2675.51px;top:516.76px;font-size:18px;line-height:18px;color:#1a1a1a;font-style:italic;">-</span>
<span class="t" style="left:2790.50px;top:516.76px;font-size:18px;line-height:18px;color:#1a1a1a;font-style:italic;width:38.00px;transform:scaleX(1.1000);transform-origin:right center;">(0%)</span>
<span class="t" style="left:74.70px;top:540.03px;font-size:17.8px;line-height:17.8px;color:#1a1a1a;">COGS</span>
<span class="t" style="left:619.28px;top:539.86px;font-size:18px;line-height:18px;color:#1a1a1a;">(893)</span>
<span class="t" style="left:724.47px;top:539.86px;font-size:18px;line-height:18px;color:#1a1a1a;">(1,795)</span>
<span class="t" style="left:844.47px;top:539.86px;font-size:18px;line-height:18px;color:#1a1a1a;">(3,170)</span>
<span class="t" style="left:966.00px;top:539.86px;font-size:18px;line-height:18px;color:#1a1a1a;">(4,112)</span>
<span class="t" style="left:1084.37px;top:539.86px;font-size:18px;line-height:18px;color:#1a1a1a;">(4,593)</span>
<span class="t" style="left:1278.49px;top:539.86px;font-size:18px;line-height:18px;color:#1a1a1a;">(74)</span>
<span class="t" style="left:1416.49px;top:539.86px;font-size:18px;line-height:18px;color:#1a1a1a;">(74)</span>
<span class="t" style="left:1554.49px;top:539.86px;font-size:18px;line-height:18px;color:#1a1a1a;">(74)</span>
<span class="t" style="left:1692.49px;top:539.86px;font-size:18px;line-height:18px;color:#1a1a1a;">(74)</span>
<span class="t" style="left:1830.49px;top:539.86px;font-size:18px;line-height:18px;color:#1a1a1a;">(74)</span>
<span class="t" style="left:1968.49px;top:539.86px;font-size:18px;line-height:18px;color:#1a1a1a;">(74)</span>
<span class="t" style="left:2106.49px;top:539.86px;font-size:18px;line-height:18px;color:#1a1a1a;">(74)</span>
<span class="t" style="left:2244.49px;top:539.86px;font-size:18px;line-height:18px;color:#1a1a1a;">(74)</span>
<span class="t" style="left:2382.49px;top:539.86px;font-size:18px;line-height:18px;color:#1a1a1a;">(74)</span>
<span class="t" style="left:2520.49px;top:539.86px;font-size:18px;line-height:18px;color:#1a1a1a;">(74)</span>
<span class="t" style="left:2658.49px;top:539.86px;font-size:18px;line-height:18px;color:#1a1a1a;">(74)</span>
<span class="t" style="left:2796.49px;top:539.86px;font-size:18px;line-height:18px;color:#1a1a1a;">(74)</span>
<span class="t" style="left:93.50px;top:563.03px;font-size:17.8px;line-height:17.8px;color:#1a1a1a;font-style:italic;transform:scaleX(1.0500);transform-origin:left center;">% of Revenue</span>
<span class="t" style="left:613.28px;top:562.86px;font-size:18px;line-height:18px;color:#1a1a1a;font-style:italic;width:48.02px;transform:scaleX(1.1000);transform-origin:right center;">(12%)</span>
<span class="t" style="left:733.49px;top:562.86px;font-size:18px;line-height:18px;color:#1a1a1a;font-style:italic;width:48.02px;transform:scaleX(1.1000);transform-origin:right center;">(12%)</span>
<span class="t" style="left:854.82px;top:562.86px;font-size:18px;line-height:18px;color:#1a1a1a;font-style:italic;width:46.68px;transform:scaleX(1.1000);transform-origin:right center;">(11%)</span>
<span class="t" style="left:975.02px;top:562.86px;font-size:18px;line-height:18px;color:#1a1a1a;font-style:italic;width:46.68px;transform:scaleX(1.1000);transform-origin:right center;">(11%)</span>
<span class="t" style="left:1094.72px;top:562.86px;font-size:18px;line-height:18px;color:#1a1a1a;font-style:italic;width:46.68px;transform:scaleX(1.1000);transform-origin:right center;">(11%)</span>
<span class="t" style="left:1262.48px;top:562.86px;font-size:18px;line-height:18px;color:#1a1a1a;font-style:italic;width:48.02px;transform:scaleX(1.1000);transform-origin:right center;">(12%)</span>
<span class="t" style="left:1400.48px;top:562.86px;font-size:18px;line-height:18px;color:#1a1a1a;font-style:italic;width:48.02px;transform:scaleX(1.1000);transform-origin:right center;">(12%)</span>
<span class="t" style="left:1538.48px;top:562.86px;font-size:18px;line-height:18px;color:#1a1a1a;font-style:italic;width:48.02px;transform:scaleX(1.1000);transform-origin:right center;">(12%)</span>
<span class="t" style="left:1676.48px;top:562.86px;font-size:18px;line-height:18px;color:#1a1a1a;font-style:italic;width:48.02px;transform:scaleX(1.1000);transform-origin:right center;">(12%)</span>
<span class="t" style="left:1814.48px;top:562.86px;font-size:18px;line-height:18px;color:#1a1a1a;font-style:italic;width:48.02px;transform:scaleX(1.1000);transform-origin:right center;">(12%)</span>
<span class="t" style="left:1952.48px;top:562.86px;font-size:18px;line-height:18px;color:#1a1a1a;font-style:italic;width:48.02px;transform:scaleX(1.1000);transform-origin:right center;">(12%)</span>
<span class="t" style="left:2090.49px;top:562.86px;font-size:18px;line-height:18px;color:#1a1a1a;font-style:italic;width:48.02px;transform:scaleX(1.1000);transform-origin:right center;">(12%)</span>
<span class="t" style="left:2228.49px;top:562.86px;font-size:18px;line-height:18px;color:#1a1a1a;font-style:italic;width:48.02px;transform:scaleX(1.1000);transform-origin:right center;">(12%)</span>
<span class="t" style="left:2366.49px;top:562.86px;font-size:18px;line-height:18px;color:#1a1a1a;font-style:italic;width:48.02px;transform:scaleX(1.1000);transform-origin:right center;">(12%)</span>
<span class="t" style="left:2504.49px;top:562.86px;font-size:18px;line-height:18px;color:#1a1a1a;font-style:italic;width:48.02px;transform:scaleX(1.1000);transform-origin:right center;">(12%)</span>
<span class="t" style="left:2642.49px;top:562.86px;font-size:18px;line-height:18px;color:#1a1a1a;font-style:italic;width:48.02px;transform:scaleX(1.1000);transform-origin:right center;">(12%)</span>
<span class="t" style="left:2780.49px;top:562.86px;font-size:18px;line-height:18px;color:#1a1a1a;font-style:italic;width:48.02px;transform:scaleX(1.1000);transform-origin:right center;">(12%)</span>
<div style="left:71.00px;top:581.40px;width:1075.00px;height:26.10px;background:#4db2e6;"></div>
<div style="left:1176.00px;top:581.40px;width:1657.00px;height:26.10px;background:#4db2e6;"></div>
<span class="t" style="left:86.80px;top:585.18px;font-size:22px;line-height:22px;color:#fff;font-weight:700;transform:scaleX(0.9682);transform-origin:left center;">Gross Margin</span>
<span class="t" style="left:607.00px;top:586.80px;font-size:18.9px;line-height:18.9px;color:#fff;font-weight:700;width:47.30px;transform:scaleX(1.0466);transform-origin:right center;">6,657</span>
<span class="t" style="left:716.69px;top:586.80px;font-size:18.9px;line-height:18.9px;color:#fff;font-weight:700;width:57.81px;transform:scaleX(1.0466);transform-origin:right center;">13,685</span>
<span class="t" style="left:836.69px;top:586.80px;font-size:18.9px;line-height:18.9px;color:#fff;font-weight:700;width:57.81px;transform:scaleX(1.0466);transform-origin:right center;">25,005</span>
<span class="t" style="left:956.89px;top:586.80px;font-size:18.9px;line-height:18.9px;color:#fff;font-weight:700;width:57.81px;transform:scaleX(1.0466);transform-origin:right center;">33,508</span>
<span class="t" style="left:1076.59px;top:586.80px;font-size:18.9px;line-height:18.9px;color:#fff;font-weight:700;width:57.81px;transform:scaleX(1.0466);transform-origin:right center;">38,157</span>
<span class="t" style="left:1271.97px;top:586.80px;font-size:18.9px;line-height:18.9px;color:#fff;font-weight:700;width:31.53px;transform:scaleX(1.0466);transform-origin:right center;">555</span>
<span class="t" style="left:1409.97px;top:586.80px;font-size:18.9px;line-height:18.9px;color:#fff;font-weight:700;width:31.53px;transform:scaleX(1.0466);transform-origin:right center;">555</span>
<span class="t" style="left:1547.97px;top:586.80px;font-size:18.9px;line-height:18.9px;color:#fff;font-weight:700;width:31.53px;transform:scaleX(1.0466);transform-origin:right center;">555</span>
<span class="t" style="left:1685.97px;top:586.80px;font-size:18.9px;line-height:18.9px;color:#fff;font-weight:700;width:31.53px;transform:scaleX(1.0466);transform-origin:right center;">555</span>
<span class="t" style="left:1823.97px;top:586.80px;font-size:18.9px;line-height:18.9px;color:#fff;font-weight:700;width:31.53px;transform:scaleX(1.0466);transform-origin:right center;">555</span>
<span class="t" style="left:1961.97px;top:586.80px;font-size:18.9px;line-height:18.9px;color:#fff;font-weight:700;width:31.53px;transform:scaleX(1.0466);transform-origin:right center;">555</span>
<span class="t" style="left:2099.97px;top:586.80px;font-size:18.9px;line-height:18.9px;color:#fff;font-weight:700;width:31.53px;transform:scaleX(1.0466);transform-origin:right center;">555</span>
<span class="t" style="left:2237.97px;top:586.80px;font-size:18.9px;line-height:18.9px;color:#fff;font-weight:700;width:31.53px;transform:scaleX(1.0466);transform-origin:right center;">555</span>
<span class="t" style="left:2375.97px;top:586.80px;font-size:18.9px;line-height:18.9px;color:#fff;font-weight:700;width:31.53px;transform:scaleX(1.0466);transform-origin:right center;">555</span>
<span class="t" style="left:2513.97px;top:586.80px;font-size:18.9px;line-height:18.9px;color:#fff;font-weight:700;width:31.53px;transform:scaleX(1.0466);transform-origin:right center;">555</span>
<span class="t" style="left:2651.97px;top:586.80px;font-size:18.9px;line-height:18.9px;color:#fff;font-weight:700;width:31.53px;transform:scaleX(1.0466);transform-origin:right center;">555</span>
<span class="t" style="left:2789.97px;top:586.80px;font-size:18.9px;line-height:18.9px;color:#fff;font-weight:700;width:31.53px;transform:scaleX(1.0466);transform-origin:right center;">555</span>
<span class="t" style="left:93.50px;top:612.13px;font-size:17.8px;line-height:17.8px;color:#1a1a1a;font-style:italic;transform:scaleX(1.0500);transform-origin:left center;">Gross Margin %</span>
<span class="t" style="left:618.27px;top:611.96px;font-size:18px;line-height:18px;color:#1a1a1a;font-style:italic;width:36.03px;transform:scaleX(1.1000);transform-origin:right center;">88%</span>
<span class="t" style="left:738.47px;top:611.96px;font-size:18px;line-height:18px;color:#1a1a1a;font-style:italic;width:36.03px;transform:scaleX(1.1000);transform-origin:right center;">88%</span>
<span class="t" style="left:858.47px;top:611.96px;font-size:18px;line-height:18px;color:#1a1a1a;font-style:italic;width:36.03px;transform:scaleX(1.1000);transform-origin:right center;">89%</span>
<span class="t" style="left:978.67px;top:611.96px;font-size:18px;line-height:18px;color:#1a1a1a;font-style:italic;width:36.03px;transform:scaleX(1.1000);transform-origin:right center;">89%</span>
<span class="t" style="left:1098.37px;top:611.96px;font-size:18px;line-height:18px;color:#1a1a1a;font-style:italic;width:36.03px;transform:scaleX(1.1000);transform-origin:right center;">89%</span>
<span class="t" style="left:1267.47px;top:611.96px;font-size:18px;line-height:18px;color:#1a1a1a;font-style:italic;width:36.03px;transform:scaleX(1.1000);transform-origin:right center;">88%</span>
<span class="t" style="left:1405.47px;top:611.96px;font-size:18px;line-height:18px;color:#1a1a1a;font-style:italic;width:36.03px;transform:scaleX(1.1000);transform-origin:right center;">88%</span>
<span class="t" style="left:1543.47px;top:611.96px;font-size:18px;line-height:18px;color:#1a1a1a;font-style:italic;width:36.03px;transform:scaleX(1.1000);transform-origin:right center;">88%</span>
<span class="t" style="left:1681.47px;top:611.96px;font-size:18px;line-height:18px;color:#1a1a1a;font-style:italic;width:36.03px;transform:scaleX(1.1000);transform-origin:right center;">88%</span>
<span class="t" style="left:1819.47px;top:611.96px;font-size:18px;line-height:18px;color:#1a1a1a;font-style:italic;width:36.03px;transform:scaleX(1.1000);transform-origin:right center;">88%</span>
<span class="t" style="left:1957.47px;top:611.96px;font-size:18px;line-height:18px;color:#1a1a1a;font-style:italic;width:36.03px;transform:scaleX(1.1000);transform-origin:right center;">88%</span>
<span class="t" style="left:2095.47px;top:611.96px;font-size:18px;line-height:18px;color:#1a1a1a;font-style:italic;width:36.03px;transform:scaleX(1.1000);transform-origin:right center;">88%</span>
<span class="t" style="left:2233.47px;top:611.96px;font-size:18px;line-height:18px;color:#1a1a1a;font-style:italic;width:36.03px;transform:scaleX(1.1000);transform-origin:right center;">88%</span>
<span class="t" style="left:2371.47px;top:611.96px;font-size:18px;line-height:18px;color:#1a1a1a;font-style:italic;width:36.03px;transform:scaleX(1.1000);transform-origin:right center;">88%</span>
<span class="t" style="left:2509.47px;top:611.96px;font-size:18px;line-height:18px;color:#1a1a1a;font-style:italic;width:36.03px;transform:scaleX(1.1000);transform-origin:right center;">88%</span>
<span class="t" style="left:2647.47px;top:611.96px;font-size:18px;line-height:18px;color:#1a1a1a;font-style:italic;width:36.03px;transform:scaleX(1.1000);transform-origin:right center;">88%</span>
<span class="t" style="left:2785.47px;top:611.96px;font-size:18px;line-height:18px;color:#1a1a1a;font-style:italic;width:36.03px;transform:scaleX(1.1000);transform-origin:right center;">88%</span>
<span class="t" style="left:74.70px;top:635.23px;font-size:17.8px;line-height:17.8px;color:#1a1a1a;">Variable Expenses</span>
<span class="t" style="left:619.28px;top:635.06px;font-size:18px;line-height:18px;color:#1a1a1a;">(604)</span>
<span class="t" style="left:724.47px;top:635.06px;font-size:18px;line-height:18px;color:#1a1a1a;">(1,130)</span>
<span class="t" style="left:844.47px;top:635.06px;font-size:18px;line-height:18px;color:#1a1a1a;">(1,831)</span>
<span class="t" style="left:964.67px;top:635.06px;font-size:18px;line-height:18px;color:#1a1a1a;">(2,144)</span>
<span class="t" style="left:1084.37px;top:635.06px;font-size:18px;line-height:18px;color:#1a1a1a;">(2,138)</span>
<span class="t" style="left:1278.49px;top:635.06px;font-size:18px;line-height:18px;color:#1a1a1a;">(50)</span>
<span class="t" style="left:1416.49px;top:635.06px;font-size:18px;line-height:18px;color:#1a1a1a;">(50)</span>
<span class="t" style="left:1554.49px;top:635.06px;font-size:18px;line-height:18px;color:#1a1a1a;">(50)</span>
<span class="t" style="left:1692.49px;top:635.06px;font-size:18px;line-height:18px;color:#1a1a1a;">(50)</span>
<span class="t" style="left:1830.49px;top:635.06px;font-size:18px;line-height:18px;color:#1a1a1a;">(50)</span>
<span class="t" style="left:1968.49px;top:635.06px;font-size:18px;line-height:18px;color:#1a1a1a;">(50)</span>
<span class="t" style="left:2106.49px;top:635.06px;font-size:18px;line-height:18px;color:#1a1a1a;">(50)</span>
<span class="t" style="left:2244.49px;top:635.06px;font-size:18px;line-height:18px;color:#1a1a1a;">(50)</span>
<span class="t" style="left:2382.49px;top:635.06px;font-size:18px;line-height:18px;color:#1a1a1a;">(50)</span>
<span class="t" style="left:2520.49px;top:635.06px;font-size:18px;line-height:18px;color:#1a1a1a;">(50)</span>
<span class="t" style="left:2658.49px;top:635.06px;font-size:18px;line-height:18px;color:#1a1a1a;">(50)</span>
<span class="t" style="left:2796.49px;top:635.06px;font-size:18px;line-height:18px;color:#1a1a1a;">(50)</span>
<span class="t" style="left:93.50px;top:658.33px;font-size:17.8px;line-height:17.8px;color:#1a1a1a;font-style:italic;transform:scaleX(1.0500);transform-origin:left center;">% of Revenue</span>
<span class="t" style="left:623.30px;top:658.16px;font-size:18px;line-height:18px;color:#1a1a1a;font-style:italic;width:38.00px;transform:scaleX(1.1000);transform-origin:right center;">(8%)</span>
<span class="t" style="left:743.50px;top:658.16px;font-size:18px;line-height:18px;color:#1a1a1a;font-style:italic;width:38.00px;transform:scaleX(1.1000);transform-origin:right center;">(7%)</span>
<span class="t" style="left:863.50px;top:658.16px;font-size:18px;line-height:18px;color:#1a1a1a;font-style:italic;width:38.00px;transform:scaleX(1.1000);transform-origin:right center;">(7%)</span>
<span class="t" style="left:983.70px;top:658.16px;font-size:18px;line-height:18px;color:#1a1a1a;font-style:italic;width:38.00px;transform:scaleX(1.1000);transform-origin:right center;">(6%)</span>
<span class="t" style="left:1103.40px;top:658.16px;font-size:18px;line-height:18px;color:#1a1a1a;font-style:italic;width:38.00px;transform:scaleX(1.1000);transform-origin:right center;">(5%)</span>
<span class="t" style="left:1272.50px;top:658.16px;font-size:18px;line-height:18px;color:#1a1a1a;font-style:italic;width:38.00px;transform:scaleX(1.1000);transform-origin:right center;">(8%)</span>
<span class="t" style="left:1410.50px;top:658.16px;font-size:18px;line-height:18px;color:#1a1a1a;font-style:italic;width:38.00px;transform:scaleX(1.1000);transform-origin:right center;">(8%)</span>
<span class="t" style="left:1548.50px;top:658.16px;font-size:18px;line-height:18px;color:#1a1a1a;font-style:italic;width:38.00px;transform:scaleX(1.1000);transform-origin:right center;">(8%)</span>
<span class="t" style="left:1686.50px;top:658.16px;font-size:18px;line-height:18px;color:#1a1a1a;font-style:italic;width:38.00px;transform:scaleX(1.1000);transform-origin:right center;">(8%)</span>
<span class="t" style="left:1824.50px;top:658.16px;font-size:18px;line-height:18px;color:#1a1a1a;font-style:italic;width:38.00px;transform:scaleX(1.1000);transform-origin:right center;">(8%)</span>
<span class="t" style="left:1962.50px;top:658.16px;font-size:18px;line-height:18px;color:#1a1a1a;font-style:italic;width:38.00px;transform:scaleX(1.1000);transform-origin:right center;">(8%)</span>
<span class="t" style="left:2100.50px;top:658.16px;font-size:18px;line-height:18px;color:#1a1a1a;font-style:italic;width:38.00px;transform:scaleX(1.1000);transform-origin:right center;">(8%)</span>
<span class="t" style="left:2238.50px;top:658.16px;font-size:18px;line-height:18px;color:#1a1a1a;font-style:italic;width:38.00px;transform:scaleX(1.1000);transform-origin:right center;">(8%)</span>
<span class="t" style="left:2376.50px;top:658.16px;font-size:18px;line-height:18px;color:#1a1a1a;font-style:italic;width:38.00px;transform:scaleX(1.1000);transform-origin:right center;">(8%)</span>
<span class="t" style="left:2514.50px;top:658.16px;font-size:18px;line-height:18px;color:#1a1a1a;font-style:italic;width:38.00px;transform:scaleX(1.1000);transform-origin:right center;">(8%)</span>
<span class="t" style="left:2652.50px;top:658.16px;font-size:18px;line-height:18px;color:#1a1a1a;font-style:italic;width:38.00px;transform:scaleX(1.1000);transform-origin:right center;">(8%)</span>
<span class="t" style="left:2790.50px;top:658.16px;font-size:18px;line-height:18px;color:#1a1a1a;font-style:italic;width:38.00px;transform:scaleX(1.1000);transform-origin:right center;">(8%)</span>
<div style="left:71.00px;top:676.70px;width:1075.00px;height:26.00px;background:#4db2e6;"></div>
<div style="left:1176.00px;top:676.70px;width:1657.00px;height:26.00px;background:#4db2e6;"></div>
<span class="t" style="left:86.80px;top:680.38px;font-size:22px;line-height:22px;color:#fff;font-weight:700;transform:scaleX(0.9682);transform-origin:left center;">Contribution Margin</span>
<span class="t" style="left:607.00px;top:682.00px;font-size:18.9px;line-height:18.9px;color:#fff;font-weight:700;width:47.30px;transform:scaleX(1.0466);transform-origin:right center;">6,053</span>
<span class="t" style="left:716.69px;top:682.00px;font-size:18.9px;line-height:18.9px;color:#fff;font-weight:700;width:57.81px;transform:scaleX(1.0466);transform-origin:right center;">12,555</span>
<span class="t" style="left:836.69px;top:682.00px;font-size:18.9px;line-height:18.9px;color:#fff;font-weight:700;width:57.81px;transform:scaleX(1.0466);transform-origin:right center;">23,174</span>
<span class="t" style="left:956.89px;top:682.00px;font-size:18.9px;line-height:18.9px;color:#fff;font-weight:700;width:57.81px;transform:scaleX(1.0466);transform-origin:right center;">31,363</span>
<span class="t" style="left:1076.59px;top:682.00px;font-size:18.9px;line-height:18.9px;color:#fff;font-weight:700;width:57.81px;transform:scaleX(1.0466);transform-origin:right center;">36,020</span>
<span class="t" style="left:1271.97px;top:682.00px;font-size:18.9px;line-height:18.9px;color:#fff;font-weight:700;width:31.53px;transform:scaleX(1.0466);transform-origin:right center;">504</span>
<span class="t" style="left:1409.97px;top:682.00px;font-size:18.9px;line-height:18.9px;color:#fff;font-weight:700;width:31.53px;transform:scaleX(1.0466);transform-origin:right center;">504</span>
<span class="t" style="left:1547.97px;top:682.00px;font-size:18.9px;line-height:18.9px;color:#fff;font-weight:700;width:31.53px;transform:scaleX(1.0466);transform-origin:right center;">504</span>
<span class="t" style="left:1685.97px;top:682.00px;font-size:18.9px;line-height:18.9px;color:#fff;font-weight:700;width:31.53px;transform:scaleX(1.0466);transform-origin:right center;">504</span>
<span class="t" style="left:1823.97px;top:682.00px;font-size:18.9px;line-height:18.9px;color:#fff;font-weight:700;width:31.53px;transform:scaleX(1.0466);transform-origin:right center;">504</span>
<span class="t" style="left:1961.97px;top:682.00px;font-size:18.9px;line-height:18.9px;color:#fff;font-weight:700;width:31.53px;transform:scaleX(1.0466);transform-origin:right center;">504</span>
<span class="t" style="left:2099.97px;top:682.00px;font-size:18.9px;line-height:18.9px;color:#fff;font-weight:700;width:31.53px;transform:scaleX(1.0466);transform-origin:right center;">504</span>
<span class="t" style="left:2237.97px;top:682.00px;font-size:18.9px;line-height:18.9px;color:#fff;font-weight:700;width:31.53px;transform:scaleX(1.0466);transform-origin:right center;">504</span>
<span class="t" style="left:2375.97px;top:682.00px;font-size:18.9px;line-height:18.9px;color:#fff;font-weight:700;width:31.53px;transform:scaleX(1.0466);transform-origin:right center;">504</span>
<span class="t" style="left:2513.97px;top:682.00px;font-size:18.9px;line-height:18.9px;color:#fff;font-weight:700;width:31.53px;transform:scaleX(1.0466);transform-origin:right center;">504</span>
<span class="t" style="left:2651.97px;top:682.00px;font-size:18.9px;line-height:18.9px;color:#fff;font-weight:700;width:31.53px;transform:scaleX(1.0466);transform-origin:right center;">504</span>
<span class="t" style="left:2789.97px;top:682.00px;font-size:18.9px;line-height:18.9px;color:#fff;font-weight:700;width:31.53px;transform:scaleX(1.0466);transform-origin:right center;">504</span>
<span class="t" style="left:93.50px;top:706.93px;font-size:17.8px;line-height:17.8px;color:#1a1a1a;font-style:italic;transform:scaleX(1.0500);transform-origin:left center;">Contribution Margin %</span>
<span class="t" style="left:618.27px;top:706.76px;font-size:18px;line-height:18px;color:#1a1a1a;font-style:italic;width:36.03px;transform:scaleX(1.1000);transform-origin:right center;">80%</span>
<span class="t" style="left:738.47px;top:706.76px;font-size:18px;line-height:18px;color:#1a1a1a;font-style:italic;width:36.03px;transform:scaleX(1.1000);transform-origin:right center;">81%</span>
<span class="t" style="left:858.47px;top:706.76px;font-size:18px;line-height:18px;color:#1a1a1a;font-style:italic;width:36.03px;transform:scaleX(1.1000);transform-origin:right center;">82%</span>
<span class="t" style="left:978.67px;top:706.76px;font-size:18px;line-height:18px;color:#1a1a1a;font-style:italic;width:36.03px;transform:scaleX(1.1000);transform-origin:right center;">83%</span>
<span class="t" style="left:1098.37px;top:706.76px;font-size:18px;line-height:18px;color:#1a1a1a;font-style:italic;width:36.03px;transform:scaleX(1.1000);transform-origin:right center;">84%</span>
<span class="t" style="left:1267.47px;top:706.76px;font-size:18px;line-height:18px;color:#1a1a1a;font-style:italic;width:36.03px;transform:scaleX(1.1000);transform-origin:right center;">80%</span>
<span class="t" style="left:1405.47px;top:706.76px;font-size:18px;line-height:18px;color:#1a1a1a;font-style:italic;width:36.03px;transform:scaleX(1.1000);transform-origin:right center;">80%</span>
<span class="t" style="left:1543.47px;top:706.76px;font-size:18px;line-height:18px;color:#1a1a1a;font-style:italic;width:36.03px;transform:scaleX(1.1000);transform-origin:right center;">80%</span>
<span class="t" style="left:1681.47px;top:706.76px;font-size:18px;line-height:18px;color:#1a1a1a;font-style:italic;width:36.03px;transform:scaleX(1.1000);transform-origin:right center;">80%</span>
<span class="t" style="left:1819.47px;top:706.76px;font-size:18px;line-height:18px;color:#1a1a1a;font-style:italic;width:36.03px;transform:scaleX(1.1000);transform-origin:right center;">80%</span>
<span class="t" style="left:1957.47px;top:706.76px;font-size:18px;line-height:18px;color:#1a1a1a;font-style:italic;width:36.03px;transform:scaleX(1.1000);transform-origin:right center;">80%</span>
<span class="t" style="left:2095.47px;top:706.76px;font-size:18px;line-height:18px;color:#1a1a1a;font-style:italic;width:36.03px;transform:scaleX(1.1000);transform-origin:right center;">80%</span>
<span class="t" style="left:2233.47px;top:706.76px;font-size:18px;line-height:18px;color:#1a1a1a;font-style:italic;width:36.03px;transform:scaleX(1.1000);transform-origin:right center;">80%</span>
<span class="t" style="left:2371.47px;top:706.76px;font-size:18px;line-height:18px;color:#1a1a1a;font-style:italic;width:36.03px;transform:scaleX(1.1000);transform-origin:right center;">80%</span>
<span class="t" style="left:2509.47px;top:706.76px;font-size:18px;line-height:18px;color:#1a1a1a;font-style:italic;width:36.03px;transform:scaleX(1.1000);transform-origin:right center;">80%</span>
<span class="t" style="left:2647.47px;top:706.76px;font-size:18px;line-height:18px;color:#1a1a1a;font-style:italic;width:36.03px;transform:scaleX(1.1000);transform-origin:right center;">80%</span>
<span class="t" style="left:2785.47px;top:706.76px;font-size:18px;line-height:18px;color:#1a1a1a;font-style:italic;width:36.03px;transform:scaleX(1.1000);transform-origin:right center;">80%</span>
<span class="t" style="left:74.70px;top:729.63px;font-size:17.8px;line-height:17.8px;color:#1a1a1a;">Payroll Expenses</span>
<span class="t" style="left:619.28px;top:729.46px;font-size:18px;line-height:18px;color:#1a1a1a;">(898)</span>
<span class="t" style="left:724.47px;top:729.46px;font-size:18px;line-height:18px;color:#1a1a1a;">(1,106)</span>
<span class="t" style="left:844.47px;top:729.46px;font-size:18px;line-height:18px;color:#1a1a1a;">(1,299)</span>
<span class="t" style="left:964.67px;top:729.46px;font-size:18px;line-height:18px;color:#1a1a1a;">(1,338)</span>
<span class="t" style="left:1084.37px;top:729.46px;font-size:18px;line-height:18px;color:#1a1a1a;">(1,378)</span>
<span class="t" style="left:1278.49px;top:729.46px;font-size:18px;line-height:18px;color:#1a1a1a;">(75)</span>
<span class="t" style="left:1416.49px;top:729.46px;font-size:18px;line-height:18px;color:#1a1a1a;">(75)</span>
<span class="t" style="left:1554.49px;top:729.46px;font-size:18px;line-height:18px;color:#1a1a1a;">(75)</span>
<span class="t" style="left:1692.49px;top:729.46px;font-size:18px;line-height:18px;color:#1a1a1a;">(75)</span>
<span class="t" style="left:1830.49px;top:729.46px;font-size:18px;line-height:18px;color:#1a1a1a;">(75)</span>
<span class="t" style="left:1968.49px;top:729.46px;font-size:18px;line-height:18px;color:#1a1a1a;">(75)</span>
<span class="t" style="left:2106.49px;top:729.46px;font-size:18px;line-height:18px;color:#1a1a1a;">(75)</span>
<span class="t" style="left:2244.49px;top:729.46px;font-size:18px;line-height:18px;color:#1a1a1a;">(75)</span>
<span class="t" style="left:2382.49px;top:729.46px;font-size:18px;line-height:18px;color:#1a1a1a;">(75)</span>
<span class="t" style="left:2520.49px;top:729.46px;font-size:18px;line-height:18px;color:#1a1a1a;">(75)</span>
<span class="t" style="left:2658.49px;top:729.46px;font-size:18px;line-height:18px;color:#1a1a1a;">(75)</span>
<span class="t" style="left:2796.49px;top:729.46px;font-size:18px;line-height:18px;color:#1a1a1a;">(75)</span>
<span class="t" style="left:93.50px;top:753.03px;font-size:17.8px;line-height:17.8px;color:#1a1a1a;font-style:italic;transform:scaleX(1.0500);transform-origin:left center;">% of Revenue</span>
<span class="t" style="left:613.28px;top:752.86px;font-size:18px;line-height:18px;color:#1a1a1a;font-style:italic;width:48.02px;transform:scaleX(1.1000);transform-origin:right center;">(12%)</span>
<span class="t" style="left:743.50px;top:752.86px;font-size:18px;line-height:18px;color:#1a1a1a;font-style:italic;width:38.00px;transform:scaleX(1.1000);transform-origin:right center;">(7%)</span>
<span class="t" style="left:863.50px;top:752.86px;font-size:18px;line-height:18px;color:#1a1a1a;font-style:italic;width:38.00px;transform:scaleX(1.1000);transform-origin:right center;">(5%)</span>
<span class="t" style="left:983.70px;top:752.86px;font-size:18px;line-height:18px;color:#1a1a1a;font-style:italic;width:38.00px;transform:scaleX(1.1000);transform-origin:right center;">(4%)</span>
<span class="t" style="left:1103.40px;top:752.86px;font-size:18px;line-height:18px;color:#1a1a1a;font-style:italic;width:38.00px;transform:scaleX(1.1000);transform-origin:right center;">(3%)</span>
<span class="t" style="left:1262.48px;top:752.86px;font-size:18px;line-height:18px;color:#1a1a1a;font-style:italic;width:48.02px;transform:scaleX(1.1000);transform-origin:right center;">(12%)</span>
<span class="t" style="left:1400.48px;top:752.86px;font-size:18px;line-height:18px;color:#1a1a1a;font-style:italic;width:48.02px;transform:scaleX(1.1000);transform-origin:right center;">(12%)</span>
<span class="t" style="left:1538.48px;top:752.86px;font-size:18px;line-height:18px;color:#1a1a1a;font-style:italic;width:48.02px;transform:scaleX(1.1000);transform-origin:right center;">(12%)</span>
<span class="t" style="left:1676.48px;top:752.86px;font-size:18px;line-height:18px;color:#1a1a1a;font-style:italic;width:48.02px;transform:scaleX(1.1000);transform-origin:right center;">(12%)</span>
<span class="t" style="left:1814.48px;top:752.86px;font-size:18px;line-height:18px;color:#1a1a1a;font-style:italic;width:48.02px;transform:scaleX(1.1000);transform-origin:right center;">(12%)</span>
<span class="t" style="left:1952.48px;top:752.86px;font-size:18px;line-height:18px;color:#1a1a1a;font-style:italic;width:48.02px;transform:scaleX(1.1000);transform-origin:right center;">(12%)</span>
<span class="t" style="left:2090.49px;top:752.86px;font-size:18px;line-height:18px;color:#1a1a1a;font-style:italic;width:48.02px;transform:scaleX(1.1000);transform-origin:right center;">(12%)</span>
<span class="t" style="left:2228.49px;top:752.86px;font-size:18px;line-height:18px;color:#1a1a1a;font-style:italic;width:48.02px;transform:scaleX(1.1000);transform-origin:right center;">(12%)</span>
<span class="t" style="left:2366.49px;top:752.86px;font-size:18px;line-height:18px;color:#1a1a1a;font-style:italic;width:48.02px;transform:scaleX(1.1000);transform-origin:right center;">(12%)</span>
<span class="t" style="left:2504.49px;top:752.86px;font-size:18px;line-height:18px;color:#1a1a1a;font-style:italic;width:48.02px;transform:scaleX(1.1000);transform-origin:right center;">(12%)</span>
<span class="t" style="left:2642.49px;top:752.86px;font-size:18px;line-height:18px;color:#1a1a1a;font-style:italic;width:48.02px;transform:scaleX(1.1000);transform-origin:right center;">(12%)</span>
<span class="t" style="left:2780.49px;top:752.86px;font-size:18px;line-height:18px;color:#1a1a1a;font-style:italic;width:48.02px;transform:scaleX(1.1000);transform-origin:right center;">(12%)</span>
<span class="t" style="left:74.70px;top:781.13px;font-size:17.8px;line-height:17.8px;color:#1a1a1a;">Fixed Expenses</span>
<span class="t" style="left:619.28px;top:780.96px;font-size:18px;line-height:18px;color:#1a1a1a;">(586)</span>
<span class="t" style="left:739.48px;top:780.96px;font-size:18px;line-height:18px;color:#1a1a1a;">(586)</span>
<span class="t" style="left:859.48px;top:780.96px;font-size:18px;line-height:18px;color:#1a1a1a;">(586)</span>
<span class="t" style="left:979.68px;top:780.96px;font-size:18px;line-height:18px;color:#1a1a1a;">(586)</span>
<span class="t" style="left:1099.38px;top:780.96px;font-size:18px;line-height:18px;color:#1a1a1a;">(586)</span>
<span class="t" style="left:1278.49px;top:780.96px;font-size:18px;line-height:18px;color:#1a1a1a;">(49)</span>
<span class="t" style="left:1416.49px;top:780.96px;font-size:18px;line-height:18px;color:#1a1a1a;">(49)</span>
<span class="t" style="left:1554.49px;top:780.96px;font-size:18px;line-height:18px;color:#1a1a1a;">(49)</span>
<span class="t" style="left:1692.49px;top:780.96px;font-size:18px;line-height:18px;color:#1a1a1a;">(49)</span>
<span class="t" style="left:1830.49px;top:780.96px;font-size:18px;line-height:18px;color:#1a1a1a;">(49)</span>
<span class="t" style="left:1968.49px;top:780.96px;font-size:18px;line-height:18px;color:#1a1a1a;">(49)</span>
<span class="t" style="left:2106.49px;top:780.96px;font-size:18px;line-height:18px;color:#1a1a1a;">(49)</span>
<span class="t" style="left:2244.49px;top:780.96px;font-size:18px;line-height:18px;color:#1a1a1a;">(49)</span>
<span class="t" style="left:2382.49px;top:780.96px;font-size:18px;line-height:18px;color:#1a1a1a;">(49)</span>
<span class="t" style="left:2520.49px;top:780.96px;font-size:18px;line-height:18px;color:#1a1a1a;">(49)</span>
<span class="t" style="left:2658.49px;top:780.96px;font-size:18px;line-height:18px;color:#1a1a1a;">(49)</span>
<span class="t" style="left:2796.49px;top:780.96px;font-size:18px;line-height:18px;color:#1a1a1a;">(49)</span>
<span class="t" style="left:93.50px;top:803.83px;font-size:17.8px;line-height:17.8px;color:#1a1a1a;font-style:italic;transform:scaleX(1.0500);transform-origin:left center;">% of Revenue</span>
<span class="t" style="left:623.30px;top:803.66px;font-size:18px;line-height:18px;color:#1a1a1a;font-style:italic;width:38.00px;transform:scaleX(1.1000);transform-origin:right center;">(8%)</span>
<span class="t" style="left:743.50px;top:803.66px;font-size:18px;line-height:18px;color:#1a1a1a;font-style:italic;width:38.00px;transform:scaleX(1.1000);transform-origin:right center;">(4%)</span>
<span class="t" style="left:863.50px;top:803.66px;font-size:18px;line-height:18px;color:#1a1a1a;font-style:italic;width:38.00px;transform:scaleX(1.1000);transform-origin:right center;">(2%)</span>
<span class="t" style="left:983.70px;top:803.66px;font-size:18px;line-height:18px;color:#1a1a1a;font-style:italic;width:38.00px;transform:scaleX(1.1000);transform-origin:right center;">(2%)</span>
<span class="t" style="left:1103.40px;top:803.66px;font-size:18px;line-height:18px;color:#1a1a1a;font-style:italic;width:38.00px;transform:scaleX(1.1000);transform-origin:right center;">(1%)</span>
<span class="t" style="left:1272.50px;top:803.66px;font-size:18px;line-height:18px;color:#1a1a1a;font-style:italic;width:38.00px;transform:scaleX(1.1000);transform-origin:right center;">(8%)</span>
<span class="t" style="left:1410.50px;top:803.66px;font-size:18px;line-height:18px;color:#1a1a1a;font-style:italic;width:38.00px;transform:scaleX(1.1000);transform-origin:right center;">(8%)</span>
<span class="t" style="left:1548.50px;top:803.66px;font-size:18px;line-height:18px;color:#1a1a1a;font-style:italic;width:38.00px;transform:scaleX(1.1000);transform-origin:right center;">(8%)</span>
<span class="t" style="left:1686.50px;top:803.66px;font-size:18px;line-height:18px;color:#1a1a1a;font-style:italic;width:38.00px;transform:scaleX(1.1000);transform-origin:right center;">(8%)</span>
<span class="t" style="left:1824.50px;top:803.66px;font-size:18px;line-height:18px;color:#1a1a1a;font-style:italic;width:38.00px;transform:scaleX(1.1000);transform-origin:right center;">(8%)</span>
<span class="t" style="left:1962.50px;top:803.66px;font-size:18px;line-height:18px;color:#1a1a1a;font-style:italic;width:38.00px;transform:scaleX(1.1000);transform-origin:right center;">(8%)</span>
<span class="t" style="left:2100.50px;top:803.66px;font-size:18px;line-height:18px;color:#1a1a1a;font-style:italic;width:38.00px;transform:scaleX(1.1000);transform-origin:right center;">(8%)</span>
<span class="t" style="left:2238.50px;top:803.66px;font-size:18px;line-height:18px;color:#1a1a1a;font-style:italic;width:38.00px;transform:scaleX(1.1000);transform-origin:right center;">(8%)</span>
<span class="t" style="left:2376.50px;top:803.66px;font-size:18px;line-height:18px;color:#1a1a1a;font-style:italic;width:38.00px;transform:scaleX(1.1000);transform-origin:right center;">(8%)</span>
<span class="t" style="left:2514.50px;top:803.66px;font-size:18px;line-height:18px;color:#1a1a1a;font-style:italic;width:38.00px;transform:scaleX(1.1000);transform-origin:right center;">(8%)</span>
<span class="t" style="left:2652.50px;top:803.66px;font-size:18px;line-height:18px;color:#1a1a1a;font-style:italic;width:38.00px;transform:scaleX(1.1000);transform-origin:right center;">(8%)</span>
<span class="t" style="left:2790.50px;top:803.66px;font-size:18px;line-height:18px;color:#1a1a1a;font-style:italic;width:38.00px;transform:scaleX(1.1000);transform-origin:right center;">(8%)</span>
<div style="left:71.00px;top:827.50px;width:1075.00px;height:25.80px;background:#4db2e6;"></div>
<div style="left:1176.00px;top:827.50px;width:1657.00px;height:25.80px;background:#4db2e6;"></div>
<span class="t" style="left:86.80px;top:830.98px;font-size:22px;line-height:22px;color:#fff;font-weight:700;transform:scaleX(0.9682);transform-origin:left center;">EBITDA</span>
<span class="t" style="left:607.00px;top:832.60px;font-size:18.9px;line-height:18.9px;color:#fff;font-weight:700;width:47.30px;transform:scaleX(1.0466);transform-origin:right center;">4,570</span>
<span class="t" style="left:716.69px;top:832.60px;font-size:18.9px;line-height:18.9px;color:#fff;font-weight:700;width:57.81px;transform:scaleX(1.0466);transform-origin:right center;">10,863</span>
<span class="t" style="left:836.69px;top:832.60px;font-size:18.9px;line-height:18.9px;color:#fff;font-weight:700;width:57.81px;transform:scaleX(1.0466);transform-origin:right center;">21,290</span>
<span class="t" style="left:956.89px;top:832.60px;font-size:18.9px;line-height:18.9px;color:#fff;font-weight:700;width:57.81px;transform:scaleX(1.0466);transform-origin:right center;">29,440</span>
<span class="t" style="left:1076.59px;top:832.60px;font-size:18.9px;line-height:18.9px;color:#fff;font-weight:700;width:57.81px;transform:scaleX(1.0466);transform-origin:right center;">34,056</span>
<span class="t" style="left:1271.97px;top:832.60px;font-size:18.9px;line-height:18.9px;color:#fff;font-weight:700;width:31.53px;transform:scaleX(1.0466);transform-origin:right center;">381</span>
<span class="t" style="left:1409.97px;top:832.60px;font-size:18.9px;line-height:18.9px;color:#fff;font-weight:700;width:31.53px;transform:scaleX(1.0466);transform-origin:right center;">381</span>
<span class="t" style="left:1547.97px;top:832.60px;font-size:18.9px;line-height:18.9px;color:#fff;font-weight:700;width:31.53px;transform:scaleX(1.0466);transform-origin:right center;">381</span>
<span class="t" style="left:1685.97px;top:832.60px;font-size:18.9px;line-height:18.9px;color:#fff;font-weight:700;width:31.53px;transform:scaleX(1.0466);transform-origin:right center;">381</span>
<span class="t" style="left:1823.97px;top:832.60px;font-size:18.9px;line-height:18.9px;color:#fff;font-weight:700;width:31.53px;transform:scaleX(1.0466);transform-origin:right center;">381</span>
<span class="t" style="left:1961.97px;top:832.60px;font-size:18.9px;line-height:18.9px;color:#fff;font-weight:700;width:31.53px;transform:scaleX(1.0466);transform-origin:right center;">381</span>
<span class="t" style="left:2099.97px;top:832.60px;font-size:18.9px;line-height:18.9px;color:#fff;font-weight:700;width:31.53px;transform:scaleX(1.0466);transform-origin:right center;">381</span>
<span class="t" style="left:2237.97px;top:832.60px;font-size:18.9px;line-height:18.9px;color:#fff;font-weight:700;width:31.53px;transform:scaleX(1.0466);transform-origin:right center;">381</span>
<span class="t" style="left:2375.97px;top:832.60px;font-size:18.9px;line-height:18.9px;color:#fff;font-weight:700;width:31.53px;transform:scaleX(1.0466);transform-origin:right center;">381</span>
<span class="t" style="left:2513.97px;top:832.60px;font-size:18.9px;line-height:18.9px;color:#fff;font-weight:700;width:31.53px;transform:scaleX(1.0466);transform-origin:right center;">381</span>
<span class="t" style="left:2651.97px;top:832.60px;font-size:18.9px;line-height:18.9px;color:#fff;font-weight:700;width:31.53px;transform:scaleX(1.0466);transform-origin:right center;">381</span>
<span class="t" style="left:2789.97px;top:832.60px;font-size:18.9px;line-height:18.9px;color:#fff;font-weight:700;width:31.53px;transform:scaleX(1.0466);transform-origin:right center;">381</span>
<span class="t" style="left:74.70px;top:857.63px;font-size:17.8px;line-height:17.8px;color:#1a1a1a;font-style:italic;transform:scaleX(1.0500);transform-origin:left center;">EBITDA %</span>
<span class="t" style="left:618.27px;top:857.46px;font-size:18px;line-height:18px;color:#1a1a1a;font-style:italic;width:36.03px;transform:scaleX(1.1000);transform-origin:right center;">61%</span>
<span class="t" style="left:738.47px;top:857.46px;font-size:18px;line-height:18px;color:#1a1a1a;font-style:italic;width:36.03px;transform:scaleX(1.1000);transform-origin:right center;">70%</span>
<span class="t" style="left:858.47px;top:857.46px;font-size:18px;line-height:18px;color:#1a1a1a;font-style:italic;width:36.03px;transform:scaleX(1.1000);transform-origin:right center;">76%</span>
<span class="t" style="left:978.67px;top:857.46px;font-size:18px;line-height:18px;color:#1a1a1a;font-style:italic;width:36.03px;transform:scaleX(1.1000);transform-origin:right center;">78%</span>
<span class="t" style="left:1098.37px;top:857.46px;font-size:18px;line-height:18px;color:#1a1a1a;font-style:italic;width:36.03px;transform:scaleX(1.1000);transform-origin:right center;">80%</span>
<span class="t" style="left:1267.47px;top:857.46px;font-size:18px;line-height:18px;color:#1a1a1a;font-style:italic;width:36.03px;transform:scaleX(1.1000);transform-origin:right center;">61%</span>
<span class="t" style="left:1405.47px;top:857.46px;font-size:18px;line-height:18px;color:#1a1a1a;font-style:italic;width:36.03px;transform:scaleX(1.1000);transform-origin:right center;">61%</span>
<span class="t" style="left:1543.47px;top:857.46px;font-size:18px;line-height:18px;color:#1a1a1a;font-style:italic;width:36.03px;transform:scaleX(1.1000);transform-origin:right center;">61%</span>
<span class="t" style="left:1681.47px;top:857.46px;font-size:18px;line-height:18px;color:#1a1a1a;font-style:italic;width:36.03px;transform:scaleX(1.1000);transform-origin:right center;">61%</span>
<span class="t" style="left:1819.47px;top:857.46px;font-size:18px;line-height:18px;color:#1a1a1a;font-style:italic;width:36.03px;transform:scaleX(1.1000);transform-origin:right center;">61%</span>
<span class="t" style="left:1957.47px;top:857.46px;font-size:18px;line-height:18px;color:#1a1a1a;font-style:italic;width:36.03px;transform:scaleX(1.1000);transform-origin:right center;">61%</span>
<span class="t" style="left:2095.47px;top:857.46px;font-size:18px;line-height:18px;color:#1a1a1a;font-style:italic;width:36.03px;transform:scaleX(1.1000);transform-origin:right center;">61%</span>
<span class="t" style="left:2233.47px;top:857.46px;font-size:18px;line-height:18px;color:#1a1a1a;font-style:italic;width:36.03px;transform:scaleX(1.1000);transform-origin:right center;">61%</span>
<span class="t" style="left:2371.47px;top:857.46px;font-size:18px;line-height:18px;color:#1a1a1a;font-style:italic;width:36.03px;transform:scaleX(1.1000);transform-origin:right center;">61%</span>
<span class="t" style="left:2509.47px;top:857.46px;font-size:18px;line-height:18px;color:#1a1a1a;font-style:italic;width:36.03px;transform:scaleX(1.1000);transform-origin:right center;">61%</span>
<span class="t" style="left:2647.47px;top:857.46px;font-size:18px;line-height:18px;color:#1a1a1a;font-style:italic;width:36.03px;transform:scaleX(1.1000);transform-origin:right center;">61%</span>
<span class="t" style="left:2785.47px;top:857.46px;font-size:18px;line-height:18px;color:#1a1a1a;font-style:italic;width:36.03px;transform:scaleX(1.1000);transform-origin:right center;">61%</span>
<span class="t" style="left:74.70px;top:880.63px;font-size:17.8px;line-height:17.8px;color:#1a1a1a;">Depreciation &amp; Amortization</span>
<span class="t" style="left:604.27px;top:880.46px;font-size:18px;line-height:18px;color:#1a1a1a;">(2,310)</span>
<span class="t" style="left:724.47px;top:880.46px;font-size:18px;line-height:18px;color:#1a1a1a;">(3,900)</span>
<span class="t" style="left:844.47px;top:880.46px;font-size:18px;line-height:18px;color:#1a1a1a;">(3,900)</span>
<span class="t" style="left:964.67px;top:880.46px;font-size:18px;line-height:18px;color:#1a1a1a;">(3,900)</span>
<span class="t" style="left:1084.37px;top:880.46px;font-size:18px;line-height:18px;color:#1a1a1a;">(3,900)</span>
<span class="t" style="left:1278.49px;top:880.46px;font-size:18px;line-height:18px;color:#1a1a1a;">(23)</span>
<span class="t" style="left:1416.49px;top:880.46px;font-size:18px;line-height:18px;color:#1a1a1a;">(48)</span>
<span class="t" style="left:1554.49px;top:880.46px;font-size:18px;line-height:18px;color:#1a1a1a;">(83)</span>
<span class="t" style="left:1683.81px;top:880.46px;font-size:18px;line-height:18px;color:#1a1a1a;">(115)</span>
<span class="t" style="left:1820.48px;top:880.46px;font-size:18px;line-height:18px;color:#1a1a1a;">(149)</span>
<span class="t" style="left:1958.48px;top:880.46px;font-size:18px;line-height:18px;color:#1a1a1a;">(184)</span>
<span class="t" style="left:2096.48px;top:880.46px;font-size:18px;line-height:18px;color:#1a1a1a;">(218)</span>
<span class="t" style="left:2234.48px;top:880.46px;font-size:18px;line-height:18px;color:#1a1a1a;">(253)</span>
<span class="t" style="left:2372.48px;top:880.46px;font-size:18px;line-height:18px;color:#1a1a1a;">(287)</span>
<span class="t" style="left:2510.48px;top:880.46px;font-size:18px;line-height:18px;color:#1a1a1a;">(306)</span>
<span class="t" style="left:2648.48px;top:880.46px;font-size:18px;line-height:18px;color:#1a1a1a;">(319)</span>
<span class="t" style="left:2786.48px;top:880.46px;font-size:18px;line-height:18px;color:#1a1a1a;">(325)</span>
<span class="t" style="left:74.70px;top:903.93px;font-size:17.8px;line-height:17.8px;color:#1a1a1a;">EBIT</span>
<span class="t" style="left:609.26px;top:903.76px;font-size:18px;line-height:18px;color:#1a1a1a;">2,260</span>
<span class="t" style="left:729.46px;top:903.76px;font-size:18px;line-height:18px;color:#1a1a1a;">6,963</span>
<span class="t" style="left:839.45px;top:903.76px;font-size:18px;line-height:18px;color:#1a1a1a;">17,390</span>
<span class="t" style="left:959.65px;top:903.76px;font-size:18px;line-height:18px;color:#1a1a1a;">25,540</span>
<span class="t" style="left:1079.35px;top:903.76px;font-size:18px;line-height:18px;color:#1a1a1a;">30,156</span>
<span class="t" style="left:1273.47px;top:903.76px;font-size:18px;line-height:18px;color:#1a1a1a;">358</span>
<span class="t" style="left:1411.47px;top:903.76px;font-size:18px;line-height:18px;color:#1a1a1a;">333</span>
<span class="t" style="left:1549.47px;top:903.76px;font-size:18px;line-height:18px;color:#1a1a1a;">297</span>
<span class="t" style="left:1687.47px;top:903.76px;font-size:18px;line-height:18px;color:#1a1a1a;">266</span>
<span class="t" style="left:1825.47px;top:903.76px;font-size:18px;line-height:18px;color:#1a1a1a;">232</span>
<span class="t" style="left:1963.47px;top:903.76px;font-size:18px;line-height:18px;color:#1a1a1a;">197</span>
<span class="t" style="left:2101.47px;top:903.76px;font-size:18px;line-height:18px;color:#1a1a1a;">162</span>
<span class="t" style="left:2239.47px;top:903.76px;font-size:18px;line-height:18px;color:#1a1a1a;">128</span>
<span class="t" style="left:2387.48px;top:903.76px;font-size:18px;line-height:18px;color:#1a1a1a;">93</span>
<span class="t" style="left:2525.48px;top:903.76px;font-size:18px;line-height:18px;color:#1a1a1a;">75</span>
<span class="t" style="left:2663.48px;top:903.76px;font-size:18px;line-height:18px;color:#1a1a1a;">62</span>
<span class="t" style="left:2801.48px;top:903.76px;font-size:18px;line-height:18px;color:#1a1a1a;">56</span>
<span class="t" style="left:74.70px;top:926.93px;font-size:17.8px;line-height:17.8px;color:#1a1a1a;">Net Interest Expense</span>
<span class="t" style="left:629.29px;top:926.76px;font-size:18px;line-height:18px;color:#1a1a1a;">(42)</span>
<span class="t" style="left:749.49px;top:926.76px;font-size:18px;line-height:18px;color:#1a1a1a;">(40)</span>
<span class="t" style="left:869.49px;top:926.76px;font-size:18px;line-height:18px;color:#1a1a1a;">(33)</span>
<span class="t" style="left:989.69px;top:926.76px;font-size:18px;line-height:18px;color:#1a1a1a;">(25)</span>
<span class="t" style="left:1109.39px;top:926.76px;font-size:18px;line-height:18px;color:#1a1a1a;">(18)</span>
<span class="t" style="left:1288.50px;top:926.76px;font-size:18px;line-height:18px;color:#1a1a1a;">(3)</span>
<span class="t" style="left:1426.50px;top:926.76px;font-size:18px;line-height:18px;color:#1a1a1a;">(3)</span>
<span class="t" style="left:1564.50px;top:926.76px;font-size:18px;line-height:18px;color:#1a1a1a;">(4)</span>
<span class="t" style="left:1702.50px;top:926.76px;font-size:18px;line-height:18px;color:#1a1a1a;">(4)</span>
<span class="t" style="left:1840.50px;top:926.76px;font-size:18px;line-height:18px;color:#1a1a1a;">(4)</span>
<span class="t" style="left:1978.50px;top:926.76px;font-size:18px;line-height:18px;color:#1a1a1a;">(4)</span>
<span class="t" style="left:2116.50px;top:926.76px;font-size:18px;line-height:18px;color:#1a1a1a;">(4)</span>
<span class="t" style="left:2254.50px;top:926.76px;font-size:18px;line-height:18px;color:#1a1a1a;">(4)</span>
<span class="t" style="left:2392.50px;top:926.76px;font-size:18px;line-height:18px;color:#1a1a1a;">(4)</span>
<span class="t" style="left:2530.50px;top:926.76px;font-size:18px;line-height:18px;color:#1a1a1a;">(4)</span>
<span class="t" style="left:2668.50px;top:926.76px;font-size:18px;line-height:18px;color:#1a1a1a;">(4)</span>
<span class="t" style="left:2806.50px;top:926.76px;font-size:18px;line-height:18px;color:#1a1a1a;">(4)</span>
<span class="t" style="left:74.70px;top:949.63px;font-size:17.8px;line-height:17.8px;color:#1a1a1a;">Net Profit Before Tax</span>
<span class="t" style="left:609.26px;top:949.46px;font-size:18px;line-height:18px;color:#1a1a1a;">2,217</span>
<span class="t" style="left:729.46px;top:949.46px;font-size:18px;line-height:18px;color:#1a1a1a;">6,923</span>
<span class="t" style="left:839.45px;top:949.46px;font-size:18px;line-height:18px;color:#1a1a1a;">17,357</span>
<span class="t" style="left:959.65px;top:949.46px;font-size:18px;line-height:18px;color:#1a1a1a;">25,515</span>
<span class="t" style="left:1079.35px;top:949.46px;font-size:18px;line-height:18px;color:#1a1a1a;">30,138</span>
<span class="t" style="left:1273.47px;top:949.46px;font-size:18px;line-height:18px;color:#1a1a1a;">356</span>
<span class="t" style="left:1411.47px;top:949.46px;font-size:18px;line-height:18px;color:#1a1a1a;">330</span>
<span class="t" style="left:1549.47px;top:949.46px;font-size:18px;line-height:18px;color:#1a1a1a;">294</span>
<span class="t" style="left:1687.47px;top:949.46px;font-size:18px;line-height:18px;color:#1a1a1a;">262</span>
<span class="t" style="left:1825.47px;top:949.46px;font-size:18px;line-height:18px;color:#1a1a1a;">228</span>
<span class="t" style="left:1963.47px;top:949.46px;font-size:18px;line-height:18px;color:#1a1a1a;">193</span>
<span class="t" style="left:2101.47px;top:949.46px;font-size:18px;line-height:18px;color:#1a1a1a;">159</span>
<span class="t" style="left:2239.47px;top:949.46px;font-size:18px;line-height:18px;color:#1a1a1a;">124</span>
<span class="t" style="left:2387.48px;top:949.46px;font-size:18px;line-height:18px;color:#1a1a1a;">90</span>
<span class="t" style="left:2525.48px;top:949.46px;font-size:18px;line-height:18px;color:#1a1a1a;">71</span>
<span class="t" style="left:2663.48px;top:949.46px;font-size:18px;line-height:18px;color:#1a1a1a;">58</span>
<span class="t" style="left:2801.48px;top:949.46px;font-size:18px;line-height:18px;color:#1a1a1a;">52</span>
<span class="t" style="left:74.70px;top:973.03px;font-size:17.8px;line-height:17.8px;color:#1a1a1a;">Tax Expense</span>
<span class="t" style="left:619.28px;top:972.86px;font-size:18px;line-height:18px;color:#1a1a1a;">(554)</span>
<span class="t" style="left:724.47px;top:972.86px;font-size:18px;line-height:18px;color:#1a1a1a;">(1,731)</span>
<span class="t" style="left:844.47px;top:972.86px;font-size:18px;line-height:18px;color:#1a1a1a;">(4,339)</span>
<span class="t" style="left:964.67px;top:972.86px;font-size:18px;line-height:18px;color:#1a1a1a;">(6,379)</span>
<span class="t" style="left:1084.37px;top:972.86px;font-size:18px;line-height:18px;color:#1a1a1a;">(7,535)</span>
<span class="t" style="left:1278.49px;top:972.86px;font-size:18px;line-height:18px;color:#1a1a1a;">(89)</span>
<span class="t" style="left:1416.49px;top:972.86px;font-size:18px;line-height:18px;color:#1a1a1a;">(83)</span>
<span class="t" style="left:1554.49px;top:972.86px;font-size:18px;line-height:18px;color:#1a1a1a;">(73)</span>
<span class="t" style="left:1692.49px;top:972.86px;font-size:18px;line-height:18px;color:#1a1a1a;">(65)</span>
<span class="t" style="left:1830.49px;top:972.86px;font-size:18px;line-height:18px;color:#1a1a1a;">(57)</span>
<span class="t" style="left:1968.49px;top:972.86px;font-size:18px;line-height:18px;color:#1a1a1a;">(48)</span>
<span class="t" style="left:2106.49px;top:972.86px;font-size:18px;line-height:18px;color:#1a1a1a;">(40)</span>
<span class="t" style="left:2244.49px;top:972.86px;font-size:18px;line-height:18px;color:#1a1a1a;">(31)</span>
<span class="t" style="left:2382.49px;top:972.86px;font-size:18px;line-height:18px;color:#1a1a1a;">(22)</span>
<span class="t" style="left:2520.49px;top:972.86px;font-size:18px;line-height:18px;color:#1a1a1a;">(18)</span>
<span class="t" style="left:2658.49px;top:972.86px;font-size:18px;line-height:18px;color:#1a1a1a;">(15)</span>
<span class="t" style="left:2796.49px;top:972.86px;font-size:18px;line-height:18px;color:#1a1a1a;">(13)</span>
<div style="left:71.00px;top:991.40px;width:1075.00px;height:26.20px;background:#4db2e6;"></div>
<div style="left:1176.00px;top:991.40px;width:1657.00px;height:26.20px;background:#4db2e6;"></div>
<span class="t" style="left:86.80px;top:995.28px;font-size:22px;line-height:22px;color:#fff;font-weight:700;transform:scaleX(0.9682);transform-origin:left center;">Net Profit After Tax</span>
<span class="t" style="left:607.00px;top:996.90px;font-size:18.9px;line-height:18.9px;color:#fff;font-weight:700;width:47.30px;transform:scaleX(1.0466);transform-origin:right center;">1,663</span>
<span class="t" style="left:727.20px;top:996.90px;font-size:18.9px;line-height:18.9px;color:#fff;font-weight:700;width:47.30px;transform:scaleX(1.0466);transform-origin:right center;">5,192</span>
<span class="t" style="left:836.69px;top:996.90px;font-size:18.9px;line-height:18.9px;color:#fff;font-weight:700;width:57.81px;transform:scaleX(1.0466);transform-origin:right center;">13,017</span>
<span class="t" style="left:956.89px;top:996.90px;font-size:18.9px;line-height:18.9px;color:#fff;font-weight:700;width:57.81px;transform:scaleX(1.0466);transform-origin:right center;">19,136</span>
<span class="t" style="left:1076.59px;top:996.90px;font-size:18.9px;line-height:18.9px;color:#fff;font-weight:700;width:57.81px;transform:scaleX(1.0466);transform-origin:right center;">22,604</span>
<span class="t" style="left:1271.97px;top:996.90px;font-size:18.9px;line-height:18.9px;color:#fff;font-weight:700;width:31.53px;transform:scaleX(1.0466);transform-origin:right center;">267</span>
<span class="t" style="left:1409.97px;top:996.90px;font-size:18.9px;line-height:18.9px;color:#fff;font-weight:700;width:31.53px;transform:scaleX(1.0466);transform-origin:right center;">248</span>
<span class="t" style="left:1547.97px;top:996.90px;font-size:18.9px;line-height:18.9px;color:#fff;font-weight:700;width:31.53px;transform:scaleX(1.0466);transform-origin:right center;">220</span>
<span class="t" style="left:1685.97px;top:996.90px;font-size:18.9px;line-height:18.9px;color:#fff;font-weight:700;width:31.53px;transform:scaleX(1.0466);transform-origin:right center;">196</span>
<span class="t" style="left:1823.97px;top:996.90px;font-size:18.9px;line-height:18.9px;color:#fff;font-weight:700;width:31.53px;transform:scaleX(1.0466);transform-origin:right center;">171</span>
<span class="t" style="left:1961.97px;top:996.90px;font-size:18.9px;line-height:18.9px;color:#fff;font-weight:700;width:31.53px;transform:scaleX(1.0466);transform-origin:right center;">145</span>
<span class="t" style="left:2101.01px;top:996.90px;font-size:18.9px;line-height:18.9px;color:#fff;font-weight:700;width:30.49px;transform:scaleX(1.0466);transform-origin:right center;">119</span>
<span class="t" style="left:2248.48px;top:996.90px;font-size:18.9px;line-height:18.9px;color:#fff;font-weight:700;width:21.02px;transform:scaleX(1.0466);transform-origin:right center;">93</span>
<span class="t" style="left:2386.48px;top:996.90px;font-size:18.9px;line-height:18.9px;color:#fff;font-weight:700;width:21.02px;transform:scaleX(1.0466);transform-origin:right center;">67</span>
<span class="t" style="left:2524.48px;top:996.90px;font-size:18.9px;line-height:18.9px;color:#fff;font-weight:700;width:21.02px;transform:scaleX(1.0466);transform-origin:right center;">54</span>
<span class="t" style="left:2662.48px;top:996.90px;font-size:18.9px;line-height:18.9px;color:#fff;font-weight:700;width:21.02px;transform:scaleX(1.0466);transform-origin:right center;">44</span>
<span class="t" style="left:2800.48px;top:996.90px;font-size:18.9px;line-height:18.9px;color:#fff;font-weight:700;width:21.02px;transform:scaleX(1.0466);transform-origin:right center;">39</span>
<span class="t" style="left:93.50px;top:1022.13px;font-size:17.8px;line-height:17.8px;color:#1a1a1a;font-style:italic;transform:scaleX(1.0500);transform-origin:left center;">Net Profit After Tax %</span>
<span class="t" style="left:618.27px;top:1021.96px;font-size:18px;line-height:18px;color:#1a1a1a;font-style:italic;width:36.03px;transform:scaleX(1.1000);transform-origin:right center;">22%</span>
<span class="t" style="left:738.47px;top:1021.96px;font-size:18px;line-height:18px;color:#1a1a1a;font-style:italic;width:36.03px;transform:scaleX(1.1000);transform-origin:right center;">34%</span>
<span class="t" style="left:858.47px;top:1021.96px;font-size:18px;line-height:18px;color:#1a1a1a;font-style:italic;width:36.03px;transform:scaleX(1.1000);transform-origin:right center;">46%</span>
<span class="t" style="left:978.67px;top:1021.96px;font-size:18px;line-height:18px;color:#1a1a1a;font-style:italic;width:36.03px;transform:scaleX(1.1000);transform-origin:right center;">51%</span>
<span class="t" style="left:1098.37px;top:1021.96px;font-size:18px;line-height:18px;color:#1a1a1a;font-style:italic;width:36.03px;transform:scaleX(1.1000);transform-origin:right center;">53%</span>
<span class="t" style="left:1267.47px;top:1021.96px;font-size:18px;line-height:18px;color:#1a1a1a;font-style:italic;width:36.03px;transform:scaleX(1.1000);transform-origin:right center;">42%</span>
<span class="t" style="left:1405.47px;top:1021.96px;font-size:18px;line-height:18px;color:#1a1a1a;font-style:italic;width:36.03px;transform:scaleX(1.1000);transform-origin:right center;">39%</span>
<span class="t" style="left:1543.47px;top:1021.96px;font-size:18px;line-height:18px;color:#1a1a1a;font-style:italic;width:36.03px;transform:scaleX(1.1000);transform-origin:right center;">35%</span>
<span class="t" style="left:1681.47px;top:1021.96px;font-size:18px;line-height:18px;color:#1a1a1a;font-style:italic;width:36.03px;transform:scaleX(1.1000);transform-origin:right center;">31%</span>
<span class="t" style="left:1819.47px;top:1021.96px;font-size:18px;line-height:18px;color:#1a1a1a;font-style:italic;width:36.03px;transform:scaleX(1.1000);transform-origin:right center;">27%</span>
<span class="t" style="left:1957.47px;top:1021.96px;font-size:18px;line-height:18px;color:#1a1a1a;font-style:italic;width:36.03px;transform:scaleX(1.1000);transform-origin:right center;">23%</span>
<span class="t" style="left:2095.47px;top:1021.96px;font-size:18px;line-height:18px;color:#1a1a1a;font-style:italic;width:36.03px;transform:scaleX(1.1000);transform-origin:right center;">19%</span>
<span class="t" style="left:2233.47px;top:1021.96px;font-size:18px;line-height:18px;color:#1a1a1a;font-style:italic;width:36.03px;transform:scaleX(1.1000);transform-origin:right center;">15%</span>
<span class="t" style="left:2372.81px;top:1021.96px;font-size:18px;line-height:18px;color:#1a1a1a;font-style:italic;width:34.69px;transform:scaleX(1.1000);transform-origin:right center;">11%</span>
<span class="t" style="left:2519.48px;top:1021.96px;font-size:18px;line-height:18px;color:#1a1a1a;font-style:italic;width:26.02px;transform:scaleX(1.1000);transform-origin:right center;">9%</span>
<span class="t" style="left:2657.48px;top:1021.96px;font-size:18px;line-height:18px;color:#1a1a1a;font-style:italic;width:26.02px;transform:scaleX(1.1000);transform-origin:right center;">7%</span>
<span class="t" style="left:2795.48px;top:1021.96px;font-size:18px;line-height:18px;color:#1a1a1a;font-style:italic;width:26.02px;transform:scaleX(1.1000);transform-origin:right center;">6%</span>
<span class="t" style="left:74.70px;top:1633.03px;font-size:17.8px;line-height:17.8px;color:#1a1a1a;">Current Assets</span>
<span class="t" style="left:594.26px;top:1632.86px;font-size:18px;line-height:18px;color:#1a1a1a;">(33,540)</span>
<span class="t" style="left:714.46px;top:1632.86px;font-size:18px;line-height:18px;color:#1a1a1a;">(24,487)</span>
<span class="t" style="left:844.47px;top:1632.86px;font-size:18px;line-height:18px;color:#1a1a1a;">(7,587)</span>
<span class="t" style="left:959.65px;top:1632.86px;font-size:18px;line-height:18px;color:#1a1a1a;">15,389</span>
<span class="t" style="left:1079.35px;top:1632.86px;font-size:18px;line-height:18px;color:#1a1a1a;">41,795</span>
<span class="t" style="left:1253.47px;top:1632.86px;font-size:18px;line-height:18px;color:#1a1a1a;">(1,090)</span>
<span class="t" style="left:1391.47px;top:1632.86px;font-size:18px;line-height:18px;color:#1a1a1a;">(3,845)</span>
<span class="t" style="left:1529.47px;top:1632.86px;font-size:18px;line-height:18px;color:#1a1a1a;">(7,596)</span>
<span class="t" style="left:1660.13px;top:1632.86px;font-size:18px;line-height:18px;color:#1a1a1a;">(11,118)</span>
<span class="t" style="left:1795.46px;top:1632.86px;font-size:18px;line-height:18px;color:#1a1a1a;">(14,805)</span>
<span class="t" style="left:1933.46px;top:1632.86px;font-size:18px;line-height:18px;color:#1a1a1a;">(18,690)</span>
<span class="t" style="left:2071.46px;top:1632.86px;font-size:18px;line-height:18px;color:#1a1a1a;">(22,508)</span>
<span class="t" style="left:2209.46px;top:1632.86px;font-size:18px;line-height:18px;color:#1a1a1a;">(26,313)</span>
<span class="t" style="left:2347.46px;top:1632.86px;font-size:18px;line-height:18px;color:#1a1a1a;">(30,105)</span>
<span class="t" style="left:2485.46px;top:1632.86px;font-size:18px;line-height:18px;color:#1a1a1a;">(31,949)</span>
<span class="t" style="left:2623.46px;top:1632.86px;font-size:18px;line-height:18px;color:#1a1a1a;">(33,186)</span>
<span class="t" style="left:2761.46px;top:1632.86px;font-size:18px;line-height:18px;color:#1a1a1a;">(33,540)</span>
<span class="t" style="left:74.70px;top:1656.13px;font-size:17.8px;line-height:17.8px;color:#1a1a1a;">Non-Current Assets</span>
<span class="t" style="left:599.25px;top:1655.96px;font-size:18px;line-height:18px;color:#1a1a1a;">36,690</span>
<span class="t" style="left:719.45px;top:1655.96px;font-size:18px;line-height:18px;color:#1a1a1a;">32,790</span>
<span class="t" style="left:839.45px;top:1655.96px;font-size:18px;line-height:18px;color:#1a1a1a;">28,890</span>
<span class="t" style="left:959.65px;top:1655.96px;font-size:18px;line-height:18px;color:#1a1a1a;">24,990</span>
<span class="t" style="left:1079.35px;top:1655.96px;font-size:18px;line-height:18px;color:#1a1a1a;">21,090</span>
<span class="t" style="left:1258.46px;top:1655.96px;font-size:18px;line-height:18px;color:#1a1a1a;">2,678</span>
<span class="t" style="left:1396.46px;top:1655.96px;font-size:18px;line-height:18px;color:#1a1a1a;">5,693</span>
<span class="t" style="left:1534.46px;top:1655.96px;font-size:18px;line-height:18px;color:#1a1a1a;">9,848</span>
<span class="t" style="left:1662.45px;top:1655.96px;font-size:18px;line-height:18px;color:#1a1a1a;">13,566</span>
<span class="t" style="left:1800.45px;top:1655.96px;font-size:18px;line-height:18px;color:#1a1a1a;">17,418</span>
<span class="t" style="left:1938.45px;top:1655.96px;font-size:18px;line-height:18px;color:#1a1a1a;">21,448</span>
<span class="t" style="left:2076.45px;top:1655.96px;font-size:18px;line-height:18px;color:#1a1a1a;">25,378</span>
<span class="t" style="left:2214.45px;top:1655.96px;font-size:18px;line-height:18px;color:#1a1a1a;">29,273</span>
<span class="t" style="left:2352.45px;top:1655.96px;font-size:18px;line-height:18px;color:#1a1a1a;">33,133</span>
<span class="t" style="left:2490.45px;top:1655.96px;font-size:18px;line-height:18px;color:#1a1a1a;">35,023</span>
<span class="t" style="left:2628.45px;top:1655.96px;font-size:18px;line-height:18px;color:#1a1a1a;">36,304</span>
<span class="t" style="left:2766.45px;top:1655.96px;font-size:18px;line-height:18px;color:#1a1a1a;">36,690</span>
<div style="left:71.00px;top:1065.10px;width:1075.00px;height:34.40px;background:#4b50cf;"></div>
<div style="left:1176.00px;top:1065.10px;width:1657.00px;height:34.40px;background:#4b50cf;"></div>
<span class="t" style="left:256.28px;top:1068.90px;font-size:28px;line-height:28px;color:#fff;font-weight:700;transform:scaleX(1.1015);transform-origin:center center;">Income Statement ($'000) - 5 years to December 2030</span>
<span class="t" style="left:1792.74px;top:1068.90px;font-size:28px;line-height:28px;color:#fff;font-weight:700;transform:scaleX(1.1281);transform-origin:center center;">Income Statement ($'000) - 2026</span>
<div style="left:71.00px;top:1561.30px;width:1075.00px;height:33.90px;background:#4b50cf;"></div>
<div style="left:1176.00px;top:1561.30px;width:1657.00px;height:33.90px;background:#4b50cf;"></div>
<span class="t" style="left:281.16px;top:1564.60px;font-size:28px;line-height:28px;color:#fff;font-weight:700;transform:scaleX(1.0859);transform-origin:center center;">Balance Sheet ($'000) - 5 years to December 2030</span>
<span class="t" style="left:1817.62px;top:1564.60px;font-size:28px;line-height:28px;color:#fff;font-weight:700;transform:scaleX(1.1036);transform-origin:center center;">Balance Sheet ($'000) - 2026</span>
<div style="left:72.00px;top:1601.00px;width:473.00px;height:22.30px;background:#6c71e5;"></div>
<span class="t" style="left:83.40px;top:1604.89px;font-size:18.2px;line-height:18.2px;color:#fff;font-weight:700;transform:scaleX(1.0249);transform-origin:left center;">Year Ending</span>
<div style="left:545.60px;top:1601.00px;width:119.70px;height:22.30px;background:#6c71e5;"></div>
<span class="t" style="left:584.91px;top:1604.89px;font-size:18.2px;line-height:18.2px;color:#fff;font-weight:700;transform:scaleX(1.0571);transform-origin:center center;">2026</span>
<div style="left:665.90px;top:1601.00px;width:119.60px;height:22.30px;background:#6c71e5;"></div>
<span class="t" style="left:705.16px;top:1604.89px;font-size:18.2px;line-height:18.2px;color:#fff;font-weight:700;transform:scaleX(1.0571);transform-origin:center center;">2027</span>
<div style="left:786.10px;top:1601.00px;width:119.40px;height:22.30px;background:#6c71e5;"></div>
<span class="t" style="left:825.26px;top:1604.89px;font-size:18.2px;line-height:18.2px;color:#fff;font-weight:700;transform:scaleX(1.0571);transform-origin:center center;">2028</span>
<div style="left:906.10px;top:1601.00px;width:119.60px;height:22.30px;background:#6c71e5;"></div>
<span class="t" style="left:945.36px;top:1604.89px;font-size:18.2px;line-height:18.2px;color:#fff;font-weight:700;transform:scaleX(1.0571);transform-origin:center center;">2029</span>
<div style="left:1026.30px;top:1601.00px;width:119.10px;height:22.30px;background:#6c71e5;"></div>
<span class="t" style="left:1065.31px;top:1604.89px;font-size:18.2px;line-height:18.2px;color:#fff;font-weight:700;transform:scaleX(1.0571);transform-origin:center center;">2030</span>
<div style="left:1177.10px;top:1601.00px;width:137.40px;height:22.30px;background:#6c71e5;"></div>
<span class="t" style="left:1229.82px;top:1604.89px;font-size:18.2px;line-height:18.2px;color:#fff;font-weight:700;transform:scaleX(1.0600);transform-origin:center center;">Jan</span>
<div style="left:1315.10px;top:1601.00px;width:137.40px;height:22.30px;background:#6c71e5;"></div>
<span class="t" style="left:1367.32px;top:1604.89px;font-size:18.2px;line-height:18.2px;color:#fff;font-weight:700;transform:scaleX(1.0600);transform-origin:center center;">Feb</span>
<div style="left:1453.10px;top:1601.00px;width:137.40px;height:22.30px;background:#6c71e5;"></div>
<span class="t" style="left:1505.32px;top:1604.89px;font-size:18.2px;line-height:18.2px;color:#fff;font-weight:700;transform:scaleX(1.0600);transform-origin:center center;">Mar</span>
<div style="left:1591.10px;top:1601.00px;width:137.40px;height:22.30px;background:#6c71e5;"></div>
<span class="t" style="left:1643.83px;top:1604.89px;font-size:18.2px;line-height:18.2px;color:#fff;font-weight:700;transform:scaleX(1.0600);transform-origin:center center;">Apr</span>
<div style="left:1729.10px;top:1601.00px;width:137.40px;height:22.30px;background:#6c71e5;"></div>
<span class="t" style="left:1779.80px;top:1604.89px;font-size:18.2px;line-height:18.2px;color:#fff;font-weight:700;transform:scaleX(1.0600);transform-origin:center center;">May</span>
<div style="left:1867.10px;top:1601.00px;width:137.40px;height:22.30px;background:#6c71e5;"></div>
<span class="t" style="left:1919.32px;top:1604.89px;font-size:18.2px;line-height:18.2px;color:#fff;font-weight:700;transform:scaleX(1.0600);transform-origin:center center;">Jun</span>
<div style="left:2005.10px;top:1601.00px;width:137.40px;height:22.30px;background:#6c71e5;"></div>
<span class="t" style="left:2060.35px;top:1604.89px;font-size:18.2px;line-height:18.2px;color:#fff;font-weight:700;transform:scaleX(1.0600);transform-origin:center center;">Jul</span>
<div style="left:2143.10px;top:1601.00px;width:137.40px;height:22.30px;background:#6c71e5;"></div>
<span class="t" style="left:2193.81px;top:1604.89px;font-size:18.2px;line-height:18.2px;color:#fff;font-weight:700;transform:scaleX(1.0600);transform-origin:center center;">Aug</span>
<div style="left:2281.10px;top:1601.00px;width:137.40px;height:22.30px;background:#6c71e5;"></div>
<span class="t" style="left:2332.81px;top:1604.89px;font-size:18.2px;line-height:18.2px;color:#fff;font-weight:700;transform:scaleX(1.0600);transform-origin:center center;">Sep</span>
<div style="left:2419.10px;top:1601.00px;width:137.40px;height:22.30px;background:#6c71e5;"></div>
<span class="t" style="left:2472.33px;top:1604.89px;font-size:18.2px;line-height:18.2px;color:#fff;font-weight:700;transform:scaleX(1.0600);transform-origin:center center;">Oct</span>
<div style="left:2557.10px;top:1601.00px;width:137.40px;height:22.30px;background:#6c71e5;"></div>
<span class="t" style="left:2608.31px;top:1604.89px;font-size:18.2px;line-height:18.2px;color:#fff;font-weight:700;transform:scaleX(1.0600);transform-origin:center center;">Nov</span>
<div style="left:2695.10px;top:1601.00px;width:137.40px;height:22.30px;background:#6c71e5;"></div>
<span class="t" style="left:2746.81px;top:1604.89px;font-size:18.2px;line-height:18.2px;color:#fff;font-weight:700;transform:scaleX(1.0600);transform-origin:center center;">Dec</span>
<svg style="position:absolute;left:0;top:0" width="2902" height="1762" viewBox="0 0 2902 1762"><rect x="71.5" y="1160.5" width="973.0" height="336.5" fill="none" stroke="#62a0c8" stroke-width="1"/><line x1="265.5" y1="1160.3" x2="265.5" y2="1503.5" stroke="#62a0c8" stroke-width="1"/><line x1="460.5" y1="1160.3" x2="460.5" y2="1503.5" stroke="#62a0c8" stroke-width="1"/><line x1="655.5" y1="1160.3" x2="655.5" y2="1503.5" stroke="#62a0c8" stroke-width="1"/><line x1="849.5" y1="1160.3" x2="849.5" y2="1503.5" stroke="#62a0c8" stroke-width="1"/><line x1="71.2" y1="1497" x2="71.2" y2="1503.5" stroke="#62a0c8" stroke-width="1"/><line x1="1044.4" y1="1497" x2="1044.4" y2="1503.5" stroke="#62a0c8" stroke-width="1"/><line x1="71.2" y1="1197.5" x2="1044.4" y2="1197.5" stroke="#62a0c8" stroke-width="1"/><line x1="71.2" y1="1235.5" x2="1044.4" y2="1235.5" stroke="#62a0c8" stroke-width="1"/><line x1="71.2" y1="1272.5" x2="1044.4" y2="1272.5" stroke="#62a0c8" stroke-width="1"/><line x1="71.2" y1="1309.5" x2="1044.4" y2="1309.5" stroke="#62a0c8" stroke-width="1"/><line x1="71.2" y1="1347.5" x2="1044.4" y2="1347.5" stroke="#62a0c8" stroke-width="1"/><line x1="71.2" y1="1384.5" x2="1044.4" y2="1384.5" stroke="#62a0c8" stroke-width="1"/><line x1="71.2" y1="1422.5" x2="1044.4" y2="1422.5" stroke="#62a0c8" stroke-width="1"/><line x1="71.2" y1="1459.5" x2="1044.4" y2="1459.5" stroke="#62a0c8" stroke-width="1"/><line x1="71.2" y1="1497" x2="1044.4" y2="1497" stroke="#5f9cbf" stroke-width="1.5"/><polyline fill="none" stroke="#e8786d" stroke-width="3.2" stroke-linejoin="round" points="168.5,1440.5 363.2,1381.2 557.8,1286.2 752.4,1215.5 947.1,1177.1"/><circle cx="168.5" cy="1440.5" r="5.5" fill="#e8786d"/><circle cx="363.2" cy="1381.2" r="5.5" fill="#e8786d"/><circle cx="557.8" cy="1286.2" r="5.5" fill="#e8786d"/><circle cx="752.4" cy="1215.5" r="5.5" fill="#e8786d"/><circle cx="947.1" cy="1177.1" r="5.5" fill="#e8786d"/><polyline fill="none" stroke="#5c9a3e" stroke-width="3.2" stroke-linejoin="round" points="168.5,1462.8 363.2,1415.7 557.8,1337.7 752.4,1276.7 947.1,1242.2"/><circle cx="168.5" cy="1462.8" r="5.5" fill="#5c9a3e"/><circle cx="363.2" cy="1415.7" r="5.5" fill="#5c9a3e"/><circle cx="557.8" cy="1337.7" r="5.5" fill="#5c9a3e"/><circle cx="752.4" cy="1276.7" r="5.5" fill="#5c9a3e"/><circle cx="947.1" cy="1242.2" r="5.5" fill="#5c9a3e"/><polyline fill="none" stroke="#4b50cf" stroke-width="3.2" stroke-linejoin="round" points="168.5,1484.6 363.2,1458.2 557.8,1399.6 752.4,1353.8 947.1,1327.9"/><circle cx="168.5" cy="1484.6" r="5.5" fill="#4b50cf"/><circle cx="363.2" cy="1458.2" r="5.5" fill="#4b50cf"/><circle cx="557.8" cy="1399.6" r="5.5" fill="#4b50cf"/><circle cx="752.4" cy="1353.8" r="5.5" fill="#4b50cf"/><circle cx="947.1" cy="1327.9" r="5.5" fill="#4b50cf"/><line x1="329" y1="1130.4" x2="374" y2="1130.4" stroke="#e8786d" stroke-width="3.2"/><circle cx="351.5" cy="1130.4" r="4" fill="#e8786d"/><line x1="490" y1="1130.4" x2="537" y2="1130.4" stroke="#5c9a3e" stroke-width="3.2"/><circle cx="513.5" cy="1130.4" r="4" fill="#5c9a3e"/><line x1="652.9" y1="1130.4" x2="699.7" y2="1130.4" stroke="#4b50cf" stroke-width="3.2"/><circle cx="676.3" cy="1130.4" r="4" fill="#4b50cf"/><line x1="1176.5" y1="1161" x2="2765" y2="1161" stroke="#4aa6d8" stroke-width="2"/><line x1="2765" y1="1161" x2="2765" y2="1497" stroke="#4aa6d8" stroke-width="2"/><line x1="1176.5" y1="1161" x2="1176.5" y2="1497" stroke="#62a0c8" stroke-width="1"/><line x1="1176.5" y1="1497" x2="2765" y2="1497" stroke="#5f9cbf" stroke-width="2"/><line x1="1308.5" y1="1161" x2="1308.5" y2="1502" stroke="#4d9dd2" stroke-width="1"/><line x1="1441.5" y1="1161" x2="1441.5" y2="1502" stroke="#4d9dd2" stroke-width="1"/><line x1="1573.5" y1="1161" x2="1573.5" y2="1502" stroke="#4d9dd2" stroke-width="1"/><line x1="1706.5" y1="1161" x2="1706.5" y2="1502" stroke="#4d9dd2" stroke-width="1"/><line x1="1838.5" y1="1161" x2="1838.5" y2="1502" stroke="#4d9dd2" stroke-width="1"/><line x1="1970.5" y1="1161" x2="1970.5" y2="1502" stroke="#4d9dd2" stroke-width="1"/><line x1="2103.5" y1="1161" x2="2103.5" y2="1502" stroke="#4d9dd2" stroke-width="1"/><line x1="2235.5" y1="1161" x2="2235.5" y2="1502" stroke="#4d9dd2" stroke-width="1"/><line x1="2367.5" y1="1161" x2="2367.5" y2="1502" stroke="#4d9dd2" stroke-width="1"/><line x1="2500.5" y1="1161" x2="2500.5" y2="1502" stroke="#4d9dd2" stroke-width="1"/><line x1="2632.5" y1="1161" x2="2632.5" y2="1502" stroke="#4d9dd2" stroke-width="1"/><line x1="1176.5" y1="1209.5" x2="2765" y2="1209.5" stroke="#4d9dd2" stroke-width="1"/><line x1="1176.5" y1="1257.5" x2="2765" y2="1257.5" stroke="#4d9dd2" stroke-width="1"/><line x1="1176.5" y1="1305.5" x2="2765" y2="1305.5" stroke="#4d9dd2" stroke-width="1"/><line x1="1176.5" y1="1353.5" x2="2765" y2="1353.5" stroke="#4d9dd2" stroke-width="1"/><line x1="1176.5" y1="1401.5" x2="2765" y2="1401.5" stroke="#4d9dd2" stroke-width="1"/><line x1="1176.5" y1="1449.5" x2="2765" y2="1449.5" stroke="#4d9dd2" stroke-width="1"/><polyline fill="none" stroke="#e8786d" stroke-width="3.2" stroke-linejoin="round" points="1242.7,1195.1 1375.1,1195.1 1507.4,1195.1 1639.8,1195.1 1772.2,1195.1 1904.6,1195.1 2036.9,1195.1 2169.3,1195.1 2301.7,1195.1 2434.1,1195.1 2566.4,1195.1 2698.8,1195.1"/><circle cx="1242.7" cy="1195.1" r="5.5" fill="#e8786d"/><circle cx="1375.1" cy="1195.1" r="5.5" fill="#e8786d"/><circle cx="1507.4" cy="1195.1" r="5.5" fill="#e8786d"/><circle cx="1639.8" cy="1195.1" r="5.5" fill="#e8786d"/><circle cx="1772.2" cy="1195.1" r="5.5" fill="#e8786d"/><circle cx="1904.6" cy="1195.1" r="5.5" fill="#e8786d"/><circle cx="2036.9" cy="1195.1" r="5.5" fill="#e8786d"/><circle cx="2169.3" cy="1195.1" r="5.5" fill="#e8786d"/><circle cx="2301.7" cy="1195.1" r="5.5" fill="#e8786d"/><circle cx="2434.1" cy="1195.1" r="5.5" fill="#e8786d"/><circle cx="2566.4" cy="1195.1" r="5.5" fill="#e8786d"/><circle cx="2698.8" cy="1195.1" r="5.5" fill="#e8786d"/><polyline fill="none" stroke="#5c9a3e" stroke-width="3.2" stroke-linejoin="round" points="1242.7,1314.1 1375.1,1314.1 1507.4,1314.1 1639.8,1314.1 1772.2,1314.1 1904.6,1314.1 2036.9,1314.1 2169.3,1314.1 2301.7,1314.1 2434.1,1314.1 2566.4,1314.1 2698.8,1314.1"/><circle cx="1242.7" cy="1314.1" r="5.5" fill="#5c9a3e"/><circle cx="1375.1" cy="1314.1" r="5.5" fill="#5c9a3e"/><circle cx="1507.4" cy="1314.1" r="5.5" fill="#5c9a3e"/><circle cx="1639.8" cy="1314.1" r="5.5" fill="#5c9a3e"/><circle cx="1772.2" cy="1314.1" r="5.5" fill="#5c9a3e"/><circle cx="1904.6" cy="1314.1" r="5.5" fill="#5c9a3e"/><circle cx="2036.9" cy="1314.1" r="5.5" fill="#5c9a3e"/><circle cx="2169.3" cy="1314.1" r="5.5" fill="#5c9a3e"/><circle cx="2301.7" cy="1314.1" r="5.5" fill="#5c9a3e"/><circle cx="2434.1" cy="1314.1" r="5.5" fill="#5c9a3e"/><circle cx="2566.4" cy="1314.1" r="5.5" fill="#5c9a3e"/><circle cx="2698.8" cy="1314.1" r="5.5" fill="#5c9a3e"/><polyline fill="none" stroke="#4b50cf" stroke-width="3.2" stroke-linejoin="round" points="1242.7,1368.8 1375.1,1378.0 1507.4,1391.4 1639.8,1402.9 1772.2,1414.9 1904.6,1427.4 2036.9,1439.9 2169.3,1452.4 2301.7,1464.8 2434.1,1471.1 2566.4,1475.9 2698.8,1478.3"/><circle cx="1242.7" cy="1368.8" r="5.5" fill="#4b50cf"/><circle cx="1375.1" cy="1378.0" r="5.5" fill="#4b50cf"/><circle cx="1507.4" cy="1391.4" r="5.5" fill="#4b50cf"/><circle cx="1639.8" cy="1402.9" r="5.5" fill="#4b50cf"/><circle cx="1772.2" cy="1414.9" r="5.5" fill="#4b50cf"/><circle cx="1904.6" cy="1427.4" r="5.5" fill="#4b50cf"/><circle cx="2036.9" cy="1439.9" r="5.5" fill="#4b50cf"/><circle cx="2169.3" cy="1452.4" r="5.5" fill="#4b50cf"/><circle cx="2301.7" cy="1464.8" r="5.5" fill="#4b50cf"/><circle cx="2434.1" cy="1471.1" r="5.5" fill="#4b50cf"/><circle cx="2566.4" cy="1475.9" r="5.5" fill="#4b50cf"/><circle cx="2698.8" cy="1478.3" r="5.5" fill="#4b50cf"/><line x1="1725.2" y1="1130.7" x2="1770.8" y2="1130.7" stroke="#e8786d" stroke-width="3.2"/><circle cx="1748.0" cy="1130.7" r="4" fill="#e8786d"/><line x1="1886.7" y1="1130.7" x2="1933" y2="1130.7" stroke="#5c9a3e" stroke-width="3.2"/><circle cx="1909.8" cy="1130.7" r="4" fill="#5c9a3e"/><line x1="2050.3" y1="1130.7" x2="2096.5" y2="1130.7" stroke="#4b50cf" stroke-width="3.2"/><circle cx="2073.4" cy="1130.7" r="4" fill="#4b50cf"/></svg>
<span class="t" style="left:379.00px;top:1122.76px;font-size:18px;line-height:18px;color:#000;font-weight:700;transform:scaleX(1.0529);transform-origin:left center;">Revenue</span>
<span class="t" style="left:545.70px;top:1122.76px;font-size:18px;line-height:18px;color:#000;font-weight:700;transform:scaleX(1.0448);transform-origin:left center;">EBITDA</span>
<span class="t" style="left:708.00px;top:1122.76px;font-size:18px;line-height:18px;color:#000;font-weight:700;transform:scaleX(1.1048);transform-origin:left center;">Net Profit After Tax</span>
<span class="t" style="left:1775.60px;top:1122.76px;font-size:18px;line-height:18px;color:#000;font-weight:700;transform:scaleX(1.0529);transform-origin:left center;">Revenue</span>
<span class="t" style="left:1942.00px;top:1122.76px;font-size:18px;line-height:18px;color:#000;font-weight:700;transform:scaleX(1.0448);transform-origin:left center;">EBITDA</span>
<span class="t" style="left:2104.00px;top:1122.76px;font-size:18px;line-height:18px;color:#000;font-weight:700;transform:scaleX(1.1048);transform-origin:left center;">Net Profit After Tax</span>
<span class="t" style="left:1075.45px;top:1152.06px;font-size:18px;line-height:18px;color:#000;font-weight:700;width:55.05px;transform:scaleX(1.1600);transform-origin:right center;">45,000</span>
<span class="t" style="left:1075.45px;top:1189.47px;font-size:18px;line-height:18px;color:#000;font-weight:700;width:55.05px;transform:scaleX(1.1600);transform-origin:right center;">40,000</span>
<span class="t" style="left:1075.45px;top:1226.89px;font-size:18px;line-height:18px;color:#000;font-weight:700;width:55.05px;transform:scaleX(1.1600);transform-origin:right center;">35,000</span>
<span class="t" style="left:1075.45px;top:1264.30px;font-size:18px;line-height:18px;color:#000;font-weight:700;width:55.05px;transform:scaleX(1.1600);transform-origin:right center;">30,000</span>
<span class="t" style="left:1075.45px;top:1301.71px;font-size:18px;line-height:18px;color:#000;font-weight:700;width:55.05px;transform:scaleX(1.1600);transform-origin:right center;">25,000</span>
<span class="t" style="left:1075.45px;top:1339.12px;font-size:18px;line-height:18px;color:#000;font-weight:700;width:55.05px;transform:scaleX(1.1600);transform-origin:right center;">20,000</span>
<span class="t" style="left:1075.45px;top:1376.53px;font-size:18px;line-height:18px;color:#000;font-weight:700;width:55.05px;transform:scaleX(1.1600);transform-origin:right center;">15,000</span>
<span class="t" style="left:1075.45px;top:1413.94px;font-size:18px;line-height:18px;color:#000;font-weight:700;width:55.05px;transform:scaleX(1.1600);transform-origin:right center;">10,000</span>
<span class="t" style="left:1085.46px;top:1451.35px;font-size:18px;line-height:18px;color:#000;font-weight:700;width:45.04px;transform:scaleX(1.1600);transform-origin:right center;">5,000</span>
<span class="t" style="left:1069.00px;top:1488.76px;font-size:18px;line-height:18px;color:#000;font-weight:700;">-</span>
<span class="t" style="left:148.50px;top:1513.76px;font-size:18px;line-height:18px;color:#000;font-weight:700;transform:scaleX(1.1712);transform-origin:center center;">2026</span>
<span class="t" style="left:343.14px;top:1513.76px;font-size:18px;line-height:18px;color:#000;font-weight:700;transform:scaleX(1.1712);transform-origin:center center;">2027</span>
<span class="t" style="left:537.78px;top:1513.76px;font-size:18px;line-height:18px;color:#000;font-weight:700;transform:scaleX(1.1712);transform-origin:center center;">2028</span>
<span class="t" style="left:732.42px;top:1513.76px;font-size:18px;line-height:18px;color:#000;font-weight:700;transform:scaleX(1.1712);transform-origin:center center;">2029</span>
<span class="t" style="left:927.06px;top:1513.76px;font-size:18px;line-height:18px;color:#000;font-weight:700;transform:scaleX(1.1712);transform-origin:center center;">2030</span>
<span class="t" style="left:2791.97px;top:1152.76px;font-size:18px;line-height:18px;color:#000;font-weight:700;width:30.03px;transform:scaleX(1.1600);transform-origin:right center;">700</span>
<span class="t" style="left:2791.97px;top:1200.76px;font-size:18px;line-height:18px;color:#000;font-weight:700;width:30.03px;transform:scaleX(1.1600);transform-origin:right center;">600</span>
<span class="t" style="left:2791.97px;top:1248.76px;font-size:18px;line-height:18px;color:#000;font-weight:700;width:30.03px;transform:scaleX(1.1600);transform-origin:right center;">500</span>
<span class="t" style="left:2791.97px;top:1296.76px;font-size:18px;line-height:18px;color:#000;font-weight:700;width:30.03px;transform:scaleX(1.1600);transform-origin:right center;">400</span>
<span class="t" style="left:2791.97px;top:1344.76px;font-size:18px;line-height:18px;color:#000;font-weight:700;width:30.03px;transform:scaleX(1.1600);transform-origin:right center;">300</span>
<span class="t" style="left:2791.97px;top:1392.76px;font-size:18px;line-height:18px;color:#000;font-weight:700;width:30.03px;transform:scaleX(1.1600);transform-origin:right center;">200</span>
<span class="t" style="left:2791.97px;top:1440.76px;font-size:18px;line-height:18px;color:#000;font-weight:700;width:30.03px;transform:scaleX(1.1600);transform-origin:right center;">100</span>
<span class="t" style="left:2789.00px;top:1488.76px;font-size:18px;line-height:18px;color:#000;font-weight:700;">-</span>
<span class="t" style="left:1227.18px;top:1513.76px;font-size:18px;line-height:18px;color:#000;font-weight:700;transform:scaleX(0.9898);transform-origin:center center;">Jan</span>
<span class="t" style="left:1359.06px;top:1513.76px;font-size:18px;line-height:18px;color:#000;font-weight:700;transform:scaleX(0.9898);transform-origin:center center;">Feb</span>
<span class="t" style="left:1491.43px;top:1513.76px;font-size:18px;line-height:18px;color:#000;font-weight:700;transform:scaleX(0.9898);transform-origin:center center;">Mar</span>
<span class="t" style="left:1624.31px;top:1513.76px;font-size:18px;line-height:18px;color:#000;font-weight:700;transform:scaleX(0.9898);transform-origin:center center;">Apr</span>
<span class="t" style="left:1754.68px;top:1513.76px;font-size:18px;line-height:18px;color:#000;font-weight:700;transform:scaleX(0.9898);transform-origin:center center;">May</span>
<span class="t" style="left:1888.56px;top:1513.76px;font-size:18px;line-height:18px;color:#000;font-weight:700;transform:scaleX(0.9898);transform-origin:center center;">Jun</span>
<span class="t" style="left:2023.93px;top:1513.76px;font-size:18px;line-height:18px;color:#000;font-weight:700;transform:scaleX(0.9898);transform-origin:center center;">Jul</span>
<span class="t" style="left:2151.82px;top:1513.76px;font-size:18px;line-height:18px;color:#000;font-weight:700;transform:scaleX(0.9898);transform-origin:center center;">Aug</span>
<span class="t" style="left:2285.18px;top:1513.76px;font-size:18px;line-height:18px;color:#000;font-weight:700;transform:scaleX(0.9898);transform-origin:center center;">Sep</span>
<span class="t" style="left:2419.06px;top:1513.76px;font-size:18px;line-height:18px;color:#000;font-weight:700;transform:scaleX(0.9898);transform-origin:center center;">Oct</span>
<span class="t" style="left:2549.43px;top:1513.76px;font-size:18px;line-height:18px;color:#000;font-weight:700;transform:scaleX(0.9898);transform-origin:center center;">Nov</span>
<span class="t" style="left:2682.30px;top:1513.76px;font-size:18px;line-height:18px;color:#000;font-weight:700;transform:scaleX(0.9898);transform-origin:center center;">Dec</span>
</div>
</body></html>
